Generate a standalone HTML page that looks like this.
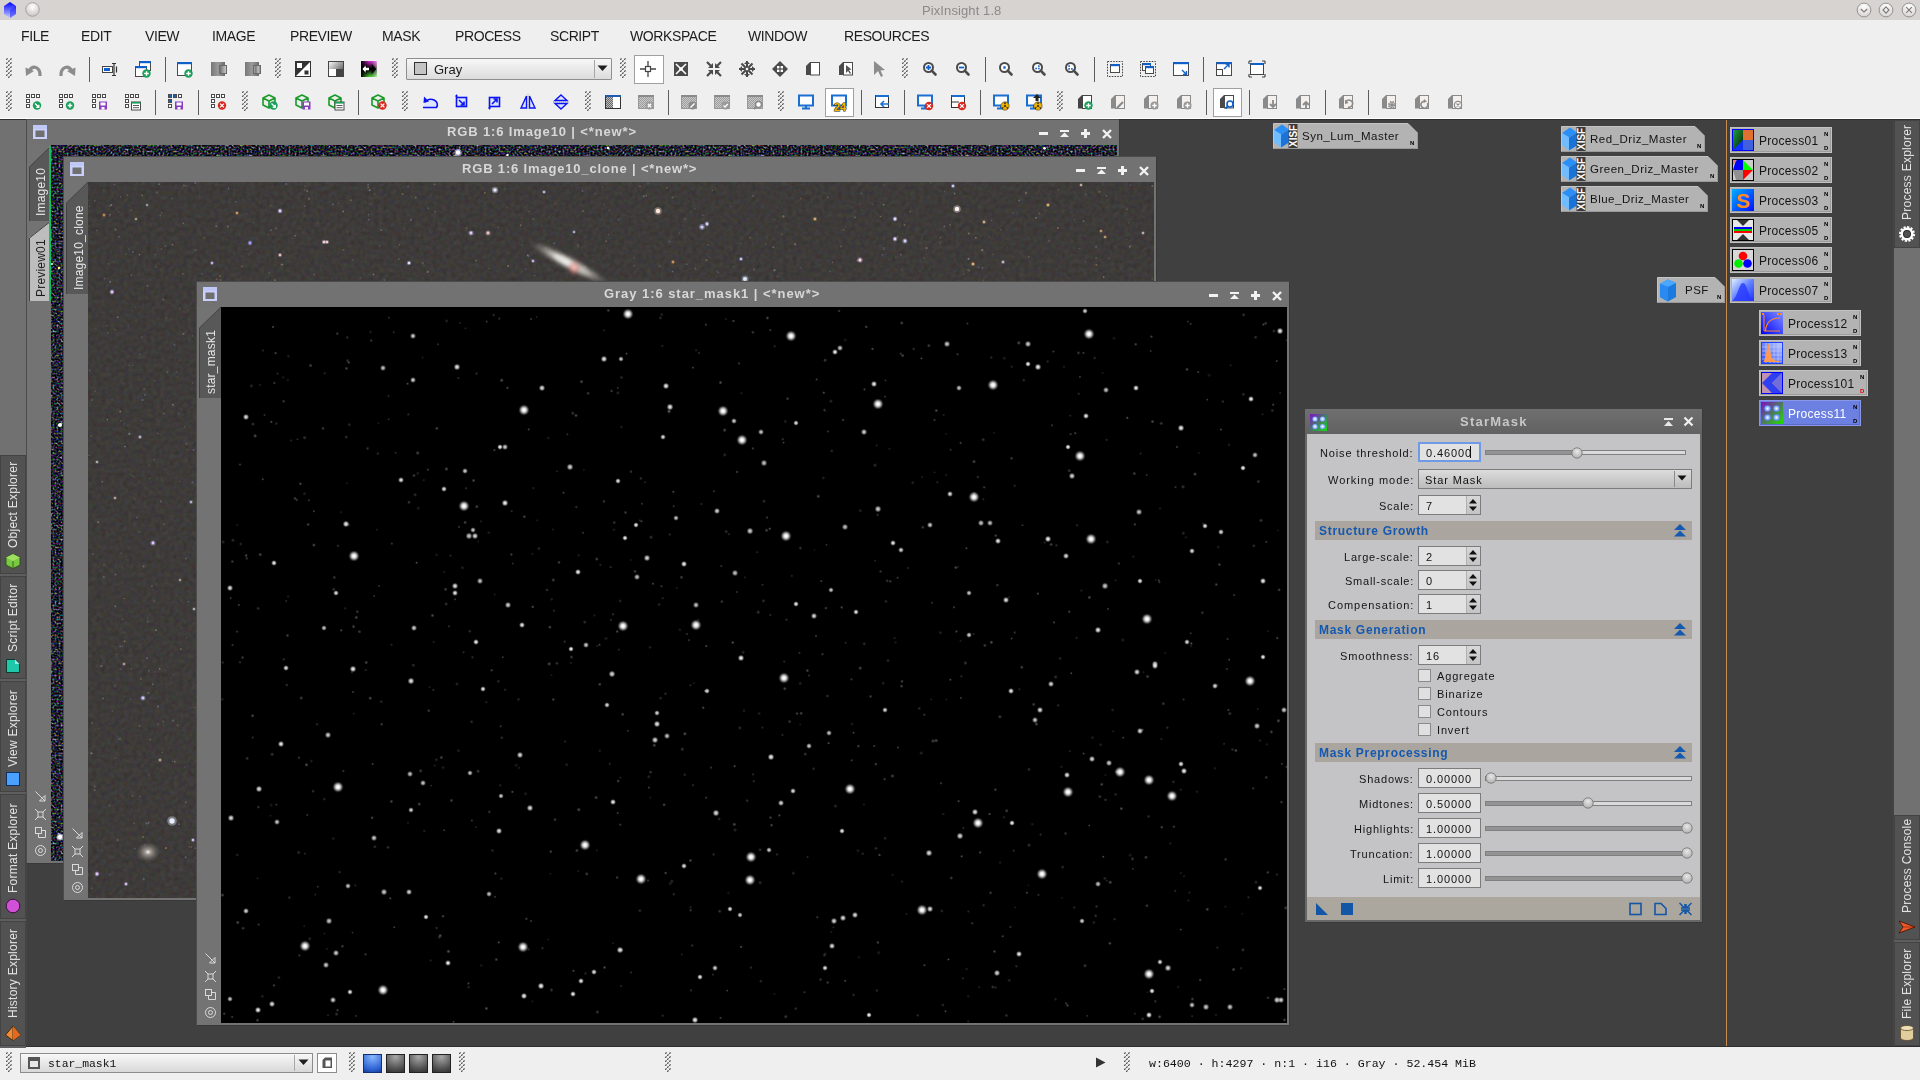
<!DOCTYPE html>
<html><head><meta charset="utf-8"><title>PixInsight</title><style>
*{box-sizing:border-box;margin:0;padding:0}
html,body{width:1920px;height:1080px;overflow:hidden;background:#404040;font-family:"Liberation Sans",sans-serif;-webkit-font-smoothing:antialiased}
.t{will-change:transform}
.a{position:absolute}
.t{position:absolute;white-space:nowrap;line-height:1}
.mono{font-family:"Liberation Mono",monospace}
svg{position:absolute;overflow:visible}
.hd{position:absolute;width:6px;background-image:repeating-linear-gradient(45deg,#9a9a9a 0 1px,transparent 1px 3px),repeating-linear-gradient(-45deg,#9a9a9a 0 1px,transparent 1px 3px)}
.sep{position:absolute;width:1px;background:#5a5a5a}
.btnsel{position:absolute;background:#fff;border:1px solid #a8a8a8}
</style></head><body>
<div class="a" style="left:0px;top:0px;width:1920px;height:20px;background:#d7d3d0;"></div>
<div class="a" style="left:0px;top:20px;width:1920px;height:98px;background:#efefef;"></div>
<div class="a" style="left:0px;top:118px;width:1920px;height:1px;background:#ffffff;"></div>
<div class="a" style="left:0px;top:119px;width:1920px;height:1px;background:#2e2e2e;"></div>
<div class="a" style="left:0px;top:120px;width:1920px;height:926px;background:#404040;"></div>
<div class="a" style="left:0px;top:1046px;width:1920px;height:1px;background:#2e2e2e;"></div>
<div class="a" style="left:0px;top:1047px;width:1920px;height:33px;background:#efefef;"></div>
<svg style="left:3px;top:1px;" width="14" height="18" viewBox="0 0 14 18"><defs><linearGradient id="cubeg" x1="0" y1="0" x2="0" y2="1"><stop offset="0" stop-color="#0000ff"/><stop offset="1" stop-color="#c8d0ff"/></linearGradient></defs><polygon points="7,1 13,5 13,13 7,17 1,13 1,5" fill="url(#cubeg)"/><polygon points="7,9 13,5 13,13 7,17" fill="#2020ff" opacity="0.5"/></svg>
<svg style="left:25px;top:2px;" width="16" height="16" viewBox="0 0 16 16"><defs><radialGradient id="rbg" cx="0.5" cy="0.3" r="0.7"><stop offset="0" stop-color="#ffffff"/><stop offset="1" stop-color="#c9c6c3"/></radialGradient></defs><circle cx="7.5" cy="7.5" r="6.8" fill="url(#rbg)" stroke="#9a9794" stroke-width="0.8"/><circle cx="7.5" cy="7.5" r="0.7" fill="#fff"/></svg>
<div class="t" style="left:922px;top:4px;font-size:13px;color:#8c8a88;font-weight:normal;letter-spacing:0.1px">PixInsight 1.8</div>
<svg style="left:1855.5px;top:1.6px;" width="16" height="16" viewBox="0 0 16 16"><defs><radialGradient id="rbg2" cx="0.5" cy="0.25" r="0.8"><stop offset="0" stop-color="#ffffff"/><stop offset="1" stop-color="#d4d1ce"/></radialGradient></defs><circle cx="8" cy="8" r="6.9" fill="url(#rbg2)" stroke="#8d8a87" stroke-width="0.9"/><polyline points="4.8,7 8,10 11.2,7" fill="none" stroke="#7a7a7a" stroke-width="1.2"/></svg>
<svg style="left:1878.3px;top:1.6px;" width="16" height="16" viewBox="0 0 16 16"><defs><radialGradient id="rbg2" cx="0.5" cy="0.25" r="0.8"><stop offset="0" stop-color="#ffffff"/><stop offset="1" stop-color="#d4d1ce"/></radialGradient></defs><circle cx="8" cy="8" r="6.9" fill="url(#rbg2)" stroke="#8d8a87" stroke-width="0.9"/><polygon points="8,4.8 11,8 8,11.2 5,8" fill="none" stroke="#7a7a7a" stroke-width="1.2"/></svg>
<svg style="left:1901.4px;top:1.6px;" width="16" height="16" viewBox="0 0 16 16"><defs><radialGradient id="rbg2" cx="0.5" cy="0.25" r="0.8"><stop offset="0" stop-color="#ffffff"/><stop offset="1" stop-color="#d4d1ce"/></radialGradient></defs><circle cx="8" cy="8" r="6.9" fill="url(#rbg2)" stroke="#8d8a87" stroke-width="0.9"/><path d="M5.2,5.2 L10.8,10.8 M10.8,5.2 L5.2,10.8" stroke="#7a7a7a" stroke-width="1.2"/></svg>
<div class="t" style="left:21px;top:29px;font-size:14px;color:#1c1c1c;font-weight:normal;letter-spacing:-0.4px">FILE</div>
<div class="t" style="left:81px;top:29px;font-size:14px;color:#1c1c1c;font-weight:normal;letter-spacing:-0.4px">EDIT</div>
<div class="t" style="left:145px;top:29px;font-size:14px;color:#1c1c1c;font-weight:normal;letter-spacing:-0.4px">VIEW</div>
<div class="t" style="left:212px;top:29px;font-size:14px;color:#1c1c1c;font-weight:normal;letter-spacing:-0.4px">IMAGE</div>
<div class="t" style="left:290px;top:29px;font-size:14px;color:#1c1c1c;font-weight:normal;letter-spacing:-0.4px">PREVIEW</div>
<div class="t" style="left:382px;top:29px;font-size:14px;color:#1c1c1c;font-weight:normal;letter-spacing:-0.4px">MASK</div>
<div class="t" style="left:455px;top:29px;font-size:14px;color:#1c1c1c;font-weight:normal;letter-spacing:-0.4px">PROCESS</div>
<div class="t" style="left:550px;top:29px;font-size:14px;color:#1c1c1c;font-weight:normal;letter-spacing:-0.4px">SCRIPT</div>
<div class="t" style="left:630px;top:29px;font-size:14px;color:#1c1c1c;font-weight:normal;letter-spacing:-0.4px">WORKSPACE</div>
<div class="t" style="left:748px;top:29px;font-size:14px;color:#1c1c1c;font-weight:normal;letter-spacing:-0.4px">WINDOW</div>
<div class="t" style="left:844px;top:29px;font-size:14px;color:#1c1c1c;font-weight:normal;letter-spacing:-0.4px">RESOURCES</div>
<svg style="left:6px;top:58px;" width="6" height="22" viewBox="0 0 6 22"><rect x="0" y="0" width="2" height="2" fill="#b4b4b4"/><rect x="0" y="1" width="1" height="1" fill="#5a5a5a"/><rect x="1" y="0" width="1" height="1" fill="#888"/><rect x="4" y="0" width="2" height="2" fill="#b4b4b4"/><rect x="4" y="1" width="1" height="1" fill="#5a5a5a"/><rect x="5" y="0" width="1" height="1" fill="#888"/><rect x="2" y="2" width="2" height="2" fill="#b4b4b4"/><rect x="2" y="3" width="1" height="1" fill="#5a5a5a"/><rect x="3" y="2" width="1" height="1" fill="#888"/><rect x="0" y="4" width="2" height="2" fill="#b4b4b4"/><rect x="0" y="5" width="1" height="1" fill="#5a5a5a"/><rect x="1" y="4" width="1" height="1" fill="#888"/><rect x="4" y="4" width="2" height="2" fill="#b4b4b4"/><rect x="4" y="5" width="1" height="1" fill="#5a5a5a"/><rect x="5" y="4" width="1" height="1" fill="#888"/><rect x="2" y="6" width="2" height="2" fill="#b4b4b4"/><rect x="2" y="7" width="1" height="1" fill="#5a5a5a"/><rect x="3" y="6" width="1" height="1" fill="#888"/><rect x="0" y="8" width="2" height="2" fill="#b4b4b4"/><rect x="0" y="9" width="1" height="1" fill="#5a5a5a"/><rect x="1" y="8" width="1" height="1" fill="#888"/><rect x="4" y="8" width="2" height="2" fill="#b4b4b4"/><rect x="4" y="9" width="1" height="1" fill="#5a5a5a"/><rect x="5" y="8" width="1" height="1" fill="#888"/><rect x="2" y="10" width="2" height="2" fill="#b4b4b4"/><rect x="2" y="11" width="1" height="1" fill="#5a5a5a"/><rect x="3" y="10" width="1" height="1" fill="#888"/><rect x="0" y="12" width="2" height="2" fill="#b4b4b4"/><rect x="0" y="13" width="1" height="1" fill="#5a5a5a"/><rect x="1" y="12" width="1" height="1" fill="#888"/><rect x="4" y="12" width="2" height="2" fill="#b4b4b4"/><rect x="4" y="13" width="1" height="1" fill="#5a5a5a"/><rect x="5" y="12" width="1" height="1" fill="#888"/><rect x="2" y="14" width="2" height="2" fill="#b4b4b4"/><rect x="2" y="15" width="1" height="1" fill="#5a5a5a"/><rect x="3" y="14" width="1" height="1" fill="#888"/><rect x="0" y="16" width="2" height="2" fill="#b4b4b4"/><rect x="0" y="17" width="1" height="1" fill="#5a5a5a"/><rect x="1" y="16" width="1" height="1" fill="#888"/><rect x="4" y="16" width="2" height="2" fill="#b4b4b4"/><rect x="4" y="17" width="1" height="1" fill="#5a5a5a"/><rect x="5" y="16" width="1" height="1" fill="#888"/><rect x="2" y="18" width="2" height="2" fill="#b4b4b4"/><rect x="2" y="19" width="1" height="1" fill="#5a5a5a"/><rect x="3" y="18" width="1" height="1" fill="#888"/></svg>
<svg style="left:275px;top:58px;" width="6" height="22" viewBox="0 0 6 22"><rect x="0" y="0" width="2" height="2" fill="#b4b4b4"/><rect x="0" y="1" width="1" height="1" fill="#5a5a5a"/><rect x="1" y="0" width="1" height="1" fill="#888"/><rect x="4" y="0" width="2" height="2" fill="#b4b4b4"/><rect x="4" y="1" width="1" height="1" fill="#5a5a5a"/><rect x="5" y="0" width="1" height="1" fill="#888"/><rect x="2" y="2" width="2" height="2" fill="#b4b4b4"/><rect x="2" y="3" width="1" height="1" fill="#5a5a5a"/><rect x="3" y="2" width="1" height="1" fill="#888"/><rect x="0" y="4" width="2" height="2" fill="#b4b4b4"/><rect x="0" y="5" width="1" height="1" fill="#5a5a5a"/><rect x="1" y="4" width="1" height="1" fill="#888"/><rect x="4" y="4" width="2" height="2" fill="#b4b4b4"/><rect x="4" y="5" width="1" height="1" fill="#5a5a5a"/><rect x="5" y="4" width="1" height="1" fill="#888"/><rect x="2" y="6" width="2" height="2" fill="#b4b4b4"/><rect x="2" y="7" width="1" height="1" fill="#5a5a5a"/><rect x="3" y="6" width="1" height="1" fill="#888"/><rect x="0" y="8" width="2" height="2" fill="#b4b4b4"/><rect x="0" y="9" width="1" height="1" fill="#5a5a5a"/><rect x="1" y="8" width="1" height="1" fill="#888"/><rect x="4" y="8" width="2" height="2" fill="#b4b4b4"/><rect x="4" y="9" width="1" height="1" fill="#5a5a5a"/><rect x="5" y="8" width="1" height="1" fill="#888"/><rect x="2" y="10" width="2" height="2" fill="#b4b4b4"/><rect x="2" y="11" width="1" height="1" fill="#5a5a5a"/><rect x="3" y="10" width="1" height="1" fill="#888"/><rect x="0" y="12" width="2" height="2" fill="#b4b4b4"/><rect x="0" y="13" width="1" height="1" fill="#5a5a5a"/><rect x="1" y="12" width="1" height="1" fill="#888"/><rect x="4" y="12" width="2" height="2" fill="#b4b4b4"/><rect x="4" y="13" width="1" height="1" fill="#5a5a5a"/><rect x="5" y="12" width="1" height="1" fill="#888"/><rect x="2" y="14" width="2" height="2" fill="#b4b4b4"/><rect x="2" y="15" width="1" height="1" fill="#5a5a5a"/><rect x="3" y="14" width="1" height="1" fill="#888"/><rect x="0" y="16" width="2" height="2" fill="#b4b4b4"/><rect x="0" y="17" width="1" height="1" fill="#5a5a5a"/><rect x="1" y="16" width="1" height="1" fill="#888"/><rect x="4" y="16" width="2" height="2" fill="#b4b4b4"/><rect x="4" y="17" width="1" height="1" fill="#5a5a5a"/><rect x="5" y="16" width="1" height="1" fill="#888"/><rect x="2" y="18" width="2" height="2" fill="#b4b4b4"/><rect x="2" y="19" width="1" height="1" fill="#5a5a5a"/><rect x="3" y="18" width="1" height="1" fill="#888"/></svg>
<svg style="left:392px;top:58px;" width="6" height="22" viewBox="0 0 6 22"><rect x="0" y="0" width="2" height="2" fill="#b4b4b4"/><rect x="0" y="1" width="1" height="1" fill="#5a5a5a"/><rect x="1" y="0" width="1" height="1" fill="#888"/><rect x="4" y="0" width="2" height="2" fill="#b4b4b4"/><rect x="4" y="1" width="1" height="1" fill="#5a5a5a"/><rect x="5" y="0" width="1" height="1" fill="#888"/><rect x="2" y="2" width="2" height="2" fill="#b4b4b4"/><rect x="2" y="3" width="1" height="1" fill="#5a5a5a"/><rect x="3" y="2" width="1" height="1" fill="#888"/><rect x="0" y="4" width="2" height="2" fill="#b4b4b4"/><rect x="0" y="5" width="1" height="1" fill="#5a5a5a"/><rect x="1" y="4" width="1" height="1" fill="#888"/><rect x="4" y="4" width="2" height="2" fill="#b4b4b4"/><rect x="4" y="5" width="1" height="1" fill="#5a5a5a"/><rect x="5" y="4" width="1" height="1" fill="#888"/><rect x="2" y="6" width="2" height="2" fill="#b4b4b4"/><rect x="2" y="7" width="1" height="1" fill="#5a5a5a"/><rect x="3" y="6" width="1" height="1" fill="#888"/><rect x="0" y="8" width="2" height="2" fill="#b4b4b4"/><rect x="0" y="9" width="1" height="1" fill="#5a5a5a"/><rect x="1" y="8" width="1" height="1" fill="#888"/><rect x="4" y="8" width="2" height="2" fill="#b4b4b4"/><rect x="4" y="9" width="1" height="1" fill="#5a5a5a"/><rect x="5" y="8" width="1" height="1" fill="#888"/><rect x="2" y="10" width="2" height="2" fill="#b4b4b4"/><rect x="2" y="11" width="1" height="1" fill="#5a5a5a"/><rect x="3" y="10" width="1" height="1" fill="#888"/><rect x="0" y="12" width="2" height="2" fill="#b4b4b4"/><rect x="0" y="13" width="1" height="1" fill="#5a5a5a"/><rect x="1" y="12" width="1" height="1" fill="#888"/><rect x="4" y="12" width="2" height="2" fill="#b4b4b4"/><rect x="4" y="13" width="1" height="1" fill="#5a5a5a"/><rect x="5" y="12" width="1" height="1" fill="#888"/><rect x="2" y="14" width="2" height="2" fill="#b4b4b4"/><rect x="2" y="15" width="1" height="1" fill="#5a5a5a"/><rect x="3" y="14" width="1" height="1" fill="#888"/><rect x="0" y="16" width="2" height="2" fill="#b4b4b4"/><rect x="0" y="17" width="1" height="1" fill="#5a5a5a"/><rect x="1" y="16" width="1" height="1" fill="#888"/><rect x="4" y="16" width="2" height="2" fill="#b4b4b4"/><rect x="4" y="17" width="1" height="1" fill="#5a5a5a"/><rect x="5" y="16" width="1" height="1" fill="#888"/><rect x="2" y="18" width="2" height="2" fill="#b4b4b4"/><rect x="2" y="19" width="1" height="1" fill="#5a5a5a"/><rect x="3" y="18" width="1" height="1" fill="#888"/></svg>
<svg style="left:620px;top:58px;" width="6" height="22" viewBox="0 0 6 22"><rect x="0" y="0" width="2" height="2" fill="#b4b4b4"/><rect x="0" y="1" width="1" height="1" fill="#5a5a5a"/><rect x="1" y="0" width="1" height="1" fill="#888"/><rect x="4" y="0" width="2" height="2" fill="#b4b4b4"/><rect x="4" y="1" width="1" height="1" fill="#5a5a5a"/><rect x="5" y="0" width="1" height="1" fill="#888"/><rect x="2" y="2" width="2" height="2" fill="#b4b4b4"/><rect x="2" y="3" width="1" height="1" fill="#5a5a5a"/><rect x="3" y="2" width="1" height="1" fill="#888"/><rect x="0" y="4" width="2" height="2" fill="#b4b4b4"/><rect x="0" y="5" width="1" height="1" fill="#5a5a5a"/><rect x="1" y="4" width="1" height="1" fill="#888"/><rect x="4" y="4" width="2" height="2" fill="#b4b4b4"/><rect x="4" y="5" width="1" height="1" fill="#5a5a5a"/><rect x="5" y="4" width="1" height="1" fill="#888"/><rect x="2" y="6" width="2" height="2" fill="#b4b4b4"/><rect x="2" y="7" width="1" height="1" fill="#5a5a5a"/><rect x="3" y="6" width="1" height="1" fill="#888"/><rect x="0" y="8" width="2" height="2" fill="#b4b4b4"/><rect x="0" y="9" width="1" height="1" fill="#5a5a5a"/><rect x="1" y="8" width="1" height="1" fill="#888"/><rect x="4" y="8" width="2" height="2" fill="#b4b4b4"/><rect x="4" y="9" width="1" height="1" fill="#5a5a5a"/><rect x="5" y="8" width="1" height="1" fill="#888"/><rect x="2" y="10" width="2" height="2" fill="#b4b4b4"/><rect x="2" y="11" width="1" height="1" fill="#5a5a5a"/><rect x="3" y="10" width="1" height="1" fill="#888"/><rect x="0" y="12" width="2" height="2" fill="#b4b4b4"/><rect x="0" y="13" width="1" height="1" fill="#5a5a5a"/><rect x="1" y="12" width="1" height="1" fill="#888"/><rect x="4" y="12" width="2" height="2" fill="#b4b4b4"/><rect x="4" y="13" width="1" height="1" fill="#5a5a5a"/><rect x="5" y="12" width="1" height="1" fill="#888"/><rect x="2" y="14" width="2" height="2" fill="#b4b4b4"/><rect x="2" y="15" width="1" height="1" fill="#5a5a5a"/><rect x="3" y="14" width="1" height="1" fill="#888"/><rect x="0" y="16" width="2" height="2" fill="#b4b4b4"/><rect x="0" y="17" width="1" height="1" fill="#5a5a5a"/><rect x="1" y="16" width="1" height="1" fill="#888"/><rect x="4" y="16" width="2" height="2" fill="#b4b4b4"/><rect x="4" y="17" width="1" height="1" fill="#5a5a5a"/><rect x="5" y="16" width="1" height="1" fill="#888"/><rect x="2" y="18" width="2" height="2" fill="#b4b4b4"/><rect x="2" y="19" width="1" height="1" fill="#5a5a5a"/><rect x="3" y="18" width="1" height="1" fill="#888"/></svg>
<svg style="left:902px;top:58px;" width="6" height="22" viewBox="0 0 6 22"><rect x="0" y="0" width="2" height="2" fill="#b4b4b4"/><rect x="0" y="1" width="1" height="1" fill="#5a5a5a"/><rect x="1" y="0" width="1" height="1" fill="#888"/><rect x="4" y="0" width="2" height="2" fill="#b4b4b4"/><rect x="4" y="1" width="1" height="1" fill="#5a5a5a"/><rect x="5" y="0" width="1" height="1" fill="#888"/><rect x="2" y="2" width="2" height="2" fill="#b4b4b4"/><rect x="2" y="3" width="1" height="1" fill="#5a5a5a"/><rect x="3" y="2" width="1" height="1" fill="#888"/><rect x="0" y="4" width="2" height="2" fill="#b4b4b4"/><rect x="0" y="5" width="1" height="1" fill="#5a5a5a"/><rect x="1" y="4" width="1" height="1" fill="#888"/><rect x="4" y="4" width="2" height="2" fill="#b4b4b4"/><rect x="4" y="5" width="1" height="1" fill="#5a5a5a"/><rect x="5" y="4" width="1" height="1" fill="#888"/><rect x="2" y="6" width="2" height="2" fill="#b4b4b4"/><rect x="2" y="7" width="1" height="1" fill="#5a5a5a"/><rect x="3" y="6" width="1" height="1" fill="#888"/><rect x="0" y="8" width="2" height="2" fill="#b4b4b4"/><rect x="0" y="9" width="1" height="1" fill="#5a5a5a"/><rect x="1" y="8" width="1" height="1" fill="#888"/><rect x="4" y="8" width="2" height="2" fill="#b4b4b4"/><rect x="4" y="9" width="1" height="1" fill="#5a5a5a"/><rect x="5" y="8" width="1" height="1" fill="#888"/><rect x="2" y="10" width="2" height="2" fill="#b4b4b4"/><rect x="2" y="11" width="1" height="1" fill="#5a5a5a"/><rect x="3" y="10" width="1" height="1" fill="#888"/><rect x="0" y="12" width="2" height="2" fill="#b4b4b4"/><rect x="0" y="13" width="1" height="1" fill="#5a5a5a"/><rect x="1" y="12" width="1" height="1" fill="#888"/><rect x="4" y="12" width="2" height="2" fill="#b4b4b4"/><rect x="4" y="13" width="1" height="1" fill="#5a5a5a"/><rect x="5" y="12" width="1" height="1" fill="#888"/><rect x="2" y="14" width="2" height="2" fill="#b4b4b4"/><rect x="2" y="15" width="1" height="1" fill="#5a5a5a"/><rect x="3" y="14" width="1" height="1" fill="#888"/><rect x="0" y="16" width="2" height="2" fill="#b4b4b4"/><rect x="0" y="17" width="1" height="1" fill="#5a5a5a"/><rect x="1" y="16" width="1" height="1" fill="#888"/><rect x="4" y="16" width="2" height="2" fill="#b4b4b4"/><rect x="4" y="17" width="1" height="1" fill="#5a5a5a"/><rect x="5" y="16" width="1" height="1" fill="#888"/><rect x="2" y="18" width="2" height="2" fill="#b4b4b4"/><rect x="2" y="19" width="1" height="1" fill="#5a5a5a"/><rect x="3" y="18" width="1" height="1" fill="#888"/></svg>
<svg style="left:6px;top:91px;" width="6" height="22" viewBox="0 0 6 22"><rect x="0" y="0" width="2" height="2" fill="#b4b4b4"/><rect x="0" y="1" width="1" height="1" fill="#5a5a5a"/><rect x="1" y="0" width="1" height="1" fill="#888"/><rect x="4" y="0" width="2" height="2" fill="#b4b4b4"/><rect x="4" y="1" width="1" height="1" fill="#5a5a5a"/><rect x="5" y="0" width="1" height="1" fill="#888"/><rect x="2" y="2" width="2" height="2" fill="#b4b4b4"/><rect x="2" y="3" width="1" height="1" fill="#5a5a5a"/><rect x="3" y="2" width="1" height="1" fill="#888"/><rect x="0" y="4" width="2" height="2" fill="#b4b4b4"/><rect x="0" y="5" width="1" height="1" fill="#5a5a5a"/><rect x="1" y="4" width="1" height="1" fill="#888"/><rect x="4" y="4" width="2" height="2" fill="#b4b4b4"/><rect x="4" y="5" width="1" height="1" fill="#5a5a5a"/><rect x="5" y="4" width="1" height="1" fill="#888"/><rect x="2" y="6" width="2" height="2" fill="#b4b4b4"/><rect x="2" y="7" width="1" height="1" fill="#5a5a5a"/><rect x="3" y="6" width="1" height="1" fill="#888"/><rect x="0" y="8" width="2" height="2" fill="#b4b4b4"/><rect x="0" y="9" width="1" height="1" fill="#5a5a5a"/><rect x="1" y="8" width="1" height="1" fill="#888"/><rect x="4" y="8" width="2" height="2" fill="#b4b4b4"/><rect x="4" y="9" width="1" height="1" fill="#5a5a5a"/><rect x="5" y="8" width="1" height="1" fill="#888"/><rect x="2" y="10" width="2" height="2" fill="#b4b4b4"/><rect x="2" y="11" width="1" height="1" fill="#5a5a5a"/><rect x="3" y="10" width="1" height="1" fill="#888"/><rect x="0" y="12" width="2" height="2" fill="#b4b4b4"/><rect x="0" y="13" width="1" height="1" fill="#5a5a5a"/><rect x="1" y="12" width="1" height="1" fill="#888"/><rect x="4" y="12" width="2" height="2" fill="#b4b4b4"/><rect x="4" y="13" width="1" height="1" fill="#5a5a5a"/><rect x="5" y="12" width="1" height="1" fill="#888"/><rect x="2" y="14" width="2" height="2" fill="#b4b4b4"/><rect x="2" y="15" width="1" height="1" fill="#5a5a5a"/><rect x="3" y="14" width="1" height="1" fill="#888"/><rect x="0" y="16" width="2" height="2" fill="#b4b4b4"/><rect x="0" y="17" width="1" height="1" fill="#5a5a5a"/><rect x="1" y="16" width="1" height="1" fill="#888"/><rect x="4" y="16" width="2" height="2" fill="#b4b4b4"/><rect x="4" y="17" width="1" height="1" fill="#5a5a5a"/><rect x="5" y="16" width="1" height="1" fill="#888"/><rect x="2" y="18" width="2" height="2" fill="#b4b4b4"/><rect x="2" y="19" width="1" height="1" fill="#5a5a5a"/><rect x="3" y="18" width="1" height="1" fill="#888"/></svg>
<svg style="left:242px;top:91px;" width="6" height="22" viewBox="0 0 6 22"><rect x="0" y="0" width="2" height="2" fill="#b4b4b4"/><rect x="0" y="1" width="1" height="1" fill="#5a5a5a"/><rect x="1" y="0" width="1" height="1" fill="#888"/><rect x="4" y="0" width="2" height="2" fill="#b4b4b4"/><rect x="4" y="1" width="1" height="1" fill="#5a5a5a"/><rect x="5" y="0" width="1" height="1" fill="#888"/><rect x="2" y="2" width="2" height="2" fill="#b4b4b4"/><rect x="2" y="3" width="1" height="1" fill="#5a5a5a"/><rect x="3" y="2" width="1" height="1" fill="#888"/><rect x="0" y="4" width="2" height="2" fill="#b4b4b4"/><rect x="0" y="5" width="1" height="1" fill="#5a5a5a"/><rect x="1" y="4" width="1" height="1" fill="#888"/><rect x="4" y="4" width="2" height="2" fill="#b4b4b4"/><rect x="4" y="5" width="1" height="1" fill="#5a5a5a"/><rect x="5" y="4" width="1" height="1" fill="#888"/><rect x="2" y="6" width="2" height="2" fill="#b4b4b4"/><rect x="2" y="7" width="1" height="1" fill="#5a5a5a"/><rect x="3" y="6" width="1" height="1" fill="#888"/><rect x="0" y="8" width="2" height="2" fill="#b4b4b4"/><rect x="0" y="9" width="1" height="1" fill="#5a5a5a"/><rect x="1" y="8" width="1" height="1" fill="#888"/><rect x="4" y="8" width="2" height="2" fill="#b4b4b4"/><rect x="4" y="9" width="1" height="1" fill="#5a5a5a"/><rect x="5" y="8" width="1" height="1" fill="#888"/><rect x="2" y="10" width="2" height="2" fill="#b4b4b4"/><rect x="2" y="11" width="1" height="1" fill="#5a5a5a"/><rect x="3" y="10" width="1" height="1" fill="#888"/><rect x="0" y="12" width="2" height="2" fill="#b4b4b4"/><rect x="0" y="13" width="1" height="1" fill="#5a5a5a"/><rect x="1" y="12" width="1" height="1" fill="#888"/><rect x="4" y="12" width="2" height="2" fill="#b4b4b4"/><rect x="4" y="13" width="1" height="1" fill="#5a5a5a"/><rect x="5" y="12" width="1" height="1" fill="#888"/><rect x="2" y="14" width="2" height="2" fill="#b4b4b4"/><rect x="2" y="15" width="1" height="1" fill="#5a5a5a"/><rect x="3" y="14" width="1" height="1" fill="#888"/><rect x="0" y="16" width="2" height="2" fill="#b4b4b4"/><rect x="0" y="17" width="1" height="1" fill="#5a5a5a"/><rect x="1" y="16" width="1" height="1" fill="#888"/><rect x="4" y="16" width="2" height="2" fill="#b4b4b4"/><rect x="4" y="17" width="1" height="1" fill="#5a5a5a"/><rect x="5" y="16" width="1" height="1" fill="#888"/><rect x="2" y="18" width="2" height="2" fill="#b4b4b4"/><rect x="2" y="19" width="1" height="1" fill="#5a5a5a"/><rect x="3" y="18" width="1" height="1" fill="#888"/></svg>
<svg style="left:402px;top:91px;" width="6" height="22" viewBox="0 0 6 22"><rect x="0" y="0" width="2" height="2" fill="#b4b4b4"/><rect x="0" y="1" width="1" height="1" fill="#5a5a5a"/><rect x="1" y="0" width="1" height="1" fill="#888"/><rect x="4" y="0" width="2" height="2" fill="#b4b4b4"/><rect x="4" y="1" width="1" height="1" fill="#5a5a5a"/><rect x="5" y="0" width="1" height="1" fill="#888"/><rect x="2" y="2" width="2" height="2" fill="#b4b4b4"/><rect x="2" y="3" width="1" height="1" fill="#5a5a5a"/><rect x="3" y="2" width="1" height="1" fill="#888"/><rect x="0" y="4" width="2" height="2" fill="#b4b4b4"/><rect x="0" y="5" width="1" height="1" fill="#5a5a5a"/><rect x="1" y="4" width="1" height="1" fill="#888"/><rect x="4" y="4" width="2" height="2" fill="#b4b4b4"/><rect x="4" y="5" width="1" height="1" fill="#5a5a5a"/><rect x="5" y="4" width="1" height="1" fill="#888"/><rect x="2" y="6" width="2" height="2" fill="#b4b4b4"/><rect x="2" y="7" width="1" height="1" fill="#5a5a5a"/><rect x="3" y="6" width="1" height="1" fill="#888"/><rect x="0" y="8" width="2" height="2" fill="#b4b4b4"/><rect x="0" y="9" width="1" height="1" fill="#5a5a5a"/><rect x="1" y="8" width="1" height="1" fill="#888"/><rect x="4" y="8" width="2" height="2" fill="#b4b4b4"/><rect x="4" y="9" width="1" height="1" fill="#5a5a5a"/><rect x="5" y="8" width="1" height="1" fill="#888"/><rect x="2" y="10" width="2" height="2" fill="#b4b4b4"/><rect x="2" y="11" width="1" height="1" fill="#5a5a5a"/><rect x="3" y="10" width="1" height="1" fill="#888"/><rect x="0" y="12" width="2" height="2" fill="#b4b4b4"/><rect x="0" y="13" width="1" height="1" fill="#5a5a5a"/><rect x="1" y="12" width="1" height="1" fill="#888"/><rect x="4" y="12" width="2" height="2" fill="#b4b4b4"/><rect x="4" y="13" width="1" height="1" fill="#5a5a5a"/><rect x="5" y="12" width="1" height="1" fill="#888"/><rect x="2" y="14" width="2" height="2" fill="#b4b4b4"/><rect x="2" y="15" width="1" height="1" fill="#5a5a5a"/><rect x="3" y="14" width="1" height="1" fill="#888"/><rect x="0" y="16" width="2" height="2" fill="#b4b4b4"/><rect x="0" y="17" width="1" height="1" fill="#5a5a5a"/><rect x="1" y="16" width="1" height="1" fill="#888"/><rect x="4" y="16" width="2" height="2" fill="#b4b4b4"/><rect x="4" y="17" width="1" height="1" fill="#5a5a5a"/><rect x="5" y="16" width="1" height="1" fill="#888"/><rect x="2" y="18" width="2" height="2" fill="#b4b4b4"/><rect x="2" y="19" width="1" height="1" fill="#5a5a5a"/><rect x="3" y="18" width="1" height="1" fill="#888"/></svg>
<svg style="left:585px;top:91px;" width="6" height="22" viewBox="0 0 6 22"><rect x="0" y="0" width="2" height="2" fill="#b4b4b4"/><rect x="0" y="1" width="1" height="1" fill="#5a5a5a"/><rect x="1" y="0" width="1" height="1" fill="#888"/><rect x="4" y="0" width="2" height="2" fill="#b4b4b4"/><rect x="4" y="1" width="1" height="1" fill="#5a5a5a"/><rect x="5" y="0" width="1" height="1" fill="#888"/><rect x="2" y="2" width="2" height="2" fill="#b4b4b4"/><rect x="2" y="3" width="1" height="1" fill="#5a5a5a"/><rect x="3" y="2" width="1" height="1" fill="#888"/><rect x="0" y="4" width="2" height="2" fill="#b4b4b4"/><rect x="0" y="5" width="1" height="1" fill="#5a5a5a"/><rect x="1" y="4" width="1" height="1" fill="#888"/><rect x="4" y="4" width="2" height="2" fill="#b4b4b4"/><rect x="4" y="5" width="1" height="1" fill="#5a5a5a"/><rect x="5" y="4" width="1" height="1" fill="#888"/><rect x="2" y="6" width="2" height="2" fill="#b4b4b4"/><rect x="2" y="7" width="1" height="1" fill="#5a5a5a"/><rect x="3" y="6" width="1" height="1" fill="#888"/><rect x="0" y="8" width="2" height="2" fill="#b4b4b4"/><rect x="0" y="9" width="1" height="1" fill="#5a5a5a"/><rect x="1" y="8" width="1" height="1" fill="#888"/><rect x="4" y="8" width="2" height="2" fill="#b4b4b4"/><rect x="4" y="9" width="1" height="1" fill="#5a5a5a"/><rect x="5" y="8" width="1" height="1" fill="#888"/><rect x="2" y="10" width="2" height="2" fill="#b4b4b4"/><rect x="2" y="11" width="1" height="1" fill="#5a5a5a"/><rect x="3" y="10" width="1" height="1" fill="#888"/><rect x="0" y="12" width="2" height="2" fill="#b4b4b4"/><rect x="0" y="13" width="1" height="1" fill="#5a5a5a"/><rect x="1" y="12" width="1" height="1" fill="#888"/><rect x="4" y="12" width="2" height="2" fill="#b4b4b4"/><rect x="4" y="13" width="1" height="1" fill="#5a5a5a"/><rect x="5" y="12" width="1" height="1" fill="#888"/><rect x="2" y="14" width="2" height="2" fill="#b4b4b4"/><rect x="2" y="15" width="1" height="1" fill="#5a5a5a"/><rect x="3" y="14" width="1" height="1" fill="#888"/><rect x="0" y="16" width="2" height="2" fill="#b4b4b4"/><rect x="0" y="17" width="1" height="1" fill="#5a5a5a"/><rect x="1" y="16" width="1" height="1" fill="#888"/><rect x="4" y="16" width="2" height="2" fill="#b4b4b4"/><rect x="4" y="17" width="1" height="1" fill="#5a5a5a"/><rect x="5" y="16" width="1" height="1" fill="#888"/><rect x="2" y="18" width="2" height="2" fill="#b4b4b4"/><rect x="2" y="19" width="1" height="1" fill="#5a5a5a"/><rect x="3" y="18" width="1" height="1" fill="#888"/></svg>
<svg style="left:778px;top:91px;" width="6" height="22" viewBox="0 0 6 22"><rect x="0" y="0" width="2" height="2" fill="#b4b4b4"/><rect x="0" y="1" width="1" height="1" fill="#5a5a5a"/><rect x="1" y="0" width="1" height="1" fill="#888"/><rect x="4" y="0" width="2" height="2" fill="#b4b4b4"/><rect x="4" y="1" width="1" height="1" fill="#5a5a5a"/><rect x="5" y="0" width="1" height="1" fill="#888"/><rect x="2" y="2" width="2" height="2" fill="#b4b4b4"/><rect x="2" y="3" width="1" height="1" fill="#5a5a5a"/><rect x="3" y="2" width="1" height="1" fill="#888"/><rect x="0" y="4" width="2" height="2" fill="#b4b4b4"/><rect x="0" y="5" width="1" height="1" fill="#5a5a5a"/><rect x="1" y="4" width="1" height="1" fill="#888"/><rect x="4" y="4" width="2" height="2" fill="#b4b4b4"/><rect x="4" y="5" width="1" height="1" fill="#5a5a5a"/><rect x="5" y="4" width="1" height="1" fill="#888"/><rect x="2" y="6" width="2" height="2" fill="#b4b4b4"/><rect x="2" y="7" width="1" height="1" fill="#5a5a5a"/><rect x="3" y="6" width="1" height="1" fill="#888"/><rect x="0" y="8" width="2" height="2" fill="#b4b4b4"/><rect x="0" y="9" width="1" height="1" fill="#5a5a5a"/><rect x="1" y="8" width="1" height="1" fill="#888"/><rect x="4" y="8" width="2" height="2" fill="#b4b4b4"/><rect x="4" y="9" width="1" height="1" fill="#5a5a5a"/><rect x="5" y="8" width="1" height="1" fill="#888"/><rect x="2" y="10" width="2" height="2" fill="#b4b4b4"/><rect x="2" y="11" width="1" height="1" fill="#5a5a5a"/><rect x="3" y="10" width="1" height="1" fill="#888"/><rect x="0" y="12" width="2" height="2" fill="#b4b4b4"/><rect x="0" y="13" width="1" height="1" fill="#5a5a5a"/><rect x="1" y="12" width="1" height="1" fill="#888"/><rect x="4" y="12" width="2" height="2" fill="#b4b4b4"/><rect x="4" y="13" width="1" height="1" fill="#5a5a5a"/><rect x="5" y="12" width="1" height="1" fill="#888"/><rect x="2" y="14" width="2" height="2" fill="#b4b4b4"/><rect x="2" y="15" width="1" height="1" fill="#5a5a5a"/><rect x="3" y="14" width="1" height="1" fill="#888"/><rect x="0" y="16" width="2" height="2" fill="#b4b4b4"/><rect x="0" y="17" width="1" height="1" fill="#5a5a5a"/><rect x="1" y="16" width="1" height="1" fill="#888"/><rect x="4" y="16" width="2" height="2" fill="#b4b4b4"/><rect x="4" y="17" width="1" height="1" fill="#5a5a5a"/><rect x="5" y="16" width="1" height="1" fill="#888"/><rect x="2" y="18" width="2" height="2" fill="#b4b4b4"/><rect x="2" y="19" width="1" height="1" fill="#5a5a5a"/><rect x="3" y="18" width="1" height="1" fill="#888"/></svg>
<svg style="left:1057px;top:91px;" width="6" height="22" viewBox="0 0 6 22"><rect x="0" y="0" width="2" height="2" fill="#b4b4b4"/><rect x="0" y="1" width="1" height="1" fill="#5a5a5a"/><rect x="1" y="0" width="1" height="1" fill="#888"/><rect x="4" y="0" width="2" height="2" fill="#b4b4b4"/><rect x="4" y="1" width="1" height="1" fill="#5a5a5a"/><rect x="5" y="0" width="1" height="1" fill="#888"/><rect x="2" y="2" width="2" height="2" fill="#b4b4b4"/><rect x="2" y="3" width="1" height="1" fill="#5a5a5a"/><rect x="3" y="2" width="1" height="1" fill="#888"/><rect x="0" y="4" width="2" height="2" fill="#b4b4b4"/><rect x="0" y="5" width="1" height="1" fill="#5a5a5a"/><rect x="1" y="4" width="1" height="1" fill="#888"/><rect x="4" y="4" width="2" height="2" fill="#b4b4b4"/><rect x="4" y="5" width="1" height="1" fill="#5a5a5a"/><rect x="5" y="4" width="1" height="1" fill="#888"/><rect x="2" y="6" width="2" height="2" fill="#b4b4b4"/><rect x="2" y="7" width="1" height="1" fill="#5a5a5a"/><rect x="3" y="6" width="1" height="1" fill="#888"/><rect x="0" y="8" width="2" height="2" fill="#b4b4b4"/><rect x="0" y="9" width="1" height="1" fill="#5a5a5a"/><rect x="1" y="8" width="1" height="1" fill="#888"/><rect x="4" y="8" width="2" height="2" fill="#b4b4b4"/><rect x="4" y="9" width="1" height="1" fill="#5a5a5a"/><rect x="5" y="8" width="1" height="1" fill="#888"/><rect x="2" y="10" width="2" height="2" fill="#b4b4b4"/><rect x="2" y="11" width="1" height="1" fill="#5a5a5a"/><rect x="3" y="10" width="1" height="1" fill="#888"/><rect x="0" y="12" width="2" height="2" fill="#b4b4b4"/><rect x="0" y="13" width="1" height="1" fill="#5a5a5a"/><rect x="1" y="12" width="1" height="1" fill="#888"/><rect x="4" y="12" width="2" height="2" fill="#b4b4b4"/><rect x="4" y="13" width="1" height="1" fill="#5a5a5a"/><rect x="5" y="12" width="1" height="1" fill="#888"/><rect x="2" y="14" width="2" height="2" fill="#b4b4b4"/><rect x="2" y="15" width="1" height="1" fill="#5a5a5a"/><rect x="3" y="14" width="1" height="1" fill="#888"/><rect x="0" y="16" width="2" height="2" fill="#b4b4b4"/><rect x="0" y="17" width="1" height="1" fill="#5a5a5a"/><rect x="1" y="16" width="1" height="1" fill="#888"/><rect x="4" y="16" width="2" height="2" fill="#b4b4b4"/><rect x="4" y="17" width="1" height="1" fill="#5a5a5a"/><rect x="5" y="16" width="1" height="1" fill="#888"/><rect x="2" y="18" width="2" height="2" fill="#b4b4b4"/><rect x="2" y="19" width="1" height="1" fill="#5a5a5a"/><rect x="3" y="18" width="1" height="1" fill="#888"/></svg>
<div class="a" style="left:89px;top:57px;width:1px;height:25px;background:#5c5c5c;"></div>
<div class="a" style="left:165px;top:57px;width:1px;height:25px;background:#5c5c5c;"></div>
<div class="a" style="left:985px;top:57px;width:1px;height:25px;background:#5c5c5c;"></div>
<div class="a" style="left:1094px;top:57px;width:1px;height:25px;background:#5c5c5c;"></div>
<div class="a" style="left:1203px;top:57px;width:1px;height:25px;background:#5c5c5c;"></div>
<div class="a" style="left:155px;top:90px;width:1px;height:25px;background:#5c5c5c;"></div>
<div class="a" style="left:198px;top:90px;width:1px;height:25px;background:#5c5c5c;"></div>
<div class="a" style="left:358px;top:90px;width:1px;height:25px;background:#5c5c5c;"></div>
<div class="a" style="left:668px;top:90px;width:1px;height:25px;background:#5c5c5c;"></div>
<div class="a" style="left:861px;top:90px;width:1px;height:25px;background:#5c5c5c;"></div>
<div class="a" style="left:904px;top:90px;width:1px;height:25px;background:#5c5c5c;"></div>
<div class="a" style="left:980px;top:90px;width:1px;height:25px;background:#5c5c5c;"></div>
<div class="a" style="left:1206px;top:90px;width:1px;height:25px;background:#5c5c5c;"></div>
<div class="a" style="left:1249px;top:90px;width:1px;height:25px;background:#5c5c5c;"></div>
<div class="a" style="left:1325px;top:90px;width:1px;height:25px;background:#5c5c5c;"></div>
<div class="a" style="left:1368px;top:90px;width:1px;height:25px;background:#5c5c5c;"></div>
<div class="a" style="left:634px;top:55px;width:30px;height:29px;background:#ffffff;border:1px solid #a0a0a0"></div>
<div class="a" style="left:825px;top:88px;width:29px;height:29px;background:#ffffff;border:1px solid #a0a0a0"></div>
<div class="a" style="left:1213px;top:88px;width:29px;height:29px;background:#ffffff;border:1px solid #a0a0a0"></div>
<svg width="0" height="0" style="position:absolute"><defs><pattern id="chk" width="2" height="2" patternUnits="userSpaceOnUse"><rect width="1" height="1" fill="#6a6a6a"/><rect x="1" y="1" width="1" height="1" fill="#6a6a6a"/></pattern><linearGradient id="grayg" x1="0" y1="0" x2="1" y2="0"><stop offset="0" stop-color="#5a5a5a"/><stop offset="1" stop-color="#b5b5b5"/></linearGradient><linearGradient id="bwg" x1="0" y1="0" x2="1" y2="1"><stop offset="0" stop-color="#fff"/><stop offset="1" stop-color="#333"/></linearGradient><linearGradient id="rainb" x1="0" y1="0" x2="1" y2="1"><stop offset="0" stop-color="#ff00ff"/><stop offset="0.35" stop-color="#ff2020"/><stop offset="0.65" stop-color="#20ff20"/><stop offset="1" stop-color="#2020ff"/></linearGradient></defs></svg>
<svg style="left:25px;top:60px;" width="18" height="18" viewBox="0 0 18 18"><path d="M15,16 C15.5,7 8,4.5 4.5,10.5" fill="none" stroke="#8c8c8c" stroke-width="3.2"/><polygon points="0.5,7.5 9,11 1,16" fill="#8c8c8c"/></svg>
<svg style="left:58px;top:60px;" width="18" height="18" viewBox="0 0 18 18"><path d="M3,16 C2.5,7 10,4.5 13.5,10.5" fill="none" stroke="#8c8c8c" stroke-width="3.2"/><polygon points="17.5,7.5 9,11 17,16" fill="#8c8c8c"/></svg>
<svg style="left:101px;top:60px;" width="18" height="18" viewBox="0 0 18 18"><rect x="1.5" y="6.5" width="10" height="6" fill="#fff" stroke="#444" stroke-width="1"/><rect x="3" y="8" width="6" height="3" fill="#1160c8"/><path d="M11,3.5 H15 M13,3.5 V15.5 M11,15.5 H15 M15.5,6.5 V12.5" stroke="#333" stroke-width="1.2" fill="none"/></svg>
<svg style="left:134px;top:60px;" width="18" height="18" viewBox="0 0 18 18"><rect x="5.5" y="1.5" width="11" height="9" fill="#fff" stroke="#4a4a4a" stroke-width="1"/><rect x="5.5" y="1.0" width="11.5" height="2.2" fill="#1160c8"/><rect x="1.5" y="6.5" width="11" height="10" fill="#fff" stroke="#4a4a4a" stroke-width="1"/><rect x="1.5" y="6.0" width="11.5" height="2.2" fill="#1160c8"/><circle cx="12.5" cy="13.5" r="4.2" fill="#1aa05a"/><path d="M10.2,13.5 H14.8 M12.5,11.2 V15.8" stroke="#fff" stroke-width="1.4"/></svg>
<svg style="left:176px;top:60px;" width="18" height="18" viewBox="0 0 18 18"><rect x="1.5" y="2.5" width="14" height="13" fill="#fff" stroke="#4a4a4a" stroke-width="1"/><rect x="1.5" y="2.0" width="14.5" height="2.2" fill="#1160c8"/><circle cx="12.5" cy="13.5" r="4.2" fill="#1aa05a"/><path d="M10.2,13.5 H14.8 M12.5,11.2 V15.8" stroke="#fff" stroke-width="1.4"/></svg>
<svg style="left:209px;top:60px;" width="18" height="18" viewBox="0 0 18 18"><defs><linearGradient id="gg2" x1="0" y1="0" x2="1" y2="0"><stop offset="0" stop-color="#777"/><stop offset="0.5" stop-color="#9a9a9a"/><stop offset="1" stop-color="#6a6a6a"/></linearGradient><linearGradient id="gg3" x1="0" y1="0" x2="1" y2="0"><stop offset="0" stop-color="#6a6a6a"/><stop offset="1" stop-color="#d0d0d0"/></linearGradient></defs><rect x="2" y="2" width="14" height="14" fill="url(#gg2)"/><rect x="10.5" y="5.5" width="7" height="8" fill="url(#gg3)" stroke="#6a6a6a" stroke-width="1"/></svg>
<svg style="left:243px;top:60px;" width="18" height="18" viewBox="0 0 18 18"><rect x="2" y="2" width="14" height="14" fill="url(#gg2)"/><rect x="10.5" y="5.5" width="7" height="8" fill="#9a9a9a" stroke="#6a6a6a" stroke-width="1"/><rect x="12.5" y="6" width="3" height="7" fill="url(#gg3)"/></svg>
<svg style="left:294px;top:60px;" width="18" height="18" viewBox="0 0 18 18"><rect x="1.5" y="1.5" width="15" height="15" fill="#fff" stroke="#333" stroke-width="1"/><polygon points="2,2 16,2 2,16" fill="#333"/><rect x="3" y="3" width="5" height="5" fill="#fff"/><rect x="10.5" y="10.5" width="4" height="4" fill="#333"/></svg>
<svg style="left:327px;top:60px;" width="18" height="18" viewBox="0 0 18 18"><rect x="1.5" y="1.5" width="15" height="15" fill="url(#bwg)" stroke="#444" stroke-width="1"/><rect x="2" y="9" width="7" height="7" fill="#fff"/><rect x="9" y="9" width="7" height="7" fill="#444"/></svg>
<svg style="left:360px;top:60px;" width="18" height="18" viewBox="0 0 18 18"><defs><linearGradient id="cg369" x1="0" y1="0" x2="0" y2="1"><stop offset="0" stop-color="#ff30ff"/><stop offset="0.4" stop-color="#300020"/><stop offset="0.6" stop-color="#002000"/><stop offset="1" stop-color="#60ff40"/></linearGradient><linearGradient id="cg369b" x1="0" y1="0" x2="1" y2="0"><stop offset="0" stop-color="#000" stop-opacity="1"/><stop offset="0.5" stop-color="#000" stop-opacity="0.2"/><stop offset="1" stop-color="#fff" stop-opacity="0.5"/></linearGradient></defs><rect x="1" y="1" width="16" height="16" fill="url(#cg369)"/><rect x="1" y="1" width="16" height="16" fill="url(#cg369b)"/><polygon points="2,9 6,4.5 6,7.3 12,7.3 12,4.5 16,9 12,13.5 12,10.7 6,10.7 6,13.5" fill="#fff" stroke="#000" stroke-width="0.8"/><polygon points="9,7.3 12,7.3 12,4.5 16,9 12,13.5 12,10.7 9,10.7" fill="#000"/></svg>
<svg style="left:639px;top:60px;" width="18" height="18" viewBox="0 0 18 18"><path d="M1,9 H17 M9,1 V17" stroke="#444" stroke-width="1.3"/><rect x="6.5" y="6.5" width="5" height="5" fill="#fff" stroke="#444" stroke-width="1.2"/></svg>
<svg style="left:672px;top:60px;" width="18" height="18" viewBox="0 0 18 18"><rect x="2" y="2" width="14" height="14" fill="#4a4a4a"/><path d="M4,4 L8,8 M14,4 L10,8 M4,14 L8,10 M14,14 L10,10" stroke="#fff" stroke-width="1.6"/><rect x="7.2" y="7.2" width="3.6" height="3.6" fill="#fff"/></svg>
<svg style="left:705px;top:60px;" width="18" height="18" viewBox="0 0 18 18"><path d="M2,2 L7,7 M16,2 L11,7 M2,16 L7,11 M16,16 L11,11" stroke="#4a4a4a" stroke-width="2.2"/><polygon points="8,8 3,8 8,3" fill="#4a4a4a"/><polygon points="10,8 15,8 10,3" fill="#4a4a4a"/><polygon points="8,10 3,10 8,15" fill="#4a4a4a"/><polygon points="10,10 15,10 10,15" fill="#4a4a4a"/></svg>
<svg style="left:738px;top:60px;" width="18" height="18" viewBox="0 0 18 18"><path d="M9,1 V17 M1,9 H17 M3.5,3.5 L14.5,14.5 M14.5,3.5 L3.5,14.5" stroke="#4a4a4a" stroke-width="2"/><polygon points="9,1 6,4 12,4" fill="#4a4a4a"/><polygon points="9,17 6,14 12,14" fill="#4a4a4a"/><polygon points="1,9 4,6 4,12" fill="#4a4a4a"/><polygon points="17,9 14,6 14,12" fill="#4a4a4a"/><rect x="7.8" y="7.8" width="2.4" height="2.4" fill="#fff"/></svg>
<svg style="left:771px;top:60px;" width="18" height="18" viewBox="0 0 18 18"><polygon points="9,1 17,9 9,17 1,9" fill="#4a4a4a"/><rect x="6" y="6" width="2.4" height="2.4" fill="#fff"/><rect x="9.6" y="6" width="2.4" height="2.4" fill="#fff"/><rect x="6" y="9.6" width="2.4" height="2.4" fill="#fff"/><rect x="9.6" y="9.6" width="2.4" height="2.4" fill="#fff"/></svg>
<svg style="left:804px;top:60px;" width="18" height="18" viewBox="0 0 18 18"><path d="M2,15 V6 L6,2 V15 Z" fill="#4a4a4a"/><rect x="6.5" y="2.5" width="9" height="12.5" fill="#fff" stroke="#4a4a4a" stroke-width="1"/></svg>
<svg style="left:837px;top:60px;" width="18" height="18" viewBox="0 0 18 18"><path d="M2,15 V6 L6,2 V15 Z" fill="#4a4a4a"/><rect x="6.5" y="2.5" width="9" height="12.5" fill="#fff" stroke="#4a4a4a" stroke-width="1"/><polygon points="9,5 9,13 11,11 13,14 14,13 12,10 14.5,9.5" fill="#555"/></svg>
<svg style="left:870px;top:60px;" width="18" height="18" viewBox="0 0 18 18"><polygon points="4,1 4,15 8,11 11,17 13,16 10.5,10.5 15,10" fill="#8c8c8c"/></svg>
<svg style="left:921px;top:60px;" width="18" height="18" viewBox="0 0 18 18"><circle cx="7.5" cy="7.5" r="4.5" fill="#fff" stroke="#4a4a4a" stroke-width="2"/><path d="M10.7,10.7 L14.5,14.5" stroke="#4a4a4a" stroke-width="2.6" stroke-linecap="round"/><path d="M4.9,7.5 H10.1 M7.5,4.9 V10.1" stroke="#1160c8" stroke-width="1.8"/></svg>
<svg style="left:954px;top:60px;" width="18" height="18" viewBox="0 0 18 18"><circle cx="7.5" cy="7.5" r="4.5" fill="#fff" stroke="#4a4a4a" stroke-width="2"/><path d="M10.7,10.7 L14.5,14.5" stroke="#4a4a4a" stroke-width="2.6" stroke-linecap="round"/><path d="M4.9,7.5 H10.1" stroke="#1160c8" stroke-width="1.8"/></svg>
<svg style="left:997px;top:60px;" width="18" height="18" viewBox="0 0 18 18"><circle cx="7.5" cy="7.5" r="4.5" fill="#fff" stroke="#4a4a4a" stroke-width="2"/><path d="M10.7,10.7 L14.5,14.5" stroke="#4a4a4a" stroke-width="2.6" stroke-linecap="round"/><rect x="6.3" y="6.3" width="2.4" height="2.4" fill="#1160c8"/></svg>
<svg style="left:1030px;top:60px;" width="18" height="18" viewBox="0 0 18 18"><circle cx="7.5" cy="7.5" r="4.5" fill="#fff" stroke="#4a4a4a" stroke-width="2"/><path d="M10.7,10.7 L14.5,14.5" stroke="#4a4a4a" stroke-width="2.6" stroke-linecap="round"/><rect x="5.3" y="7.7" width="1.6" height="1.6" fill="#1160c8"/><rect x="8.1" y="5.3" width="1.6" height="1.6" fill="#1160c8"/><rect x="8.1" y="7.7" width="1.6" height="1.6" fill="#1160c8"/></svg>
<svg style="left:1063px;top:60px;" width="18" height="18" viewBox="0 0 18 18"><circle cx="7.5" cy="7.5" r="4.5" fill="#fff" stroke="#4a4a4a" stroke-width="2"/><path d="M10.7,10.7 L14.5,14.5" stroke="#4a4a4a" stroke-width="2.6" stroke-linecap="round"/><rect x="5.3" y="5.3" width="1.6" height="1.6" fill="#1160c8"/><rect x="8.1" y="8.1" width="1.6" height="1.6" fill="#1160c8"/><rect x="5.3" y="8.1" width="1.6" height="1.6" fill="#1160c8"/></svg>
<svg style="left:1106px;top:60px;" width="18" height="18" viewBox="0 0 18 18"><rect x="1.5" y="1.5" width="15" height="15" fill="none" stroke="#444" stroke-width="1" stroke-dasharray="1.6,1.2"/><rect x="4.5" y="4.5" width="9" height="8" fill="#fff" stroke="#4a4a4a" stroke-width="1"/><rect x="4.5" y="4.0" width="9.5" height="2.2" fill="#1160c8"/></svg>
<svg style="left:1139px;top:60px;" width="18" height="18" viewBox="0 0 18 18"><rect x="1.5" y="1.5" width="15" height="15" fill="none" stroke="#444" stroke-width="1" stroke-dasharray="1.6,1.2"/><rect x="3.5" y="3.5" width="8" height="7" fill="#fff" stroke="#4a4a4a" stroke-width="1"/><rect x="3.5" y="3.0" width="8.5" height="2.2" fill="#1160c8"/><rect x="6.5" y="6.5" width="8" height="7" fill="#fff" stroke="#4a4a4a" stroke-width="1"/><rect x="6.5" y="6.0" width="8.5" height="2.2" fill="#1160c8"/></svg>
<svg style="left:1172px;top:60px;" width="18" height="18" viewBox="0 0 18 18"><rect x="1.5" y="2.5" width="15" height="13" fill="#fff" stroke="#4a4a4a" stroke-width="1"/><rect x="1.5" y="2.0" width="15.5" height="2.2" fill="#1160c8"/><path d="M10,10 L14.5,14.5 M14.5,11 V14.5 H11" stroke="#1160c8" stroke-width="1.4" fill="none"/></svg>
<svg style="left:1215px;top:60px;" width="18" height="18" viewBox="0 0 18 18"><rect x="1.5" y="2.5" width="15" height="13" fill="#fff" stroke="#4a4a4a" stroke-width="1"/><rect x="1.5" y="2.0" width="15.5" height="2.2" fill="#1160c8"/><rect x="1.5" y="9.5" width="6" height="6" fill="none" stroke="#444"/><path d="M9,9 L14,4 M10.5,4 H14 V7.5" stroke="#1160c8" stroke-width="1.4" fill="none"/></svg>
<svg style="left:1248px;top:60px;" width="18" height="18" viewBox="0 0 18 18"><rect x="2.5" y="3.5" width="13" height="11" fill="#fff" stroke="#444" stroke-width="1"/><rect x="2.5" y="3" width="13" height="2" fill="#1160c8"/><path d="M1,1 H4 M1,1 V4 M17,1 H14 M17,1 V4 M1,17 H4 M1,17 V14 M17,17 H14 M17,17 V14" stroke="#444" stroke-width="1.2"/></svg>
<div class="a" style="left:406px;top:58px;width:206px;height:22px;background:linear-gradient(#f7f7f7,#dcdcdc);border:1px solid #8e8e8e;border-radius:1px"></div>
<div class="a" style="left:414px;top:62px;width:13px;height:13px;background:#c4c4c4;border:1px solid #333"></div>
<div class="t" style="left:434px;top:63px;font-size:13px;color:#1a1a1a;font-weight:normal;">Gray</div>
<div class="a" style="left:594px;top:60px;width:1px;height:18px;background:#a6a6a6;"></div>
<svg style="left:597px;top:65px;" width="12" height="8" viewBox="0 0 12 8"><polygon points="0.5,0.5 10.5,0.5 5.5,6" fill="#1e1e1e"/></svg>
<svg style="left:25px;top:93px;" width="18" height="18" viewBox="0 0 18 18"><rect x="1.5" y="1.5" width="3" height="3" fill="#fff" stroke="#4a4a4a" stroke-width="1"/><rect x="6.5" y="1.5" width="3" height="3" fill="#fff" stroke="#4a4a4a" stroke-width="1"/><rect x="11.5" y="1.5" width="3" height="3" fill="#fff" stroke="#4a4a4a" stroke-width="1"/><rect x="1.5" y="6.5" width="3" height="3" fill="#fff" stroke="#4a4a4a" stroke-width="1"/><rect x="1.5" y="11.5" width="3" height="3" fill="#fff" stroke="#4a4a4a" stroke-width="1"/><circle cx="12" cy="12.5" r="4.2" fill="#1aa05a"/><path d="M10,10.5 L13.8,14.3 M13.8,11.7 V14.3 H11.2" stroke="#fff" stroke-width="1.3" fill="none"/></svg>
<svg style="left:58px;top:93px;" width="18" height="18" viewBox="0 0 18 18"><rect x="1.5" y="1.5" width="3" height="3" fill="#fff" stroke="#4a4a4a" stroke-width="1"/><rect x="6.5" y="1.5" width="3" height="3" fill="#fff" stroke="#4a4a4a" stroke-width="1"/><rect x="11.5" y="1.5" width="3" height="3" fill="#fff" stroke="#4a4a4a" stroke-width="1"/><rect x="1.5" y="6.5" width="3" height="3" fill="#fff" stroke="#4a4a4a" stroke-width="1"/><rect x="1.5" y="11.5" width="3" height="3" fill="#fff" stroke="#4a4a4a" stroke-width="1"/><circle cx="12" cy="12.5" r="4.2" fill="#1aa05a"/><path d="M9.7,12.5 H14.3 M12,10.2 V14.8" stroke="#fff" stroke-width="1.4"/></svg>
<svg style="left:91px;top:93px;" width="18" height="18" viewBox="0 0 18 18"><rect x="1.5" y="1.5" width="3" height="3" fill="#fff" stroke="#4a4a4a" stroke-width="1"/><rect x="6.5" y="1.5" width="3" height="3" fill="#fff" stroke="#4a4a4a" stroke-width="1"/><rect x="11.5" y="1.5" width="3" height="3" fill="#fff" stroke="#4a4a4a" stroke-width="1"/><rect x="1.5" y="6.5" width="3" height="3" fill="#fff" stroke="#4a4a4a" stroke-width="1"/><rect x="1.5" y="11.5" width="3" height="3" fill="#fff" stroke="#4a4a4a" stroke-width="1"/><rect x="8" y="8.5" width="8" height="8" fill="#8a3cc0"/><rect x="9.5" y="9.5" width="5" height="3" fill="#fff"/><rect x="10.5" y="14.0" width="3" height="2.5" fill="#fff"/></svg>
<svg style="left:124px;top:93px;" width="18" height="18" viewBox="0 0 18 18"><rect x="1.5" y="1.5" width="3" height="3" fill="#fff" stroke="#4a4a4a" stroke-width="1"/><rect x="6.5" y="1.5" width="3" height="3" fill="#fff" stroke="#4a4a4a" stroke-width="1"/><rect x="11.5" y="1.5" width="3" height="3" fill="#fff" stroke="#4a4a4a" stroke-width="1"/><rect x="1.5" y="6.5" width="3" height="3" fill="#fff" stroke="#4a4a4a" stroke-width="1"/><rect x="1.5" y="11.5" width="3" height="3" fill="#fff" stroke="#4a4a4a" stroke-width="1"/><rect x="7.5" y="9.0" width="9" height="8" fill="#fff" stroke="#4a4a4a" stroke-width="1"/><rect x="7.5" y="9.0" width="9" height="1.6" fill="#1aa05a"/><path d="M9,12.5 H15 M9,14.7 H15" stroke="#4a4a4a" stroke-width="0.9"/></svg>
<svg style="left:167px;top:93px;" width="18" height="18" viewBox="0 0 18 18"><rect x="1.5" y="1.5" width="3" height="3" fill="#1160c8" stroke="#4a4a4a" stroke-width="1"/><rect x="6.5" y="1.5" width="3" height="3" fill="#1160c8" stroke="#4a4a4a" stroke-width="1"/><rect x="11.5" y="1.5" width="3" height="3" fill="#fff" stroke="#4a4a4a" stroke-width="1"/><rect x="1.5" y="6.5" width="3" height="3" fill="#1160c8" stroke="#4a4a4a" stroke-width="1"/><rect x="1.5" y="11.5" width="3" height="3" fill="#fff" stroke="#4a4a4a" stroke-width="1"/><rect x="8" y="8.5" width="8" height="8" fill="#8a3cc0"/><rect x="9.5" y="9.5" width="5" height="3" fill="#fff"/><rect x="10.5" y="14.0" width="3" height="2.5" fill="#fff"/></svg>
<svg style="left:210px;top:93px;" width="18" height="18" viewBox="0 0 18 18"><rect x="1.5" y="1.5" width="3" height="3" fill="#fff" stroke="#4a4a4a" stroke-width="1"/><rect x="6.5" y="1.5" width="3" height="3" fill="#fff" stroke="#4a4a4a" stroke-width="1"/><rect x="11.5" y="1.5" width="3" height="3" fill="#fff" stroke="#4a4a4a" stroke-width="1"/><rect x="1.5" y="6.5" width="3" height="3" fill="#fff" stroke="#4a4a4a" stroke-width="1"/><rect x="1.5" y="11.5" width="3" height="3" fill="#fff" stroke="#4a4a4a" stroke-width="1"/><circle cx="12" cy="12.5" r="4.2" fill="#d8281e"/><path d="M10.1,10.6 L13.9,14.4 M13.9,10.6 L10.1,14.4" stroke="#fff" stroke-width="1.3"/></svg>
<svg style="left:261px;top:93px;" width="18" height="18" viewBox="0 0 18 18"><path d="M2,5 L8,2 L14,5 L14,12 L8,15 L2,12 Z M2,5 L8,8 L14,5 M8,8 V15" fill="none" stroke="#1a9a2a" stroke-width="1.6" stroke-linejoin="round"/><circle cx="12.5" cy="12.5" r="4.2" fill="#1aa05a"/><path d="M10.5,10.5 L14.3,14.3 M14.3,11.7 V14.3 H11.7" stroke="#fff" stroke-width="1.3" fill="none"/></svg>
<svg style="left:294px;top:93px;" width="18" height="18" viewBox="0 0 18 18"><path d="M2,5 L8,2 L14,5 L14,12 L8,15 L2,12 Z M2,5 L8,8 L14,5 M8,8 V15" fill="none" stroke="#1a9a2a" stroke-width="1.6" stroke-linejoin="round"/><rect x="8.5" y="8.5" width="8" height="8" fill="#8a3cc0"/><rect x="10.0" y="9.5" width="5" height="3" fill="#fff"/><rect x="11.0" y="14.0" width="3" height="2.5" fill="#fff"/></svg>
<svg style="left:327px;top:93px;" width="18" height="18" viewBox="0 0 18 18"><path d="M2,5 L8,2 L14,5 L14,12 L8,15 L2,12 Z M2,5 L8,8 L14,5 M8,8 V15" fill="none" stroke="#1a9a2a" stroke-width="1.6" stroke-linejoin="round"/><rect x="8.0" y="9.0" width="9" height="8" fill="#fff" stroke="#4a4a4a" stroke-width="1"/><rect x="8.0" y="9.0" width="9" height="1.6" fill="#1aa05a"/><path d="M9.5,12.5 H15.5 M9.5,14.7 H15.5" stroke="#4a4a4a" stroke-width="0.9"/></svg>
<svg style="left:370px;top:93px;" width="18" height="18" viewBox="0 0 18 18"><path d="M2,5 L8,2 L14,5 L14,12 L8,15 L2,12 Z M2,5 L8,8 L14,5 M8,8 V15" fill="none" stroke="#1a9a2a" stroke-width="1.6" stroke-linejoin="round"/><circle cx="12.5" cy="12.5" r="4.2" fill="#d8281e"/><path d="M10.6,10.6 L14.4,14.4 M14.4,10.6 L10.6,14.4" stroke="#fff" stroke-width="1.3"/></svg>
<svg style="left:421px;top:93px;" width="18" height="18" viewBox="0 0 18 18"><path d="M2,14.5 H15.5 A6,5 0 0 0 4,9" fill="#dde4ff" stroke="#0a14f0" stroke-width="1.6"/><polygon points="3,3.5 8,8.5 2.5,10" fill="#0a14f0"/></svg>
<svg style="left:453px;top:93px;" width="18" height="18" viewBox="0 0 18 18"><rect x="3.5" y="4.5" width="10" height="9" fill="#dde4ff" stroke="#0a14f0" stroke-width="1.6"/><path d="M6,7 L11,12 M11,8.5 V12 H7.5" stroke="#0a14f0" stroke-width="1.6" fill="none"/><path d="M2,3 H5 M3.5,1.5 V4.5" stroke="#0a14f0" stroke-width="1"/></svg>
<svg style="left:486px;top:93px;" width="18" height="18" viewBox="0 0 18 18"><rect x="3.5" y="4.5" width="10" height="9" fill="#dde4ff" stroke="#0a14f0" stroke-width="1.6"/><path d="M6,11 L11,6 M7.5,6 H11 V9.5" stroke="#0a14f0" stroke-width="1.6" fill="none"/><path d="M2,15 H5 M3.5,13.5 V16.5" stroke="#0a14f0" stroke-width="1"/></svg>
<svg style="left:519px;top:93px;" width="18" height="18" viewBox="0 0 18 18"><polygon points="7.5,3 7.5,15 2,15" fill="#dde4ff" stroke="#0a14f0" stroke-width="1.4"/><polygon points="10.5,3 10.5,15 16,15" fill="#dde4ff" stroke="#0a14f0" stroke-width="1.4"/><path d="M9,1 V17" stroke="#888" stroke-width="0.8" stroke-dasharray="1,1"/></svg>
<svg style="left:552px;top:93px;" width="18" height="18" viewBox="0 0 18 18"><polygon points="9,2 15,7.5 3,7.5" fill="#dde4ff" stroke="#0a14f0" stroke-width="1.4"/><polygon points="9,16 15,10.5 3,10.5" fill="#dde4ff" stroke="#0a14f0" stroke-width="1.4"/><path d="M1,9 H17" stroke="#888" stroke-width="0.8" stroke-dasharray="1,1"/></svg>
<svg style="left:604px;top:93px;" width="18" height="18" viewBox="0 0 18 18"><rect x="1.5" y="2.5" width="15" height="13" fill="#fff" stroke="#333" stroke-width="1"/><rect x="2" y="4" width="7" height="11" fill="#bbb"/><rect x="2" y="4" width="7" height="11" fill="url(#chk)"/><rect x="1.5" y="2" width="15.5" height="2" fill="#1a5fb4"/></svg>
<svg style="left:637px;top:93px;" width="18" height="18" viewBox="0 0 18 18"><rect x="1.5" y="2.5" width="15" height="13" fill="#e8e8e8" stroke="#999" stroke-width="1"/><rect x="2" y="4" width="14" height="11" fill="#c8c8c8"/><rect x="2" y="4" width="14" height="11" fill="url(#chk)" opacity="0.45"/><rect x="1.5" y="2" width="15.5" height="2" fill="#8a8a8a"/><circle cx="12.5" cy="12.5" r="4" fill="#9a9a9a"/><path d="M10.8,10.8 L14.2,14.2 M14.2,10.8 L10.8,14.2" stroke="#fff" stroke-width="1.3"/></svg>
<svg style="left:680px;top:93px;" width="18" height="18" viewBox="0 0 18 18"><rect x="1.5" y="2.5" width="15" height="13" fill="#e8e8e8" stroke="#999" stroke-width="1"/><rect x="2" y="4" width="14" height="11" fill="#c8c8c8"/><rect x="2" y="4" width="14" height="11" fill="url(#chk)" opacity="0.45"/><rect x="1.5" y="2" width="15.5" height="2" fill="#8a8a8a"/><circle cx="12.5" cy="12.5" r="4" fill="#8a8a8a"/><path d="M10.5,14.5 L14.5,10.5" stroke="#fff" stroke-width="1.5"/></svg>
<svg style="left:713px;top:93px;" width="18" height="18" viewBox="0 0 18 18"><rect x="1.5" y="2.5" width="15" height="13" fill="#e8e8e8" stroke="#999" stroke-width="1"/><rect x="2" y="4" width="14" height="11" fill="#c8c8c8"/><rect x="2" y="4" width="14" height="11" fill="url(#chk)" opacity="0.45"/><rect x="1.5" y="2" width="15.5" height="2" fill="#8a8a8a"/><circle cx="12.5" cy="12.5" r="4" fill="#9a9a9a"/><path d="M10.5,12.5 L12,14 L14.8,11" stroke="#fff" stroke-width="1.3" fill="none"/></svg>
<svg style="left:746px;top:93px;" width="18" height="18" viewBox="0 0 18 18"><rect x="1.5" y="2.5" width="15" height="13" fill="#e8e8e8" stroke="#999" stroke-width="1"/><rect x="2" y="4" width="14" height="11" fill="#c8c8c8"/><rect x="2" y="4" width="14" height="11" fill="url(#chk)" opacity="0.45"/><rect x="1.5" y="2" width="15.5" height="2" fill="#8a8a8a"/><circle cx="12.5" cy="11.5" r="3" fill="#fff" stroke="#8a8a8a" stroke-width="1.5"/><path d="M10.5,13.5 L8,16" stroke="#8a8a8a" stroke-width="2"/></svg>
<svg style="left:797px;top:93px;" width="18" height="18" viewBox="0 0 18 18"><rect x="2" y="2.5" width="14" height="10" fill="#fff" stroke="#1a6fd0" stroke-width="2"/><path d="M9,12.5 V15 M5,15.5 H13" stroke="#1a6fd0" stroke-width="2"/></svg>
<svg style="left:830px;top:93px;" width="18" height="18" viewBox="0 0 18 18"><rect x="2" y="2.5" width="14" height="10" fill="#fff" stroke="#1a6fd0" stroke-width="2"/><path d="M9,12.5 V15 M5,15.5 H13" stroke="#1a6fd0" stroke-width="2"/><text x="10" y="17.5" font-family="Liberation Sans" font-weight="bold" font-size="11" fill="#f5b800" stroke="#1a1a1a" stroke-width="0.9" paint-order="stroke" text-anchor="middle">24</text></svg>
<svg style="left:873px;top:93px;" width="18" height="18" viewBox="0 0 18 18"><rect x="2.5" y="2.5" width="13" height="12" fill="#fff" stroke="#333" stroke-width="1"/><rect x="2.5" y="2" width="13.5" height="2" fill="#1a6fd0"/><path d="M16,11 H8 M11,8 L8,11 L11,14" stroke="#1a6fd0" stroke-width="1.6" fill="none"/></svg>
<svg style="left:916px;top:93px;" width="18" height="18" viewBox="0 0 18 18"><rect x="2" y="2.5" width="14" height="10" fill="#fff" stroke="#1a6fd0" stroke-width="2"/><path d="M9,12.5 V15 M5,15.5 H13" stroke="#1a6fd0" stroke-width="2"/><circle cx="13" cy="13" r="4.2" fill="#d8281e"/><path d="M11.1,11.1 L14.9,14.9 M14.9,11.1 L11.1,14.9" stroke="#fff" stroke-width="1.3"/></svg>
<svg style="left:949px;top:93px;" width="18" height="18" viewBox="0 0 18 18"><rect x="2.5" y="2.5" width="13" height="12" fill="#fff" stroke="#333" stroke-width="1"/><rect x="2.5" y="2" width="13.5" height="2" fill="#1a6fd0"/><path d="M2.5,9 H10" stroke="#333"/><circle cx="13" cy="13" r="4.2" fill="#d8281e"/><path d="M11.1,11.1 L14.9,14.9 M14.9,11.1 L11.1,14.9" stroke="#fff" stroke-width="1.3"/></svg>
<svg style="left:992px;top:93px;" width="18" height="18" viewBox="0 0 18 18"><rect x="2" y="2.5" width="14" height="10" fill="#fff" stroke="#1a6fd0" stroke-width="2"/><path d="M9,12.5 V15 M5,15.5 H13" stroke="#1a6fd0" stroke-width="2"/><circle cx="13" cy="13" r="4.2" fill="#f0b000" stroke="#333" stroke-width="0.5"/><circle cx="13" cy="13" r="1" fill="#222"/><path d="M13,11.5 L11.6,9.4 L14.4,9.4 Z M11.7,13.8 L9.5,14.8 L10.8,16.2 Z M14.3,13.8 L16.5,14.8 L15.2,16.2 Z" fill="#222"/></svg>
<svg style="left:1025px;top:93px;" width="18" height="18" viewBox="0 0 18 18"><rect x="2" y="2.5" width="14" height="10" fill="#fff" stroke="#1a6fd0" stroke-width="2"/><path d="M9,12.5 V15 M5,15.5 H13" stroke="#1a6fd0" stroke-width="2"/><circle cx="13" cy="13" r="4.2" fill="#f0b000" stroke="#333" stroke-width="0.5"/><circle cx="13" cy="13" r="1" fill="#222"/><path d="M13,11.5 L11.6,9.4 L14.4,9.4 Z M11.7,13.8 L9.5,14.8 L10.8,16.2 Z M14.3,13.8 L16.5,14.8 L15.2,16.2 Z" fill="#222"/><polygon points="12,1 16,5 13.5,5 13.5,8 10.5,8 10.5,5 8,5" fill="#222"/></svg>
<svg style="left:1076px;top:93px;" width="18" height="18" viewBox="0 0 18 18"><path d="M2,15.5 V6 L6,2 V15.5 Z" fill="#444"/><rect x="6.5" y="2.5" width="9" height="13" fill="#fff" stroke="#444" stroke-width="1"/><circle cx="12.5" cy="12.5" r="4.2" fill="#1aa05a"/><path d="M10.2,12.5 H14.8 M12.5,10.2 V14.8" stroke="#fff" stroke-width="1.4"/></svg>
<svg style="left:1109px;top:93px;" width="18" height="18" viewBox="0 0 18 18"><path d="M2,15.5 V6 L6,2 V15.5 Z" fill="#8a8a8a"/><rect x="6.5" y="2.5" width="9" height="13" fill="#f4f0ee" stroke="#8a8a8a" stroke-width="1"/><path d="M8,15 L14,9" stroke="#8a8a8a" stroke-width="2.2"/></svg>
<svg style="left:1142px;top:93px;" width="18" height="18" viewBox="0 0 18 18"><path d="M2,15.5 V6 L6,2 V15.5 Z" fill="#8a8a8a"/><rect x="6.5" y="2.5" width="9" height="13" fill="#f4f0ee" stroke="#8a8a8a" stroke-width="1"/><circle cx="12.5" cy="12.5" r="4" fill="#9a9a9a"/><path d="M10.3,12.5 H14.7 M12.5,10.3 V14.7" stroke="#fff" stroke-width="1.3"/></svg>
<svg style="left:1175px;top:93px;" width="18" height="18" viewBox="0 0 18 18"><path d="M2,15.5 V6 L6,2 V15.5 Z" fill="#8a8a8a"/><rect x="6.5" y="2.5" width="9" height="13" fill="#f4f0ee" stroke="#8a8a8a" stroke-width="1"/><circle cx="12.5" cy="12.5" r="4" fill="#9a9a9a"/><path d="M10.3,12.5 H14.7 M12.5,10.3 V14.7" stroke="#fff" stroke-width="1.3"/></svg>
<svg style="left:1218px;top:93px;" width="18" height="18" viewBox="0 0 18 18"><path d="M2,15 V6 L6,2 V15 Z" fill="#4a4a4a"/><rect x="6.5" y="2.5" width="9" height="12.5" fill="#fff" stroke="#4a4a4a" stroke-width="1"/><circle cx="12" cy="11" r="3" fill="#fff" stroke="#1160c8" stroke-width="1.6"/><path d="M10,13 L7.5,15.5" stroke="#1160c8" stroke-width="2"/></svg>
<svg style="left:1261px;top:93px;" width="18" height="18" viewBox="0 0 18 18"><path d="M2,15.5 V6 L6,2 V15.5 Z" fill="#8a8a8a"/><rect x="6.5" y="2.5" width="9" height="13" fill="#f4f0ee" stroke="#8a8a8a" stroke-width="1"/><path d="M12,7 V14 M9,11 L12,14 L15,11" stroke="#8a8a8a" stroke-width="1.8" fill="none"/></svg>
<svg style="left:1294px;top:93px;" width="18" height="18" viewBox="0 0 18 18"><path d="M2,15.5 V6 L6,2 V15.5 Z" fill="#8a8a8a"/><rect x="6.5" y="2.5" width="9" height="13" fill="#f4f0ee" stroke="#8a8a8a" stroke-width="1"/><path d="M12,16 V9 M9,12 L12,9 L15,12" stroke="#8a8a8a" stroke-width="1.8" fill="none"/></svg>
<svg style="left:1337px;top:93px;" width="18" height="18" viewBox="0 0 18 18"><path d="M2,15.5 V6 L6,2 V15.5 Z" fill="#8a8a8a"/><rect x="6.5" y="2.5" width="9" height="13" fill="#f4f0ee" stroke="#8a8a8a" stroke-width="1"/><path d="M9,9 A3.5,3.5 0 1 1 11,14" stroke="#8a8a8a" stroke-width="1.6" fill="none"/><polygon points="8,6.5 8,11 11.5,10" fill="#8a8a8a"/></svg>
<svg style="left:1380px;top:93px;" width="18" height="18" viewBox="0 0 18 18"><path d="M2,15.5 V6 L6,2 V15.5 Z" fill="#8a8a8a"/><rect x="6.5" y="2.5" width="9" height="13" fill="#f4f0ee" stroke="#8a8a8a" stroke-width="1"/><circle cx="12" cy="12" r="2.8" fill="none" stroke="#8a8a8a" stroke-width="2.4" stroke-dasharray="1.5,0.7"/><circle cx="12" cy="12" r="1.8" fill="#8a8a8a"/></svg>
<svg style="left:1413px;top:93px;" width="18" height="18" viewBox="0 0 18 18"><path d="M2,15.5 V6 L6,2 V15.5 Z" fill="#8a8a8a"/><rect x="6.5" y="2.5" width="9" height="13" fill="#f4f0ee" stroke="#8a8a8a" stroke-width="1"/><path d="M14.5,10 A3.5,3.5 0 1 1 11,8.2" stroke="#8a8a8a" stroke-width="1.6" fill="none"/><polygon points="11,6 14,8.5 10.5,10" fill="#8a8a8a"/></svg>
<svg style="left:1446px;top:93px;" width="18" height="18" viewBox="0 0 18 18"><path d="M2,15.5 V6 L6,2 V15.5 Z" fill="#8a8a8a"/><rect x="6.5" y="2.5" width="9" height="13" fill="#f4f0ee" stroke="#8a8a8a" stroke-width="1"/><circle cx="12" cy="12" r="3.6" fill="#fff" stroke="#8a8a8a" stroke-width="1.3"/><path d="M10.5,10.5 L13.5,13.5 M13.5,10.5 L10.5,13.5" stroke="#8a8a8a" stroke-width="1.2"/></svg>
<div class="a" style="left:0px;top:120px;width:26px;height:926px;background:#717171;"></div>
<div class="a" style="left:26px;top:120px;width:1px;height:926px;background:#444444;"></div>
<div class="a" style="left:1894px;top:120px;width:26px;height:926px;background:#717171;"></div>
<div class="a" style="left:1893px;top:120px;width:1px;height:926px;background:#444444;"></div>
<div class="a" style="left:0px;top:455px;width:26px;height:119px;background:#525252;border:1px solid #434343;border-right:1px solid #444"></div>
<div class="a" style="left:0px;top:574px;width:26px;height:2px;background:#5e5e5e;"></div>
<div class="t" style="left:7.4px;top:548px;font-size:12px;color:#e2e2e2;transform-origin:0 0;transform:rotate(-90deg);letter-spacing:0.25px">Object Explorer</div>
<svg style="left:5px;top:553px;" width="16" height="16" viewBox="0 0 16 16"><polygon points="8,1 15,4.5 15,12 8,15.5 1,12 1,4.5" fill="#7ac943" stroke="#2a4a10" stroke-width="0.8"/><polygon points="1,4.5 8,8 15,4.5 8,1" fill="#a0e060"/><path d="M8,8 V15.5" stroke="#2a4a10" stroke-width="0.8"/></svg>
<div class="a" style="left:0px;top:576px;width:26px;height:103px;background:#525252;border:1px solid #434343;border-right:1px solid #444"></div>
<div class="a" style="left:0px;top:679px;width:26px;height:2px;background:#5e5e5e;"></div>
<div class="t" style="left:7.4px;top:652px;font-size:12px;color:#e2e2e2;transform-origin:0 0;transform:rotate(-90deg);letter-spacing:0.25px">Script Editor</div>
<svg style="left:5px;top:658px;" width="16" height="16" viewBox="0 0 16 16"><polygon points="1.5,1.5 10,1.5 14.5,6 14.5,14.5 1.5,14.5" fill="#1ec8a8" stroke="#0a3a30" stroke-width="1"/><polygon points="10,1.5 14.5,6 10,6" fill="#8ff0dd"/></svg>
<div class="a" style="left:0px;top:681px;width:26px;height:111px;background:#525252;border:1px solid #434343;border-right:1px solid #444"></div>
<div class="a" style="left:0px;top:792px;width:26px;height:2px;background:#5e5e5e;"></div>
<div class="t" style="left:7.4px;top:767px;font-size:12px;color:#e2e2e2;transform-origin:0 0;transform:rotate(-90deg);letter-spacing:0.25px">View Explorer</div>
<svg style="left:5px;top:771px;" width="16" height="16" viewBox="0 0 16 16"><rect x="1.5" y="1.5" width="13" height="13" fill="#4aa0ff" stroke="#103060" stroke-width="1"/></svg>
<div class="a" style="left:0px;top:794px;width:26px;height:125px;background:#525252;border:1px solid #434343;border-right:1px solid #444"></div>
<div class="a" style="left:0px;top:919px;width:26px;height:2px;background:#5e5e5e;"></div>
<div class="t" style="left:7.4px;top:893px;font-size:12px;color:#e2e2e2;transform-origin:0 0;transform:rotate(-90deg);letter-spacing:0.25px">Format Explorer</div>
<svg style="left:5px;top:898px;" width="16" height="16" viewBox="0 0 16 16"><circle cx="8" cy="8" r="6.8" fill="#d050d8" stroke="#401040" stroke-width="1"/></svg>
<div class="a" style="left:0px;top:921px;width:26px;height:125px;background:#525252;border:1px solid #434343;border-right:1px solid #444"></div>
<div class="a" style="left:0px;top:1046px;width:26px;height:2px;background:#5e5e5e;"></div>
<div class="t" style="left:7.4px;top:1018px;font-size:12px;color:#e2e2e2;transform-origin:0 0;transform:rotate(-90deg);letter-spacing:0.25px">History Explorer</div>
<svg style="left:4px;top:1025px;" width="18" height="17" viewBox="0 0 18 17"><polygon points="9,1 16.5,10 9,15.5 1.5,10" fill="#f08a38" stroke="#402000" stroke-width="0.9"/><path d="M9,1 V15.5" stroke="#402000" stroke-width="0.9" fill="none"/><polygon points="9,1 16.5,10 9,15.5" fill="#e06a20"/></svg>
<div class="a" style="left:1894px;top:120px;width:26px;height:128px;background:#525252;border:1px solid #434343"></div>
<div class="t" style="left:1901.4px;top:220px;font-size:12px;color:#e2e2e2;transform-origin:0 0;transform:rotate(-90deg);letter-spacing:0.25px">Process Explorer</div>
<svg style="left:1898px;top:225px;" width="18" height="18" viewBox="0 0 18 18"><circle cx="9" cy="9" r="5.2" fill="none" stroke="#fff" stroke-width="2.6"/><circle cx="9" cy="9" r="6.9" fill="none" stroke="#fff" stroke-width="2.2" stroke-dasharray="2.2,1.4"/><circle cx="9" cy="9" r="3.6" fill="none" stroke="#222" stroke-width="0.8"/></svg>
<div class="a" style="left:1894px;top:815px;width:26px;height:125px;background:#525252;border:1px solid #434343"></div>
<div class="a" style="left:1894px;top:940px;width:26px;height:2px;background:#5e5e5e;"></div>
<div class="t" style="left:1901.4px;top:913px;font-size:12px;color:#e2e2e2;transform-origin:0 0;transform:rotate(-90deg);letter-spacing:0.25px">Process Console</div>
<svg style="left:1898px;top:919px;" width="18" height="16" viewBox="0 0 18 16"><polygon points="1,2 17,8 1,14 5,8" fill="#f05a28" stroke="#401000" stroke-width="0.8"/><path d="M5,8 H17" stroke="#801800" stroke-width="0.6"/></svg>
<div class="a" style="left:1894px;top:942px;width:26px;height:104px;background:#525252;border:1px solid #434343"></div>
<div class="t" style="left:1901.4px;top:1019px;font-size:12px;color:#e2e2e2;transform-origin:0 0;transform:rotate(-90deg);letter-spacing:0.25px">File Explorer</div>
<svg style="left:1899px;top:1024px;" width="16" height="18" viewBox="0 0 16 18"><path d="M1.5,4 V14 A6.5,2.5 0 0 0 14.5,14 V4" fill="#e0cc9c" stroke="#5a4a2a" stroke-width="0.8"/><ellipse cx="8" cy="4" rx="6.5" ry="2.5" fill="#f0e0b8" stroke="#5a4a2a" stroke-width="0.8"/></svg>
<div class="a" style="left:1726px;top:120px;width:1px;height:926px;background:#c89050;"></div>
<div class="a" style="left:27px;top:120px;width:1092px;height:743px;background:#737373;"></div>
<div class="a" style="left:27px;top:120px;width:1092px;height:25px;background:#727272;"></div>
<div class="a" style="left:1119px;top:120px;width:1px;height:744px;background:#383838;"></div>
<div class="a" style="left:27px;top:863px;width:1093px;height:1px;background:#383838;"></div>
<div class="a" style="left:26px;top:119px;width:1093px;height:1px;background:#4c4c4c;"></div>
<div class="a" style="left:26px;top:119px;width:1px;height:744px;background:#4c4c4c;"></div>
<svg style="left:51px;top:145px" width="1066" height="716" viewBox="0 0 1066 716"><defs><filter id="noise" x="0" y="0" width="100%" height="100%" color-interpolation-filters="sRGB"><feTurbulence type="fractalNoise" baseFrequency="0.5" numOctaves="1" seed="3" result="n"/><feColorMatrix in="n" type="matrix" values="1.6 0.3 0.3 0 -0.98  0.3 1.5 0.3 0 -0.92  0.4 0.4 1.8 0 -1.12  0 0 0 0 1"/></filter></defs><rect x="0" y="0" width="1066" height="716" filter="url(#noise)"/><circle cx="407" cy="7.5" r="3.6" fill="#d8d8ff" opacity="0.6"/><circle cx="407" cy="7.5" r="2.2" fill="#fff"/><circle cx="456.5" cy="10" r="1.2" fill="#fff"/><circle cx="557" cy="3" r="1.3" fill="#fff"/><circle cx="993.5" cy="3.3" r="1.4" fill="#fff"/><circle cx="9" cy="692" r="3.4" fill="#e0e0ff" opacity="0.6"/><circle cx="9" cy="692" r="2.2" fill="#fff"/><circle cx="9" cy="280" r="2" fill="#fff"/><circle cx="8" cy="123" r="1.3" fill="#ffff80"/><circle cx="1" cy="119" r="1" fill="#fff"/></svg>
<svg style="left:33px;top:125px" width="14" height="14" viewBox="0 0 14 14"><rect x="0" y="0" width="14" height="14" fill="#c9d0fc"/><rect x="0" y="0" width="14" height="4" fill="#c0c8f8"/><rect x="2.5" y="5.5" width="9" height="6.5" fill="#6f6f6f"/></svg>
<svg style="left:1039px;top:120px" width="80" height="24" viewBox="0 0 80 24"><rect x="0" y="12" width="9" height="3" fill="#f2f2f2"/><rect x="21" y="10" width="9" height="2" fill="#f2f2f2"/><polygon points="21,17 30,17 25.5,12.5" fill="#f2f2f2"/><path d="M42,13.5 H51 M46.5,9 V18" stroke="#f2f2f2" stroke-width="3"/><path d="M64,10 L72,18 M72,10 L64,18" stroke="#f2f2f2" stroke-width="2.4"/></svg>
<div class="t" style="left:447px;top:125.3px;font-size:13px;color:#d8d8d8;font-weight:bold;letter-spacing:0.86px">RGB 1:6 Image10 | &lt;*new*&gt;</div>
<div class="a" style="left:27px;top:145px;width:24px;height:718px;background:#737373;"></div>
<div class="a" style="left:27px;top:861px;width:1092px;height:2px;background:#737373;"></div>
<div class="a" style="left:1117px;top:145px;width:2px;height:718px;background:#737373;"></div>
<svg style="left:29px;top:146px" width="22" height="75" viewBox="0 0 22 75"><polygon points="0,21 22,0 22,75 0,75" fill="#585858"/><polyline points="0.5,75 0.5,21 22,0" fill="none" stroke="#444" stroke-width="1"/></svg>
<svg style="left:29px;top:221px" width="22" height="80" viewBox="0 0 22 80"><polygon points="0,17 22,0 22,80 0,80" fill="#bdbdbd"/><polyline points="0.5,80 0.5,17 22,0" fill="none" stroke="#444" stroke-width="1"/></svg>
<div class="a" style="left:49px;top:146px;width:2px;height:155px;background:#10c060;"></div>
<div class="t" style="left:34.7px;top:216px;font-size:12px;color:#e6e6e6;transform-origin:0 0;transform:rotate(-90deg);letter-spacing:0.2px">Image10</div>
<div class="t" style="left:34.7px;top:296.5px;font-size:12px;color:#1e1e1e;transform-origin:0 0;transform:rotate(-90deg);letter-spacing:0.2px">Preview01</div>
<svg style="left:34.5px;top:790.5px" width="11" height="11" viewBox="0 0 11 11"><path d="M0.5,0.5 L10,10 M10,4.5 V10 H4.5 L10,4.5" stroke="#e4e4e4" stroke-width="0.9" fill="none"/></svg>
<svg style="left:34.5px;top:808.5px" width="11" height="11" viewBox="0 0 11 11"><rect x="3" y="3" width="5" height="5" fill="none" stroke="#e4e4e4" stroke-width="0.9"/><path d="M0,0 L3,3 M11,0 L8,3 M0,11 L3,8 M11,11 L8,8" stroke="#e4e4e4" stroke-width="0.9"/></svg>
<svg style="left:34.5px;top:826.5px" width="11" height="11" viewBox="0 0 11 11"><rect x="0.5" y="0.5" width="6" height="6" fill="none" stroke="#e4e4e4" stroke-width="0.9"/><path d="M6.5,3.5 H10.5 V10.5 H3.5 V6.5" stroke="#e4e4e4" stroke-width="0.9" fill="none"/></svg>
<svg style="left:34.5px;top:844.5px" width="11" height="11" viewBox="0 0 11 11"><circle cx="5.5" cy="5.5" r="5" fill="none" stroke="#e4e4e4" stroke-width="0.9"/><circle cx="5.5" cy="5.5" r="2" fill="none" stroke="#e4e4e4" stroke-width="0.9"/></svg>
<div class="a" style="left:64px;top:157px;width:1092px;height:743px;background:#737373;"></div>
<div class="a" style="left:64px;top:157px;width:1092px;height:25px;background:#727272;"></div>
<div class="a" style="left:1156px;top:157px;width:1px;height:744px;background:#383838;"></div>
<div class="a" style="left:64px;top:900px;width:1093px;height:1px;background:#383838;"></div>
<div class="a" style="left:63px;top:156px;width:1093px;height:1px;background:#4c4c4c;"></div>
<div class="a" style="left:63px;top:156px;width:1px;height:744px;background:#4c4c4c;"></div>
<svg style="left:88px;top:182px" width="1066" height="716" viewBox="0 0 1066 716"><defs><filter id="cn" x="0" y="0" width="100%" height="100%" color-interpolation-filters="sRGB"><feTurbulence type="fractalNoise" baseFrequency="0.22" numOctaves="2" seed="9"/><feColorMatrix type="matrix" values="0.09 0.015 0.015 0 0.181  0.015 0.09 0.015 0 0.17  0.015 0.015 0.11 0 0.155  0 0 0 0 1"/></filter></defs><rect width="1066" height="716" fill="#3d3b3c"/><rect width="1066" height="716" filter="url(#cn)"/></svg>
<svg style="left:70px;top:162px" width="14" height="14" viewBox="0 0 14 14"><rect x="0" y="0" width="14" height="14" fill="#c9d0fc"/><rect x="0" y="0" width="14" height="4" fill="#c0c8f8"/><rect x="2.5" y="5.5" width="9" height="6.5" fill="#6f6f6f"/></svg>
<svg style="left:1076px;top:157px" width="80" height="24" viewBox="0 0 80 24"><rect x="0" y="12" width="9" height="3" fill="#f2f2f2"/><rect x="21" y="10" width="9" height="2" fill="#f2f2f2"/><polygon points="21,17 30,17 25.5,12.5" fill="#f2f2f2"/><path d="M42,13.5 H51 M46.5,9 V18" stroke="#f2f2f2" stroke-width="3"/><path d="M64,10 L72,18 M72,10 L64,18" stroke="#f2f2f2" stroke-width="2.4"/></svg>
<div class="t" style="left:462px;top:162.3px;font-size:13px;color:#d8d8d8;font-weight:bold;letter-spacing:0.83px">RGB 1:6 Image10_clone | &lt;*new*&gt;</div>
<svg style="left:66px;top:182px" width="22" height="112" viewBox="0 0 22 112"><polygon points="0,21 22,0 22,112 0,112" fill="#585858"/><polyline points="0.5,112 0.5,21 22,0" fill="none" stroke="#444" stroke-width="1"/></svg>
<div class="t" style="left:72.5px;top:289.5px;font-size:12px;color:#e6e6e6;transform-origin:0 0;transform:rotate(-90deg);letter-spacing:0.2px">Image10_clone</div>
<svg style="left:71.5px;top:827.5px" width="11" height="11" viewBox="0 0 11 11"><path d="M0.5,0.5 L10,10 M10,4.5 V10 H4.5 L10,4.5" stroke="#e4e4e4" stroke-width="0.9" fill="none"/></svg>
<svg style="left:71.5px;top:845.5px" width="11" height="11" viewBox="0 0 11 11"><rect x="3" y="3" width="5" height="5" fill="none" stroke="#e4e4e4" stroke-width="0.9"/><path d="M0,0 L3,3 M11,0 L8,3 M0,11 L3,8 M11,11 L8,8" stroke="#e4e4e4" stroke-width="0.9"/></svg>
<svg style="left:71.5px;top:863.5px" width="11" height="11" viewBox="0 0 11 11"><rect x="0.5" y="0.5" width="6" height="6" fill="none" stroke="#e4e4e4" stroke-width="0.9"/><path d="M6.5,3.5 H10.5 V10.5 H3.5 V6.5" stroke="#e4e4e4" stroke-width="0.9" fill="none"/></svg>
<svg style="left:71.5px;top:881.5px" width="11" height="11" viewBox="0 0 11 11"><circle cx="5.5" cy="5.5" r="5" fill="none" stroke="#e4e4e4" stroke-width="0.9"/><circle cx="5.5" cy="5.5" r="2" fill="none" stroke="#e4e4e4" stroke-width="0.9"/></svg>
<svg style="left:88px;top:182px;overflow:hidden" width="1066" height="716" viewBox="0 0 1066 716"><defs><radialGradient id="cs"><stop offset="0" stop-color="#fff" stop-opacity="1"/><stop offset="0.45" stop-color="#fff" stop-opacity="0.85"/><stop offset="1" stop-color="#fff" stop-opacity="0"/></radialGradient><radialGradient id="gal" cx="0.5" cy="0.5" r="0.5"><stop offset="0" stop-color="#fffaf4" stop-opacity="1"/><stop offset="0.45" stop-color="#e0dcd4" stop-opacity="0.9"/><stop offset="0.75" stop-color="#a8a49c" stop-opacity="0.45"/><stop offset="1" stop-color="#807a70" stop-opacity="0"/></radialGradient><radialGradient id="redg"><stop offset="0" stop-color="#ffd0c0" stop-opacity="0.9"/><stop offset="0.5" stop-color="#e07878" stop-opacity="0.5"/><stop offset="1" stop-color="#a05050" stop-opacity="0"/></radialGradient><radialGradient id="gal2" cx="0.5" cy="0.5" r="0.5"><stop offset="0" stop-color="#fff8f8" stop-opacity="1"/><stop offset="0.25" stop-color="#c8c0b8" stop-opacity="0.7"/><stop offset="1" stop-color="#807a70" stop-opacity="0"/></radialGradient></defs><circle cx="693.9" cy="51.9" r="0.65" fill="#b09870" opacity="0.45"/><circle cx="91.6" cy="299.4" r="0.65" fill="#8080a0" opacity="0.40"/><circle cx="881.4" cy="88.6" r="0.92" fill="#8080a0" opacity="0.45"/><circle cx="65.9" cy="419.2" r="1.09" fill="#9a8060" opacity="0.27"/><circle cx="153.8" cy="84.3" r="0.88" fill="#a08868" opacity="0.49"/><circle cx="200.3" cy="69.8" r="0.63" fill="#a0a0a0" opacity="0.27"/><circle cx="521.2" cy="28.1" r="0.64" fill="#a0a0a0" opacity="0.45"/><circle cx="73.3" cy="67.0" r="0.84" fill="#a08868" opacity="0.48"/><circle cx="64.7" cy="502.3" r="0.89" fill="#a0a0a0" opacity="0.49"/><circle cx="296.2" cy="98.0" r="1.03" fill="#8888b8" opacity="0.35"/><circle cx="280.1" cy="2.9" r="0.87" fill="#8888b8" opacity="0.46"/><circle cx="339.6" cy="89.9" r="1.08" fill="#b09870" opacity="0.48"/><circle cx="469.7" cy="78.7" r="0.63" fill="#b09870" opacity="0.25"/><circle cx="161.2" cy="72.6" r="0.91" fill="#a08868" opacity="0.27"/><circle cx="685.3" cy="65.2" r="0.86" fill="#a08868" opacity="0.57"/><circle cx="1038.8" cy="57.7" r="0.71" fill="#9a8060" opacity="0.32"/><circle cx="852.4" cy="60.7" r="0.66" fill="#a0a0a0" opacity="0.39"/><circle cx="677.8" cy="62.1" r="0.80" fill="#a0a0a0" opacity="0.39"/><circle cx="181.2" cy="91.0" r="0.90" fill="#8080a0" opacity="0.41"/><circle cx="584.5" cy="15.3" r="0.92" fill="#a0a0a0" opacity="0.43"/><circle cx="446.7" cy="93.8" r="0.78" fill="#a0a0a0" opacity="0.41"/><circle cx="558.1" cy="13.4" r="0.99" fill="#8888b8" opacity="0.46"/><circle cx="128.3" cy="44.2" r="0.86" fill="#a0a0a0" opacity="0.44"/><circle cx="836.0" cy="76.0" r="0.63" fill="#b09870" opacity="0.32"/><circle cx="45.0" cy="70.0" r="0.88" fill="#8888b8" opacity="0.52"/><circle cx="895.4" cy="98.2" r="0.80" fill="#9a8060" opacity="0.36"/><circle cx="796.0" cy="67.4" r="0.68" fill="#8888b8" opacity="0.48"/><circle cx="98.3" cy="262.0" r="0.88" fill="#a08868" opacity="0.40"/><circle cx="19.3" cy="237.4" r="0.75" fill="#b09870" opacity="0.59"/><circle cx="89.6" cy="194.7" r="0.74" fill="#8080a0" opacity="0.30"/><circle cx="95.4" cy="41.2" r="0.69" fill="#a0a0a0" opacity="0.56"/><circle cx="286.7" cy="12.1" r="1.00" fill="#9a8060" opacity="0.28"/><circle cx="912.7" cy="47.7" r="0.83" fill="#9a8060" opacity="0.37"/><circle cx="285.5" cy="92.5" r="0.95" fill="#b09870" opacity="0.58"/><circle cx="39.4" cy="13.2" r="0.88" fill="#b09870" opacity="0.32"/><circle cx="370.5" cy="38.9" r="0.61" fill="#8080a0" opacity="0.47"/><circle cx="59.1" cy="476.3" r="1.04" fill="#8888b8" opacity="0.48"/><circle cx="1.1" cy="273.2" r="0.74" fill="#8888b8" opacity="0.48"/><circle cx="96.8" cy="585.0" r="0.80" fill="#8080a0" opacity="0.26"/><circle cx="24.0" cy="217.8" r="0.64" fill="#8080a0" opacity="0.59"/><circle cx="866.6" cy="11.5" r="0.89" fill="#a0a0a0" opacity="0.56"/><circle cx="245.1" cy="22.3" r="0.92" fill="#8080a0" opacity="0.59"/><circle cx="54.1" cy="13.5" r="0.94" fill="#b09870" opacity="0.42"/><circle cx="3.5" cy="571.2" r="1.07" fill="#a0a0a0" opacity="0.56"/><circle cx="98.0" cy="376.6" r="0.97" fill="#a0a0a0" opacity="0.34"/><circle cx="79.4" cy="190.1" r="0.98" fill="#a0a0a0" opacity="0.33"/><circle cx="901.3" cy="54.9" r="0.74" fill="#a0a0a0" opacity="0.27"/><circle cx="662.1" cy="95.5" r="0.63" fill="#8888b8" opacity="0.34"/><circle cx="497.1" cy="84.8" r="0.70" fill="#b09870" opacity="0.59"/><circle cx="998.0" cy="12.5" r="0.64" fill="#8888b8" opacity="0.43"/><circle cx="992.0" cy="53.4" r="0.67" fill="#9a8060" opacity="0.43"/><circle cx="1015.6" cy="94.9" r="0.85" fill="#a0a0a0" opacity="0.56"/><circle cx="26.5" cy="2.6" r="0.94" fill="#8888b8" opacity="0.39"/><circle cx="400.9" cy="86.6" r="0.60" fill="#a08868" opacity="0.51"/><circle cx="894.5" cy="85.9" r="0.96" fill="#8080a0" opacity="0.57"/><circle cx="51.5" cy="72.8" r="0.74" fill="#a0a0a0" opacity="0.58"/><circle cx="767.1" cy="35.4" r="0.81" fill="#a0a0a0" opacity="0.47"/><circle cx="713.0" cy="85.7" r="0.68" fill="#a0a0a0" opacity="0.32"/><circle cx="96.7" cy="244.8" r="0.76" fill="#9a8060" opacity="0.38"/><circle cx="21.4" cy="623.4" r="0.81" fill="#8888b8" opacity="0.43"/><circle cx="66.2" cy="198.7" r="0.66" fill="#a08868" opacity="0.43"/><circle cx="23.3" cy="23.1" r="0.98" fill="#a0a0a0" opacity="0.53"/><circle cx="78.0" cy="666.1" r="1.03" fill="#b09870" opacity="0.59"/><circle cx="264.9" cy="78.1" r="0.68" fill="#8080a0" opacity="0.59"/><circle cx="953.9" cy="60.9" r="0.60" fill="#9a8060" opacity="0.29"/><circle cx="607.0" cy="26.9" r="0.75" fill="#a0a0a0" opacity="0.29"/><circle cx="744.7" cy="80.3" r="0.75" fill="#9a8060" opacity="0.58"/><circle cx="842.7" cy="0.8" r="0.75" fill="#b09870" opacity="0.41"/><circle cx="327.7" cy="15.6" r="1.04" fill="#8888b8" opacity="0.48"/><circle cx="86.4" cy="163.1" r="1.06" fill="#8888b8" opacity="0.33"/><circle cx="36.3" cy="242.0" r="0.78" fill="#8888b8" opacity="0.39"/><circle cx="7.2" cy="209.2" r="0.63" fill="#b09870" opacity="0.42"/><circle cx="60.1" cy="425.9" r="0.63" fill="#8888b8" opacity="0.26"/><circle cx="334.9" cy="81.1" r="1.07" fill="#9a8060" opacity="0.37"/><circle cx="795.6" cy="22.8" r="0.96" fill="#a0a0a0" opacity="0.54"/><circle cx="116.1" cy="56.0" r="0.78" fill="#9a8060" opacity="0.58"/><circle cx="461.0" cy="35.3" r="0.70" fill="#8888b8" opacity="0.44"/><circle cx="856.4" cy="44.4" r="0.97" fill="#8080a0" opacity="0.56"/><circle cx="4.0" cy="541.0" r="1.07" fill="#a0a0a0" opacity="0.27"/><circle cx="880.5" cy="76.8" r="1.08" fill="#a0a0a0" opacity="0.58"/><circle cx="833.9" cy="56.6" r="0.80" fill="#8080a0" opacity="0.31"/><circle cx="112.2" cy="51.7" r="0.64" fill="#b09870" opacity="0.28"/><circle cx="974.7" cy="28.9" r="0.72" fill="#a08868" opacity="0.27"/><circle cx="207.0" cy="53.8" r="1.03" fill="#b09870" opacity="0.41"/><circle cx="1008.1" cy="75.7" r="0.95" fill="#b09870" opacity="0.37"/><circle cx="39.9" cy="243.5" r="0.70" fill="#9a8060" opacity="0.34"/><circle cx="216.9" cy="8.1" r="0.80" fill="#a08868" opacity="0.38"/><circle cx="662.0" cy="55.8" r="1.00" fill="#9a8060" opacity="0.44"/><circle cx="67.4" cy="72.6" r="0.93" fill="#8888b8" opacity="0.30"/><circle cx="445.4" cy="36.8" r="0.88" fill="#a0a0a0" opacity="0.38"/><circle cx="217.1" cy="4.2" r="0.81" fill="#8080a0" opacity="0.54"/><circle cx="15.8" cy="394.9" r="1.00" fill="#a0a0a0" opacity="0.39"/><circle cx="183.1" cy="48.0" r="0.85" fill="#8888b8" opacity="0.53"/><circle cx="56.9" cy="663.1" r="0.64" fill="#8888b8" opacity="0.50"/><circle cx="602.7" cy="29.9" r="0.68" fill="#b09870" opacity="0.38"/><circle cx="3.7" cy="706.1" r="0.72" fill="#8888b8" opacity="0.52"/><circle cx="114.1" cy="92.0" r="0.78" fill="#8888b8" opacity="0.53"/><circle cx="43.3" cy="93.3" r="0.76" fill="#a0a0a0" opacity="0.50"/><circle cx="85.2" cy="538.5" r="0.93" fill="#8888b8" opacity="0.52"/><circle cx="27.6" cy="47.5" r="0.97" fill="#b09870" opacity="0.54"/><circle cx="69.8" cy="251.2" r="0.68" fill="#a08868" opacity="0.56"/><circle cx="340.1" cy="26.4" r="0.80" fill="#8080a0" opacity="0.47"/><circle cx="51.8" cy="614.5" r="0.88" fill="#8888b8" opacity="0.45"/><circle cx="940.8" cy="74.9" r="0.91" fill="#b09870" opacity="0.39"/><circle cx="792.7" cy="34.6" r="0.73" fill="#b09870" opacity="0.47"/><circle cx="1.9" cy="24.2" r="0.75" fill="#8080a0" opacity="0.47"/><circle cx="50.9" cy="349.7" r="0.93" fill="#b09870" opacity="0.26"/><circle cx="2.8" cy="254.2" r="0.86" fill="#9a8060" opacity="0.44"/><circle cx="15.0" cy="573.9" r="0.67" fill="#a0a0a0" opacity="0.28"/><circle cx="281.7" cy="8.2" r="1.01" fill="#a0a0a0" opacity="0.56"/><circle cx="0.4" cy="44.1" r="0.80" fill="#9a8060" opacity="0.33"/><circle cx="62.2" cy="557.7" r="0.91" fill="#9a8060" opacity="0.48"/><circle cx="68.0" cy="448.2" r="0.99" fill="#a0a0a0" opacity="0.50"/><circle cx="6.8" cy="604.6" r="1.06" fill="#a0a0a0" opacity="0.28"/><circle cx="686.5" cy="88.3" r="1.06" fill="#a0a0a0" opacity="0.58"/><circle cx="280.7" cy="37.6" r="0.88" fill="#a0a0a0" opacity="0.40"/><circle cx="938.1" cy="10.9" r="1.05" fill="#a08868" opacity="0.54"/><circle cx="6.8" cy="19.0" r="0.72" fill="#a0a0a0" opacity="0.56"/><circle cx="182.9" cy="23.6" r="0.65" fill="#9a8060" opacity="0.58"/><circle cx="30.6" cy="29.8" r="0.92" fill="#a0a0a0" opacity="0.26"/><circle cx="72.3" cy="33.4" r="0.98" fill="#b09870" opacity="0.32"/><circle cx="216.6" cy="24.2" r="0.64" fill="#a0a0a0" opacity="0.51"/><circle cx="51.6" cy="544.1" r="0.98" fill="#a08868" opacity="0.46"/><circle cx="33.3" cy="371.3" r="0.77" fill="#9a8060" opacity="0.50"/><circle cx="919.1" cy="65.1" r="0.69" fill="#a08868" opacity="0.25"/><circle cx="1042.4" cy="3.1" r="0.65" fill="#8888b8" opacity="0.49"/><circle cx="101.4" cy="664.8" r="0.64" fill="#a0a0a0" opacity="0.56"/><circle cx="26.8" cy="147.6" r="0.81" fill="#a08868" opacity="0.44"/><circle cx="36.1" cy="416.4" r="0.68" fill="#b09870" opacity="0.55"/><circle cx="108.5" cy="689.1" r="0.70" fill="#9a8060" opacity="0.30"/><circle cx="494.5" cy="9.0" r="0.95" fill="#8888b8" opacity="0.43"/><circle cx="104.3" cy="300.4" r="0.96" fill="#8888b8" opacity="0.47"/><circle cx="1038.9" cy="27.3" r="0.71" fill="#b09870" opacity="0.50"/><circle cx="507.1" cy="11.5" r="0.86" fill="#a08868" opacity="0.39"/><circle cx="813.0" cy="87.6" r="0.78" fill="#b09870" opacity="0.27"/><circle cx="14.2" cy="299.7" r="0.91" fill="#8888b8" opacity="0.49"/><circle cx="618.5" cy="78.2" r="0.97" fill="#a08868" opacity="0.58"/><circle cx="226.0" cy="92.6" r="1.00" fill="#9a8060" opacity="0.47"/><circle cx="584.5" cy="89.6" r="0.78" fill="#8888b8" opacity="0.55"/><circle cx="198.2" cy="1.9" r="1.00" fill="#a0a0a0" opacity="0.38"/><circle cx="91.1" cy="642.3" r="1.06" fill="#8080a0" opacity="0.55"/><circle cx="60.8" cy="592.8" r="0.99" fill="#a08868" opacity="0.30"/><circle cx="16.0" cy="8.2" r="0.93" fill="#9a8060" opacity="0.34"/><circle cx="108.2" cy="102.2" r="0.69" fill="#8080a0" opacity="0.41"/><circle cx="1041.7" cy="64.7" r="0.99" fill="#b09870" opacity="0.54"/><circle cx="249.6" cy="99.8" r="0.88" fill="#8888b8" opacity="0.42"/><circle cx="21.9" cy="32.8" r="1.07" fill="#a0a0a0" opacity="0.37"/><circle cx="36.1" cy="514.2" r="0.66" fill="#a0a0a0" opacity="0.28"/><circle cx="56.2" cy="207.0" r="1.01" fill="#a08868" opacity="0.39"/><circle cx="42.7" cy="517.4" r="0.87" fill="#8888b8" opacity="0.27"/><circle cx="320.2" cy="4.4" r="1.01" fill="#8080a0" opacity="0.42"/><circle cx="816.5" cy="43.1" r="1.05" fill="#b09870" opacity="0.46"/><circle cx="813.0" cy="72.6" r="1.03" fill="#8080a0" opacity="0.40"/><circle cx="107.2" cy="666.2" r="0.78" fill="#9a8060" opacity="0.54"/><circle cx="995.5" cy="39.1" r="0.86" fill="#b09870" opacity="0.54"/><circle cx="71.7" cy="486.9" r="0.90" fill="#b09870" opacity="0.58"/><circle cx="439.6" cy="73.1" r="0.84" fill="#a0a0a0" opacity="0.56"/><circle cx="9.9" cy="479.3" r="0.71" fill="#9a8060" opacity="0.29"/><circle cx="973.8" cy="37.7" r="0.61" fill="#9a8060" opacity="0.26"/><circle cx="84.9" cy="222.7" r="0.90" fill="#a0a0a0" opacity="0.59"/><circle cx="773.6" cy="11.1" r="0.90" fill="#8080a0" opacity="0.36"/><circle cx="1.8" cy="188.3" r="0.68" fill="#8888b8" opacity="0.57"/><circle cx="61.4" cy="283.2" r="0.70" fill="#a0a0a0" opacity="0.34"/><circle cx="490.1" cy="62.8" r="0.99" fill="#a08868" opacity="0.33"/><circle cx="158.8" cy="31.9" r="0.79" fill="#8888b8" opacity="0.29"/><circle cx="21.9" cy="24.0" r="0.84" fill="#b09870" opacity="0.45"/><circle cx="40.4" cy="143.9" r="0.79" fill="#8080a0" opacity="0.26"/><circle cx="37.1" cy="264.7" r="0.83" fill="#a0a0a0" opacity="0.58"/><circle cx="970.0" cy="46.0" r="0.92" fill="#b09870" opacity="0.57"/><circle cx="753.0" cy="64.4" r="0.88" fill="#a08868" opacity="0.47"/><circle cx="41.2" cy="183.2" r="0.63" fill="#a08868" opacity="0.44"/><circle cx="29.6" cy="658.1" r="0.99" fill="#a08868" opacity="0.50"/><circle cx="59.4" cy="103.7" r="1.07" fill="#9a8060" opacity="0.49"/><circle cx="807.9" cy="75.5" r="0.79" fill="#a08868" opacity="0.39"/><circle cx="887.8" cy="55.7" r="1.03" fill="#b09870" opacity="0.56"/><circle cx="103.4" cy="665.0" r="0.91" fill="#9a8060" opacity="0.41"/><circle cx="60.5" cy="511.0" r="1.04" fill="#b09870" opacity="0.40"/><circle cx="263.0" cy="18.2" r="1.02" fill="#b09870" opacity="0.37"/><circle cx="60.6" cy="640.8" r="1.06" fill="#a0a0a0" opacity="0.45"/><circle cx="890.4" cy="85.3" r="1.09" fill="#8080a0" opacity="0.40"/><circle cx="43.2" cy="292.8" r="0.89" fill="#a08868" opacity="0.30"/><circle cx="84.5" cy="62.6" r="0.97" fill="#b09870" opacity="0.52"/><circle cx="186.9" cy="98.1" r="0.95" fill="#a0a0a0" opacity="0.53"/><circle cx="70.0" cy="524.6" r="1.02" fill="#8888b8" opacity="0.57"/><circle cx="1008.1" cy="64.7" r="1.06" fill="#8888b8" opacity="0.42"/><circle cx="4.9" cy="372.2" r="1.08" fill="#8888b8" opacity="0.27"/><circle cx="310.8" cy="77.1" r="0.85" fill="#a0a0a0" opacity="0.43"/><circle cx="22.1" cy="692.7" r="0.91" fill="#8080a0" opacity="0.31"/><circle cx="1018.4" cy="13.9" r="0.97" fill="#a0a0a0" opacity="0.34"/><circle cx="100.1" cy="128.1" r="0.66" fill="#a08868" opacity="0.42"/><circle cx="903.6" cy="38.3" r="0.67" fill="#b09870" opacity="0.49"/><circle cx="706.9" cy="8.3" r="0.87" fill="#9a8060" opacity="0.27"/><circle cx="22.2" cy="99.8" r="0.99" fill="#8888b8" opacity="0.58"/><circle cx="36.6" cy="459.4" r="1.06" fill="#a08868" opacity="0.47"/><circle cx="38.1" cy="72.0" r="0.86" fill="#9a8060" opacity="0.40"/><circle cx="132.1" cy="94.1" r="1.06" fill="#a08868" opacity="0.45"/><circle cx="33.0" cy="238.9" r="0.86" fill="#8080a0" opacity="0.38"/><circle cx="624.3" cy="8.5" r="0.68" fill="#a08868" opacity="0.58"/><circle cx="230.4" cy="40.7" r="0.68" fill="#9a8060" opacity="0.27"/><circle cx="66.1" cy="277.7" r="0.78" fill="#8888b8" opacity="0.52"/><circle cx="894.3" cy="68.1" r="1.06" fill="#a0a0a0" opacity="0.60"/><circle cx="440.3" cy="74.0" r="0.98" fill="#8888b8" opacity="0.46"/><circle cx="620.0" cy="63.0" r="0.76" fill="#a08868" opacity="0.55"/><circle cx="970.7" cy="7.7" r="0.73" fill="#9a8060" opacity="0.56"/><circle cx="494.9" cy="29.1" r="0.78" fill="#a0a0a0" opacity="0.58"/><circle cx="105.5" cy="268.1" r="0.92" fill="#8888b8" opacity="0.57"/><circle cx="795.7" cy="66.0" r="0.76" fill="#a08868" opacity="0.59"/><circle cx="45.1" cy="294.6" r="0.75" fill="#9a8060" opacity="0.49"/><circle cx="4.2" cy="218.0" r="0.89" fill="#9a8060" opacity="0.48"/><circle cx="438.2" cy="87.0" r="0.86" fill="#8080a0" opacity="0.43"/><circle cx="31.0" cy="54.5" r="0.85" fill="#b09870" opacity="0.41"/><circle cx="35.1" cy="450.1" r="0.63" fill="#b09870" opacity="0.32"/><circle cx="665.2" cy="14.0" r="1.05" fill="#8080a0" opacity="0.45"/><circle cx="46.9" cy="666.5" r="0.76" fill="#8080a0" opacity="0.56"/><circle cx="598.6" cy="82.3" r="1.04" fill="#b09870" opacity="0.37"/><circle cx="27.0" cy="576.3" r="0.95" fill="#8080a0" opacity="0.28"/><circle cx="91.7" cy="126.8" r="0.76" fill="#8080a0" opacity="0.48"/><circle cx="316.6" cy="47.2" r="0.64" fill="#a08868" opacity="0.35"/><circle cx="26.9" cy="503.9" r="0.72" fill="#8888b8" opacity="0.55"/><circle cx="193.6" cy="82.5" r="0.97" fill="#b09870" opacity="0.50"/><circle cx="43.1" cy="28.6" r="0.82" fill="#8080a0" opacity="0.51"/><circle cx="997.4" cy="80.1" r="0.74" fill="#a0a0a0" opacity="0.27"/><circle cx="50.5" cy="175.0" r="0.62" fill="#9a8060" opacity="0.36"/><circle cx="98.6" cy="455.7" r="0.67" fill="#8080a0" opacity="0.50"/><circle cx="886.0" cy="82.0" r="0.61" fill="#a08868" opacity="0.42"/><circle cx="46.3" cy="641.4" r="0.70" fill="#a08868" opacity="0.50"/><circle cx="477.6" cy="80.9" r="0.82" fill="#a08868" opacity="0.45"/><circle cx="48.6" cy="335.5" r="0.64" fill="#8888b8" opacity="0.50"/><circle cx="578.9" cy="5.9" r="0.92" fill="#9a8060" opacity="0.47"/><circle cx="147.8" cy="19.8" r="1.02" fill="#8888b8" opacity="0.35"/><circle cx="255.2" cy="29.5" r="1.00" fill="#b09870" opacity="0.57"/><circle cx="53.9" cy="155.0" r="0.85" fill="#8888b8" opacity="0.31"/><circle cx="85.5" cy="492.6" r="0.67" fill="#8080a0" opacity="0.47"/><circle cx="34.1" cy="437.3" r="0.81" fill="#b09870" opacity="0.35"/><circle cx="90.7" cy="231.8" r="0.81" fill="#8888b8" opacity="0.44"/><circle cx="86.8" cy="579.7" r="0.94" fill="#a0a0a0" opacity="0.46"/><circle cx="29.7" cy="135.2" r="0.97" fill="#a0a0a0" opacity="0.49"/><circle cx="99.3" cy="267.3" r="0.63" fill="#b09870" opacity="0.33"/><circle cx="396.9" cy="10.9" r="1.08" fill="#b09870" opacity="0.41"/><circle cx="128.5" cy="97.1" r="0.91" fill="#9a8060" opacity="0.56"/><circle cx="880.1" cy="87.9" r="0.86" fill="#a08868" opacity="0.43"/><circle cx="642.9" cy="24.4" r="0.72" fill="#a0a0a0" opacity="0.37"/><circle cx="739.7" cy="15.2" r="0.82" fill="#b09870" opacity="0.53"/><circle cx="520.3" cy="52.8" r="0.69" fill="#a08868" opacity="0.44"/><circle cx="1011.4" cy="9.9" r="1.10" fill="#a08868" opacity="0.42"/><circle cx="515.9" cy="22.7" r="0.64" fill="#9a8060" opacity="0.47"/><circle cx="409.8" cy="45.5" r="0.78" fill="#a08868" opacity="0.45"/><circle cx="623.0" cy="99.6" r="0.62" fill="#a0a0a0" opacity="0.45"/><circle cx="432.8" cy="43.3" r="0.94" fill="#a08868" opacity="0.56"/><circle cx="78.4" cy="136.2" r="0.89" fill="#9a8060" opacity="0.36"/><circle cx="21.4" cy="34.1" r="0.70" fill="#8888b8" opacity="0.46"/><circle cx="84.5" cy="579.6" r="0.77" fill="#b09870" opacity="0.30"/><circle cx="61.2" cy="296.6" r="0.64" fill="#9a8060" opacity="0.46"/><circle cx="931.0" cy="18.4" r="0.88" fill="#a08868" opacity="0.60"/><circle cx="59.7" cy="439.6" r="1.02" fill="#a0a0a0" opacity="0.30"/><circle cx="19.8" cy="150.7" r="0.98" fill="#b09870" opacity="0.28"/><circle cx="140.6" cy="6.5" r="0.65" fill="#8888b8" opacity="0.53"/><circle cx="665.9" cy="87.5" r="0.85" fill="#b09870" opacity="0.44"/><circle cx="31.0" cy="557.1" r="0.82" fill="#8080a0" opacity="0.55"/><circle cx="28.2" cy="472.6" r="0.63" fill="#9a8060" opacity="0.48"/><circle cx="63.9" cy="404.0" r="1.05" fill="#8888b8" opacity="0.38"/><circle cx="32.7" cy="14.9" r="0.82" fill="#a0a0a0" opacity="0.33"/><circle cx="26.0" cy="79.9" r="0.67" fill="#9a8060" opacity="0.36"/><circle cx="16.4" cy="96.5" r="0.72" fill="#b09870" opacity="0.40"/><circle cx="111.8" cy="14.3" r="0.63" fill="#a08868" opacity="0.29"/><circle cx="560.1" cy="1.8" r="0.94" fill="#8080a0" opacity="0.30"/><circle cx="73.5" cy="30.9" r="0.62" fill="#b09870" opacity="0.53"/><circle cx="347.2" cy="29.6" r="0.87" fill="#8888b8" opacity="0.44"/><circle cx="1064.2" cy="3.8" r="0.85" fill="#b09870" opacity="0.60"/><circle cx="707.2" cy="62.2" r="0.99" fill="#b09870" opacity="0.57"/><circle cx="52.8" cy="497.0" r="0.94" fill="#a08868" opacity="0.40"/><circle cx="378.6" cy="45.9" r="0.73" fill="#b09870" opacity="0.48"/><circle cx="880.7" cy="51.5" r="0.93" fill="#b09870" opacity="0.57"/><circle cx="70.2" cy="542.2" r="0.86" fill="#a08868" opacity="0.43"/><circle cx="925.1" cy="31.0" r="0.78" fill="#8888b8" opacity="0.55"/><circle cx="551.5" cy="4.2" r="0.78" fill="#8080a0" opacity="0.43"/><circle cx="18.9" cy="143.8" r="0.73" fill="#b09870" opacity="0.46"/><circle cx="94.7" cy="91.9" r="0.91" fill="#a08868" opacity="0.38"/><circle cx="46.8" cy="316.9" r="0.62" fill="#a08868" opacity="0.51"/><circle cx="618.5" cy="45.4" r="0.76" fill="#8080a0" opacity="0.27"/><circle cx="27.3" cy="424.4" r="1.07" fill="#8888b8" opacity="0.50"/><circle cx="187.9" cy="46.6" r="0.85" fill="#8888b8" opacity="0.43"/><circle cx="43.3" cy="486.8" r="0.77" fill="#b09870" opacity="0.39"/><circle cx="490.2" cy="64.5" r="0.89" fill="#9a8060" opacity="0.26"/><circle cx="433.8" cy="35.9" r="0.67" fill="#a0a0a0" opacity="0.37"/><circle cx="552.4" cy="4.3" r="0.74" fill="#b09870" opacity="0.34"/><circle cx="54.5" cy="218.0" r="1.00" fill="#8888b8" opacity="0.55"/><circle cx="55.5" cy="384.4" r="1.07" fill="#a08868" opacity="0.48"/><circle cx="9.1" cy="48.4" r="1.01" fill="#b09870" opacity="0.26"/><circle cx="132.7" cy="98.1" r="1.01" fill="#9a8060" opacity="0.42"/><circle cx="15.1" cy="516.4" r="1.00" fill="#a0a0a0" opacity="0.42"/><circle cx="107.5" cy="68.2" r="1.08" fill="#9a8060" opacity="0.40"/><circle cx="165.1" cy="40.6" r="0.67" fill="#a0a0a0" opacity="0.31"/><circle cx="41.4" cy="251.9" r="1.06" fill="#a0a0a0" opacity="0.60"/><circle cx="991.2" cy="66.6" r="0.74" fill="#8888b8" opacity="0.36"/><circle cx="107.3" cy="0.9" r="1.07" fill="#8080a0" opacity="0.48"/><circle cx="53.4" cy="238.5" r="0.84" fill="#8888b8" opacity="0.37"/><circle cx="388.1" cy="78.5" r="1.00" fill="#a08868" opacity="0.50"/><circle cx="419.2" cy="25.7" r="0.86" fill="#9a8060" opacity="0.28"/><circle cx="689.5" cy="94.5" r="1.02" fill="#b09870" opacity="0.28"/><circle cx="96.0" cy="3.5" r="1.04" fill="#a0a0a0" opacity="0.42"/><circle cx="158.9" cy="67.3" r="0.66" fill="#8080a0" opacity="0.42"/><circle cx="571.4" cy="84.2" r="0.72" fill="#8888b8" opacity="0.45"/><circle cx="44.8" cy="183.5" r="0.74" fill="#8080a0" opacity="0.44"/><circle cx="255.5" cy="68.0" r="1.07" fill="#9a8060" opacity="0.42"/><circle cx="281.6" cy="22.1" r="0.91" fill="#8888b8" opacity="0.29"/><circle cx="607.4" cy="86.5" r="0.89" fill="#a0a0a0" opacity="0.33"/><circle cx="757.7" cy="44.5" r="0.64" fill="#8080a0" opacity="0.37"/><circle cx="104.5" cy="153.9" r="0.69" fill="#a0a0a0" opacity="0.36"/><circle cx="89.5" cy="543.6" r="1.06" fill="#b09870" opacity="0.25"/><circle cx="434.0" cy="63.0" r="0.67" fill="#8080a0" opacity="0.43"/><circle cx="755.4" cy="47.9" r="1.00" fill="#9a8060" opacity="0.42"/><circle cx="838.5" cy="66.1" r="1.09" fill="#a0a0a0" opacity="0.45"/><circle cx="323.0" cy="37.8" r="1.02" fill="#8888b8" opacity="0.53"/><circle cx="1008.4" cy="82.9" r="0.98" fill="#a08868" opacity="0.55"/><circle cx="948.2" cy="35.9" r="0.99" fill="#a0a0a0" opacity="0.53"/><circle cx="92.8" cy="467.2" r="0.93" fill="#a08868" opacity="0.57"/><circle cx="581.4" cy="59.5" r="1.02" fill="#8888b8" opacity="0.47"/><circle cx="311.4" cy="63.0" r="0.69" fill="#a08868" opacity="0.56"/><circle cx="416.7" cy="6.5" r="0.65" fill="#8080a0" opacity="0.34"/><circle cx="862.0" cy="42.7" r="0.85" fill="#a0a0a0" opacity="0.38"/><circle cx="1040.6" cy="40.8" r="0.66" fill="#a0a0a0" opacity="0.38"/><circle cx="514.3" cy="5.1" r="0.67" fill="#a08868" opacity="0.46"/><circle cx="614.8" cy="33.4" r="0.69" fill="#8888b8" opacity="0.46"/><circle cx="27.5" cy="392.5" r="0.92" fill="#8888b8" opacity="0.53"/><circle cx="57.0" cy="213.1" r="0.99" fill="#8888b8" opacity="0.38"/><circle cx="951.3" cy="31.5" r="0.98" fill="#a08868" opacity="0.41"/><circle cx="822.3" cy="29.6" r="0.88" fill="#a0a0a0" opacity="0.37"/><circle cx="259.4" cy="50.0" r="0.65" fill="#b09870" opacity="0.46"/><circle cx="71.2" cy="2.2" r="0.93" fill="#b09870" opacity="0.45"/><circle cx="293.2" cy="48.2" r="0.90" fill="#b09870" opacity="0.43"/><circle cx="83.9" cy="16.7" r="0.64" fill="#b09870" opacity="0.54"/><circle cx="346.6" cy="2.5" r="0.98" fill="#a0a0a0" opacity="0.41"/><circle cx="34.4" cy="385.1" r="0.66" fill="#8888b8" opacity="0.33"/><circle cx="32.5" cy="557.1" r="1.01" fill="#9a8060" opacity="0.34"/><circle cx="291.8" cy="64.1" r="0.80" fill="#9a8060" opacity="0.43"/><circle cx="76.1" cy="342.2" r="0.82" fill="#8080a0" opacity="0.59"/><circle cx="809.7" cy="54.7" r="0.61" fill="#b09870" opacity="0.52"/><circle cx="24.4" cy="529.4" r="0.96" fill="#b09870" opacity="0.27"/><circle cx="219.2" cy="9.3" r="0.96" fill="#a0a0a0" opacity="0.47"/><circle cx="47.2" cy="125.4" r="0.81" fill="#a08868" opacity="0.26"/><circle cx="518.1" cy="59.2" r="1.00" fill="#a08868" opacity="0.42"/><circle cx="876.2" cy="91.9" r="0.86" fill="#9a8060" opacity="0.34"/><circle cx="465.5" cy="99.0" r="0.71" fill="#9a8060" opacity="0.45"/><circle cx="403.9" cy="6.5" r="0.83" fill="#9a8060" opacity="0.27"/><circle cx="75.7" cy="231.5" r="0.88" fill="#b09870" opacity="0.41"/><circle cx="7.8" cy="146.4" r="0.79" fill="#a08868" opacity="0.29"/><circle cx="630.2" cy="90.4" r="0.82" fill="#8080a0" opacity="0.45"/><circle cx="645.9" cy="84.8" r="0.90" fill="#8888b8" opacity="0.27"/><circle cx="40.8" cy="67.2" r="1.00" fill="#8080a0" opacity="0.26"/><circle cx="51.9" cy="172.2" r="0.99" fill="#8080a0" opacity="0.27"/><circle cx="441.0" cy="29.6" r="0.61" fill="#8888b8" opacity="0.51"/><circle cx="545.9" cy="75.7" r="1.06" fill="#8888b8" opacity="0.25"/><circle cx="852.3" cy="55.6" r="0.93" fill="#9a8060" opacity="0.47"/><circle cx="653.1" cy="61.8" r="0.78" fill="#b09870" opacity="0.28"/><circle cx="904.3" cy="72.6" r="0.74" fill="#a08868" opacity="0.36"/><circle cx="204.7" cy="56.5" r="0.66" fill="#9a8060" opacity="0.49"/><circle cx="32.6" cy="487.5" r="1.00" fill="#8888b8" opacity="0.27"/><circle cx="272.3" cy="96.0" r="1.02" fill="#a08868" opacity="0.26"/><circle cx="856.7" cy="9.4" r="0.61" fill="#b09870" opacity="0.33"/><circle cx="95.6" cy="152.1" r="0.98" fill="#a08868" opacity="0.56"/><circle cx="97.8" cy="620.2" r="0.73" fill="#a0a0a0" opacity="0.59"/><circle cx="68.2" cy="47.9" r="0.64" fill="#9a8060" opacity="0.28"/><circle cx="77.4" cy="64.1" r="0.93" fill="#a0a0a0" opacity="0.36"/><circle cx="280.4" cy="32.7" r="0.65" fill="#8888b8" opacity="0.59"/><circle cx="69.1" cy="10.6" r="1.07" fill="#8080a0" opacity="0.37"/><circle cx="32.1" cy="464.4" r="0.98" fill="#8080a0" opacity="0.55"/><circle cx="280.3" cy="5.4" r="0.93" fill="#9a8060" opacity="0.54"/><circle cx="250.3" cy="21.0" r="0.84" fill="#8888b8" opacity="0.29"/><circle cx="453.9" cy="43.5" r="0.63" fill="#8080a0" opacity="0.38"/><circle cx="591.4" cy="51.2" r="0.84" fill="#8080a0" opacity="0.33"/><circle cx="63.9" cy="309.2" r="0.72" fill="#9a8060" opacity="0.31"/><circle cx="88.6" cy="190.0" r="0.99" fill="#8888b8" opacity="0.30"/><circle cx="104.4" cy="200.9" r="0.63" fill="#a08868" opacity="0.50"/><circle cx="34.3" cy="464.3" r="0.93" fill="#8888b8" opacity="0.30"/><circle cx="44.5" cy="614.0" r="1.05" fill="#a0a0a0" opacity="0.31"/><circle cx="961.1" cy="58.7" r="1.03" fill="#8080a0" opacity="0.35"/><circle cx="212.5" cy="47.4" r="0.94" fill="#9a8060" opacity="0.25"/><circle cx="712.8" cy="16.4" r="0.99" fill="#a08868" opacity="0.33"/><circle cx="1064.4" cy="96.8" r="1.04" fill="#a08868" opacity="0.27"/><circle cx="55.0" cy="655.0" r="1.08" fill="#9a8060" opacity="0.57"/><circle cx="75.2" cy="539.5" r="1.04" fill="#8080a0" opacity="0.40"/><circle cx="546.6" cy="83.5" r="0.85" fill="#8080a0" opacity="0.44"/><circle cx="60.8" cy="488.6" r="0.94" fill="#8080a0" opacity="0.53"/><circle cx="10.2" cy="340.3" r="0.98" fill="#a0a0a0" opacity="0.58"/><circle cx="1042.8" cy="63.7" r="0.87" fill="#8080a0" opacity="0.39"/><circle cx="420.0" cy="83.9" r="0.98" fill="#a0a0a0" opacity="0.54"/><circle cx="16.0" cy="383.0" r="0.88" fill="#a0a0a0" opacity="0.26"/><circle cx="91.4" cy="178.2" r="0.71" fill="#8080a0" opacity="0.34"/><circle cx="20.6" cy="81.8" r="1.08" fill="#9a8060" opacity="0.30"/><circle cx="58.6" cy="60.1" r="0.73" fill="#8080a0" opacity="0.27"/><circle cx="55.8" cy="697.1" r="1.00" fill="#8080a0" opacity="0.51"/><circle cx="597.4" cy="36.7" r="1.02" fill="#8080a0" opacity="0.40"/><circle cx="314.6" cy="11.9" r="1.00" fill="#a08868" opacity="0.53"/><circle cx="100.4" cy="419.7" r="1.00" fill="#8080a0" opacity="0.41"/><circle cx="14.0" cy="668.5" r="0.65" fill="#8080a0" opacity="0.47"/><circle cx="772.2" cy="22.1" r="0.61" fill="#a0a0a0" opacity="0.43"/><circle cx="139.9" cy="44.4" r="0.99" fill="#8888b8" opacity="0.54"/><circle cx="59.3" cy="436.2" r="0.75" fill="#9a8060" opacity="0.36"/><circle cx="32.2" cy="229.5" r="0.96" fill="#b09870" opacity="0.55"/><circle cx="331.3" cy="53.7" r="0.64" fill="#a0a0a0" opacity="0.39"/><circle cx="659.6" cy="75.1" r="0.64" fill="#8888b8" opacity="0.57"/><circle cx="67.4" cy="489.8" r="0.75" fill="#9a8060" opacity="0.27"/><circle cx="466.2" cy="61.4" r="0.95" fill="#8888b8" opacity="0.50"/><circle cx="784.6" cy="22.8" r="0.67" fill="#a0a0a0" opacity="0.29"/><circle cx="75.3" cy="117.4" r="0.90" fill="#b09870" opacity="0.39"/><circle cx="97.7" cy="675.2" r="1.05" fill="#a0a0a0" opacity="0.42"/><circle cx="1021.5" cy="76.6" r="0.77" fill="#b09870" opacity="0.34"/><circle cx="11.1" cy="546.6" r="0.62" fill="#b09870" opacity="0.26"/><circle cx="13.4" cy="483.9" r="0.98" fill="#a0a0a0" opacity="0.45"/><circle cx="686.7" cy="37.4" r="0.69" fill="#a0a0a0" opacity="0.30"/><circle cx="58.5" cy="641.5" r="1.02" fill="#8080a0" opacity="0.56"/><circle cx="695.5" cy="34.4" r="1.09" fill="#b09870" opacity="0.58"/><circle cx="68.2" cy="84.7" r="1.05" fill="#9a8060" opacity="0.26"/><circle cx="530.7" cy="37.6" r="0.92" fill="#8888b8" opacity="0.36"/><circle cx="73.0" cy="319.4" r="1.04" fill="#9a8060" opacity="0.48"/><circle cx="741.8" cy="89.4" r="0.62" fill="#b09870" opacity="0.46"/><circle cx="457.7" cy="66.1" r="0.75" fill="#b09870" opacity="0.43"/><circle cx="794.2" cy="72.7" r="0.90" fill="#a0a0a0" opacity="0.27"/><circle cx="679.0" cy="55.1" r="0.70" fill="#8888b8" opacity="0.36"/><circle cx="221.1" cy="16.8" r="1.03" fill="#b09870" opacity="0.50"/><circle cx="467.2" cy="21.8" r="0.90" fill="#8080a0" opacity="0.34"/><circle cx="98.5" cy="4.1" r="1.05" fill="#a08868" opacity="0.31"/><circle cx="769.2" cy="78.6" r="0.96" fill="#8888b8" opacity="0.50"/><circle cx="986.2" cy="37.6" r="0.82" fill="#9a8060" opacity="0.28"/><circle cx="74.2" cy="570.6" r="0.81" fill="#a0a0a0" opacity="0.36"/><circle cx="628.7" cy="89.1" r="0.69" fill="#a08868" opacity="0.42"/><circle cx="180.4" cy="52.5" r="0.79" fill="#a0a0a0" opacity="0.27"/><circle cx="107.1" cy="525.6" r="0.78" fill="#a08868" opacity="0.49"/><circle cx="6.8" cy="608.2" r="0.84" fill="#a0a0a0" opacity="0.43"/><circle cx="795.9" cy="2.8" r="0.67" fill="#a0a0a0" opacity="0.38"/><circle cx="194.5" cy="82.6" r="0.91" fill="#9a8060" opacity="0.53"/><circle cx="555.9" cy="14.2" r="0.87" fill="#b09870" opacity="0.58"/><circle cx="407" cy="8" r="3.2" fill="#e8e8ff" opacity="0.35"/><circle cx="407" cy="8" r="1.8" fill="#e8e8ff"/><circle cx="456" cy="10" r="1.9" fill="#c8c8e8" opacity="0.35"/><circle cx="456" cy="10" r="1.1" fill="#c8c8e8"/><circle cx="192" cy="29" r="2.4" fill="#d8d0ff" opacity="0.35"/><circle cx="192" cy="29" r="1.4" fill="#d8d0ff"/><circle cx="149" cy="31" r="1.9" fill="#e0a060" opacity="0.35"/><circle cx="149" cy="31" r="1.1" fill="#e0a060"/><circle cx="16" cy="33" r="1.9" fill="#d09060" opacity="0.35"/><circle cx="16" cy="33" r="1.1" fill="#d09060"/><circle cx="48" cy="37" r="1.6" fill="#c0b0a0" opacity="0.35"/><circle cx="48" cy="37" r="0.9" fill="#c0b0a0"/><circle cx="59" cy="23" r="1.6" fill="#b0b0c0" opacity="0.35"/><circle cx="59" cy="23" r="0.9" fill="#b0b0c0"/><circle cx="162" cy="61" r="2.4" fill="#a0a0ff" opacity="0.35"/><circle cx="162" cy="61" r="1.4" fill="#a0a0ff"/><circle cx="236" cy="60" r="2.2" fill="#f0d0e0" opacity="0.35"/><circle cx="236" cy="60" r="1.3" fill="#f0d0e0"/><circle cx="239" cy="60" r="2.1" fill="#f0d0e0" opacity="0.35"/><circle cx="239" cy="60" r="1.2" fill="#f0d0e0"/><circle cx="383" cy="51" r="2.6" fill="#e0d0ff" opacity="0.35"/><circle cx="383" cy="51" r="1.4" fill="#e0d0ff"/><circle cx="400" cy="51" r="2.6" fill="#f0c8c8" opacity="0.35"/><circle cx="400" cy="51" r="1.4" fill="#f0c8c8"/><circle cx="192" cy="73" r="2.1" fill="#f0c0c0" opacity="0.35"/><circle cx="192" cy="73" r="1.2" fill="#f0c0c0"/><circle cx="321" cy="81" r="2.2" fill="#e8d8ff" opacity="0.35"/><circle cx="321" cy="81" r="1.3" fill="#e8d8ff"/><circle cx="445" cy="79" r="1.9" fill="#d0c0ff" opacity="0.35"/><circle cx="445" cy="79" r="1.1" fill="#d0c0ff"/><circle cx="124" cy="81" r="1.9" fill="#d0c0ff" opacity="0.35"/><circle cx="124" cy="81" r="1.1" fill="#d0c0ff"/><circle cx="486" cy="50" r="1.8" fill="#c0c0e0" opacity="0.35"/><circle cx="486" cy="50" r="1.0" fill="#c0c0e0"/><circle cx="570" cy="29" r="3.8" fill="#ffe8d8" opacity="0.35"/><circle cx="570" cy="29" r="2.2" fill="#ffe8d8"/><circle cx="614" cy="45" r="2.9" fill="#d0d0ff" opacity="0.35"/><circle cx="614" cy="45" r="1.6" fill="#d0d0ff"/><circle cx="619" cy="42" r="2.4" fill="#d0d0ff" opacity="0.35"/><circle cx="619" cy="42" r="1.4" fill="#d0d0ff"/><circle cx="869" cy="27" r="3.8" fill="#fff4f0" opacity="0.35"/><circle cx="869" cy="27" r="2.2" fill="#fff4f0"/><circle cx="807" cy="37" r="2.4" fill="#e0d8ff" opacity="0.35"/><circle cx="807" cy="37" r="1.4" fill="#e0d8ff"/><circle cx="807" cy="57" r="2.4" fill="#e0d8ff" opacity="0.35"/><circle cx="807" cy="57" r="1.4" fill="#e0d8ff"/><circle cx="817" cy="59" r="2.6" fill="#d8d0ff" opacity="0.35"/><circle cx="817" cy="59" r="1.4" fill="#d8d0ff"/><circle cx="772" cy="78" r="2.7" fill="#ffd8e8" opacity="0.35"/><circle cx="772" cy="78" r="1.5" fill="#ffd8e8"/><circle cx="657" cy="97" r="3.5" fill="#e0e8ff" opacity="0.35"/><circle cx="657" cy="97" r="2.0" fill="#e0e8ff"/><circle cx="653" cy="77" r="2.1" fill="#c8c0ff" opacity="0.35"/><circle cx="653" cy="77" r="1.2" fill="#c8c0ff"/><circle cx="727" cy="37" r="2.1" fill="#e0a870" opacity="0.35"/><circle cx="727" cy="37" r="1.2" fill="#e0a870"/><circle cx="865" cy="4" r="2.1" fill="#c8c8ff" opacity="0.35"/><circle cx="865" cy="4" r="1.2" fill="#c8c8ff"/><circle cx="960" cy="23" r="2.1" fill="#e0b070" opacity="0.35"/><circle cx="960" cy="23" r="1.2" fill="#e0b070"/><circle cx="896" cy="40" r="1.9" fill="#e0c090" opacity="0.35"/><circle cx="896" cy="40" r="1.1" fill="#e0c090"/><circle cx="885" cy="82" r="2.1" fill="#e8b070" opacity="0.35"/><circle cx="885" cy="82" r="1.2" fill="#e8b070"/><circle cx="915" cy="80" r="1.9" fill="#d8c8e8" opacity="0.35"/><circle cx="915" cy="80" r="1.1" fill="#d8c8e8"/><circle cx="1013" cy="49" r="1.8" fill="#d0a870" opacity="0.35"/><circle cx="1013" cy="49" r="1.0" fill="#d0a870"/><circle cx="1017" cy="55" r="1.8" fill="#d0a870" opacity="0.35"/><circle cx="1017" cy="55" r="1.0" fill="#d0a870"/><circle cx="1055" cy="51" r="1.8" fill="#d0c0d0" opacity="0.35"/><circle cx="1055" cy="51" r="1.0" fill="#d0c0d0"/><circle cx="993" cy="3" r="1.8" fill="#d8c0b0" opacity="0.35"/><circle cx="993" cy="3" r="1.0" fill="#d8c0b0"/><circle cx="585" cy="80" r="1.9" fill="#e0a060" opacity="0.35"/><circle cx="585" cy="80" r="1.1" fill="#e0a060"/><circle cx="65" cy="361" r="2.6" fill="#d8c8ff" opacity="0.35"/><circle cx="65" cy="361" r="1.4" fill="#d8c8ff"/><circle cx="55" cy="516" r="2.6" fill="#d0c8ff" opacity="0.35"/><circle cx="55" cy="516" r="1.4" fill="#d0c8ff"/><circle cx="84" cy="639" r="4.8" fill="#e8f0ff" opacity="0.35"/><circle cx="84" cy="639" r="2.7" fill="#e8f0ff"/><circle cx="9" cy="692" r="2.4" fill="#e0c8ff" opacity="0.35"/><circle cx="9" cy="692" r="1.4" fill="#e0c8ff"/><circle cx="38" cy="702" r="2.1" fill="#d0c0f0" opacity="0.35"/><circle cx="38" cy="702" r="1.2" fill="#d0c0f0"/><circle cx="103" cy="320" r="1.9" fill="#c0c0e0" opacity="0.35"/><circle cx="103" cy="320" r="1.1" fill="#c0c0e0"/><circle cx="9" cy="280" r="1.8" fill="#c0c0c0" opacity="0.35"/><circle cx="9" cy="280" r="1.0" fill="#c0c0c0"/><circle cx="36" cy="482" r="1.8" fill="#c0b0a0" opacity="0.35"/><circle cx="36" cy="482" r="1.0" fill="#c0b0a0"/><circle cx="105" cy="658" r="1.9" fill="#e0d0ff" opacity="0.35"/><circle cx="105" cy="658" r="1.1" fill="#e0d0ff"/><circle cx="106" cy="427" r="1.8" fill="#c0c0d0" opacity="0.35"/><circle cx="106" cy="427" r="1.0" fill="#c0c0d0"/><circle cx="24" cy="110" r="2.4" fill="#e0c8ff" opacity="0.35"/><circle cx="24" cy="110" r="1.4" fill="#e0c8ff"/><circle cx="52" cy="255" r="1.9" fill="#c8c0e0" opacity="0.35"/><circle cx="52" cy="255" r="1.1" fill="#c8c0e0"/><circle cx="27" cy="316" r="1.8" fill="#c0b8a8" opacity="0.35"/><circle cx="27" cy="316" r="1.0" fill="#c0b8a8"/><circle cx="72" cy="578" r="1.9" fill="#c0b090" opacity="0.35"/><circle cx="72" cy="578" r="1.1" fill="#c0b090"/><circle cx="92" cy="398" r="1.8" fill="#b0a890" opacity="0.35"/><circle cx="92" cy="398" r="1.0" fill="#b0a890"/><filter id="gblur" x="-50%" y="-50%" width="200%" height="200%"><feGaussianBlur stdDeviation="1.6"/></filter><g filter="url(#gblur)"><ellipse cx="481" cy="81" rx="45" ry="7.5" fill="url(#gal)" opacity="0.85" transform="rotate(28 481 81)"/><ellipse cx="477" cy="79" rx="13" ry="3.5" fill="#fff" opacity="0.5" transform="rotate(28 477 79)"/><ellipse cx="486" cy="86" rx="7" ry="8" fill="url(#redg)"/></g><ellipse cx="60" cy="670" rx="12" ry="10" fill="url(#gal2)"/></svg>
<div class="a" style="left:197px;top:282px;width:1092px;height:743px;background:#737373;"></div>
<div class="a" style="left:197px;top:282px;width:1092px;height:25px;background:#727272;"></div>
<div class="a" style="left:1289px;top:282px;width:1px;height:744px;background:#383838;"></div>
<div class="a" style="left:197px;top:1025px;width:1093px;height:1px;background:#383838;"></div>
<div class="a" style="left:196px;top:281px;width:1093px;height:1px;background:#4c4c4c;"></div>
<div class="a" style="left:196px;top:281px;width:1px;height:744px;background:#4c4c4c;"></div>
<div class="a" style="left:221px;top:307px;width:1066px;height:716px;background:#000;"></div>
<svg style="left:203px;top:287px" width="14" height="14" viewBox="0 0 14 14"><rect x="0" y="0" width="14" height="14" fill="#c9d0fc"/><rect x="0" y="0" width="14" height="4" fill="#c0c8f8"/><rect x="2.5" y="5.5" width="9" height="6.5" fill="#6f6f6f"/></svg>
<svg style="left:1209px;top:282px" width="80" height="24" viewBox="0 0 80 24"><rect x="0" y="12" width="9" height="3" fill="#f2f2f2"/><rect x="21" y="10" width="9" height="2" fill="#f2f2f2"/><polygon points="21,17 30,17 25.5,12.5" fill="#f2f2f2"/><path d="M42,13.5 H51 M46.5,9 V18" stroke="#f2f2f2" stroke-width="3"/><path d="M64,10 L72,18 M72,10 L64,18" stroke="#f2f2f2" stroke-width="2.4"/></svg>
<div class="t" style="left:604px;top:287.3px;font-size:13px;color:#d8d8d8;font-weight:bold;letter-spacing:0.95px">Gray 1:6 star_mask1 | &lt;*new*&gt;</div>
<svg style="left:199px;top:307px" width="22" height="91" viewBox="0 0 22 91"><polygon points="0,21 22,0 22,91 0,91" fill="#585858"/><polyline points="0.5,91 0.5,21 22,0" fill="none" stroke="#444" stroke-width="1"/></svg>
<div class="t" style="left:204.7px;top:394px;font-size:12px;color:#e6e6e6;transform-origin:0 0;transform:rotate(-90deg);letter-spacing:0.2px">star_mask1</div>
<svg style="left:204.5px;top:952.5px" width="11" height="11" viewBox="0 0 11 11"><path d="M0.5,0.5 L10,10 M10,4.5 V10 H4.5 L10,4.5" stroke="#e4e4e4" stroke-width="0.9" fill="none"/></svg>
<svg style="left:204.5px;top:970.5px" width="11" height="11" viewBox="0 0 11 11"><rect x="3" y="3" width="5" height="5" fill="none" stroke="#e4e4e4" stroke-width="0.9"/><path d="M0,0 L3,3 M11,0 L8,3 M0,11 L3,8 M11,11 L8,8" stroke="#e4e4e4" stroke-width="0.9"/></svg>
<svg style="left:204.5px;top:988.5px" width="11" height="11" viewBox="0 0 11 11"><rect x="0.5" y="0.5" width="6" height="6" fill="none" stroke="#e4e4e4" stroke-width="0.9"/><path d="M6.5,3.5 H10.5 V10.5 H3.5 V6.5" stroke="#e4e4e4" stroke-width="0.9" fill="none"/></svg>
<svg style="left:204.5px;top:1006.5px" width="11" height="11" viewBox="0 0 11 11"><circle cx="5.5" cy="5.5" r="5" fill="none" stroke="#e4e4e4" stroke-width="0.9"/><circle cx="5.5" cy="5.5" r="2" fill="none" stroke="#e4e4e4" stroke-width="0.9"/></svg>
<svg style="left:221px;top:307px;overflow:hidden" width="1066" height="716" viewBox="0 0 1066 716"><defs><radialGradient id="sg"><stop offset="0" stop-color="#fff" stop-opacity="1"/><stop offset="0.25" stop-color="#fafafa" stop-opacity="0.97"/><stop offset="0.55" stop-color="#d0d0d0" stop-opacity="0.7"/><stop offset="0.8" stop-color="#888" stop-opacity="0.25"/><stop offset="1" stop-color="#444" stop-opacity="0"/></radialGradient><radialGradient id="fg"><stop offset="0" stop-color="#fff" stop-opacity="1"/><stop offset="0.5" stop-color="#fff" stop-opacity="0.5"/><stop offset="1" stop-color="#fff" stop-opacity="0"/></radialGradient></defs><circle cx="482.2" cy="400.8" r="1.77" fill="url(#fg)" opacity="0.33"/><circle cx="541.4" cy="420.6" r="1.81" fill="url(#fg)" opacity="0.16"/><circle cx="671.5" cy="567.8" r="1.64" fill="url(#fg)" opacity="0.14"/><circle cx="96.7" cy="579.7" r="1.43" fill="url(#fg)" opacity="0.28"/><circle cx="1047.0" cy="690.8" r="1.89" fill="url(#fg)" opacity="0.27"/><circle cx="167.9" cy="10.7" r="1.45" fill="url(#fg)" opacity="0.24"/><circle cx="202.8" cy="173.2" r="1.77" fill="url(#fg)" opacity="0.13"/><circle cx="469.6" cy="603.2" r="1.91" fill="url(#fg)" opacity="0.24"/><circle cx="532.8" cy="474.3" r="1.62" fill="url(#fg)" opacity="0.23"/><circle cx="1063.5" cy="712.9" r="1.97" fill="url(#fg)" opacity="0.31"/><circle cx="336.1" cy="164.4" r="1.46" fill="url(#fg)" opacity="0.19"/><circle cx="816.9" cy="286.7" r="1.71" fill="url(#fg)" opacity="0.31"/><circle cx="1021.3" cy="606.7" r="1.57" fill="url(#fg)" opacity="0.12"/><circle cx="970.3" cy="336.5" r="1.72" fill="url(#fg)" opacity="0.35"/><circle cx="77.9" cy="450.7" r="1.62" fill="url(#fg)" opacity="0.30"/><circle cx="92.9" cy="238.1" r="2.01" fill="url(#fg)" opacity="0.34"/><circle cx="125.8" cy="176.4" r="1.45" fill="url(#fg)" opacity="0.14"/><circle cx="849.6" cy="127.2" r="1.76" fill="url(#fg)" opacity="0.25"/><circle cx="203.3" cy="524.0" r="1.91" fill="url(#fg)" opacity="0.15"/><circle cx="124.2" cy="301.3" r="1.62" fill="url(#fg)" opacity="0.17"/><circle cx="1035.0" cy="575.2" r="2.11" fill="url(#fg)" opacity="0.19"/><circle cx="224.6" cy="282.3" r="1.91" fill="url(#fg)" opacity="0.32"/><circle cx="107.0" cy="708.3" r="1.61" fill="url(#fg)" opacity="0.17"/><circle cx="823.7" cy="235.5" r="1.46" fill="url(#fg)" opacity="0.19"/><circle cx="96.1" cy="417.2" r="1.88" fill="url(#fg)" opacity="0.18"/><circle cx="396.2" cy="324.5" r="1.79" fill="url(#fg)" opacity="0.34"/><circle cx="612.5" cy="620.4" r="1.52" fill="url(#fg)" opacity="0.16"/><circle cx="968.4" cy="585.5" r="1.55" fill="url(#fg)" opacity="0.18"/><circle cx="788.2" cy="673.3" r="2.16" fill="url(#fg)" opacity="0.17"/><circle cx="940.4" cy="432.1" r="1.48" fill="url(#fg)" opacity="0.22"/><circle cx="41.3" cy="689.3" r="1.96" fill="url(#fg)" opacity="0.17"/><circle cx="273.9" cy="589.8" r="1.63" fill="url(#fg)" opacity="0.26"/><circle cx="187.0" cy="515.8" r="1.58" fill="url(#fg)" opacity="0.14"/><circle cx="596.3" cy="610.3" r="1.62" fill="url(#fg)" opacity="0.26"/><circle cx="977.9" cy="146.0" r="1.62" fill="url(#fg)" opacity="0.12"/><circle cx="475.1" cy="43.3" r="1.70" fill="url(#fg)" opacity="0.16"/><circle cx="609.9" cy="94.2" r="2.11" fill="url(#fg)" opacity="0.20"/><circle cx="1045.2" cy="470.4" r="1.87" fill="url(#fg)" opacity="0.28"/><circle cx="149.6" cy="25.1" r="2.13" fill="url(#fg)" opacity="0.12"/><circle cx="747.2" cy="689.3" r="1.91" fill="url(#fg)" opacity="0.12"/><circle cx="514.1" cy="523.0" r="2.20" fill="url(#fg)" opacity="0.19"/><circle cx="80.2" cy="391.0" r="2.12" fill="url(#fg)" opacity="0.29"/><circle cx="785.7" cy="503.8" r="2.13" fill="url(#fg)" opacity="0.30"/><circle cx="375.1" cy="490.6" r="2.10" fill="url(#fg)" opacity="0.33"/><circle cx="444.7" cy="566.0" r="1.86" fill="url(#fg)" opacity="0.32"/><circle cx="666.2" cy="273.8" r="1.89" fill="url(#fg)" opacity="0.25"/><circle cx="85.5" cy="457.8" r="2.10" fill="url(#fg)" opacity="0.35"/><circle cx="776.3" cy="278.1" r="1.86" fill="url(#fg)" opacity="0.29"/><circle cx="469.6" cy="600.3" r="2.00" fill="url(#fg)" opacity="0.14"/><circle cx="31.8" cy="430.5" r="1.58" fill="url(#fg)" opacity="0.23"/><circle cx="744.4" cy="356.0" r="2.14" fill="url(#fg)" opacity="0.26"/><circle cx="272.7" cy="8.1" r="1.94" fill="url(#fg)" opacity="0.19"/><circle cx="215.9" cy="121.4" r="1.93" fill="url(#fg)" opacity="0.33"/><circle cx="471.1" cy="638.5" r="1.93" fill="url(#fg)" opacity="0.20"/><circle cx="211.6" cy="308.5" r="2.13" fill="url(#fg)" opacity="0.31"/><circle cx="938.4" cy="275.2" r="1.65" fill="url(#fg)" opacity="0.25"/><circle cx="145.2" cy="355.5" r="2.08" fill="url(#fg)" opacity="0.31"/><circle cx="758.2" cy="680.2" r="1.54" fill="url(#fg)" opacity="0.18"/><circle cx="480.4" cy="197.0" r="1.73" fill="url(#fg)" opacity="0.17"/><circle cx="667.0" cy="353.6" r="2.07" fill="url(#fg)" opacity="0.19"/><circle cx="1046.9" cy="324.0" r="1.43" fill="url(#fg)" opacity="0.14"/><circle cx="930.4" cy="29.7" r="1.86" fill="url(#fg)" opacity="0.28"/><circle cx="329.4" cy="566.7" r="1.51" fill="url(#fg)" opacity="0.12"/><circle cx="484.9" cy="17.7" r="1.59" fill="url(#fg)" opacity="0.31"/><circle cx="150.2" cy="33.6" r="1.76" fill="url(#fg)" opacity="0.26"/><circle cx="671.5" cy="469.0" r="2.17" fill="url(#fg)" opacity="0.31"/><circle cx="729.7" cy="142.7" r="1.54" fill="url(#fg)" opacity="0.23"/><circle cx="11.5" cy="338.1" r="1.54" fill="url(#fg)" opacity="0.28"/><circle cx="290.3" cy="247.5" r="1.82" fill="url(#fg)" opacity="0.28"/><circle cx="655.0" cy="541.4" r="2.03" fill="url(#fg)" opacity="0.21"/><circle cx="966.0" cy="62.4" r="1.98" fill="url(#fg)" opacity="0.33"/><circle cx="138.5" cy="324.7" r="2.13" fill="url(#fg)" opacity="0.26"/><circle cx="401.7" cy="407.3" r="2.04" fill="url(#fg)" opacity="0.32"/><circle cx="1006.6" cy="332.0" r="1.56" fill="url(#fg)" opacity="0.27"/><circle cx="769.6" cy="585.9" r="1.97" fill="url(#fg)" opacity="0.27"/><circle cx="227.4" cy="644.4" r="2.18" fill="url(#fg)" opacity="0.35"/><circle cx="572.4" cy="566.2" r="2.13" fill="url(#fg)" opacity="0.19"/><circle cx="912.3" cy="249.5" r="1.75" fill="url(#fg)" opacity="0.14"/><circle cx="586.6" cy="550.1" r="1.42" fill="url(#fg)" opacity="0.23"/><circle cx="862.5" cy="45.9" r="1.54" fill="url(#fg)" opacity="0.30"/><circle cx="357.1" cy="564.1" r="1.52" fill="url(#fg)" opacity="0.15"/><circle cx="550.6" cy="518.1" r="1.95" fill="url(#fg)" opacity="0.31"/><circle cx="1008.2" cy="352.7" r="1.47" fill="url(#fg)" opacity="0.34"/><circle cx="236.0" cy="377.1" r="1.98" fill="url(#fg)" opacity="0.19"/><circle cx="681.0" cy="374.3" r="1.85" fill="url(#fg)" opacity="0.31"/><circle cx="332.3" cy="273.0" r="2.12" fill="url(#fg)" opacity="0.31"/><circle cx="222.0" cy="609.2" r="1.82" fill="url(#fg)" opacity="0.34"/><circle cx="610.8" cy="143.9" r="1.80" fill="url(#fg)" opacity="0.24"/><circle cx="645.2" cy="19.9" r="1.81" fill="url(#fg)" opacity="0.34"/><circle cx="427.0" cy="573.6" r="1.79" fill="url(#fg)" opacity="0.25"/><circle cx="736.6" cy="47.2" r="1.73" fill="url(#fg)" opacity="0.24"/><circle cx="1020.0" cy="661.2" r="1.78" fill="url(#fg)" opacity="0.18"/><circle cx="135.3" cy="310.5" r="2.12" fill="url(#fg)" opacity="0.31"/><circle cx="508.0" cy="227.1" r="1.89" fill="url(#fg)" opacity="0.16"/><circle cx="986.3" cy="92.7" r="1.42" fill="url(#fg)" opacity="0.30"/><circle cx="206.9" cy="162.7" r="1.66" fill="url(#fg)" opacity="0.28"/><circle cx="378.8" cy="443.8" r="1.98" fill="url(#fg)" opacity="0.14"/><circle cx="130.9" cy="365.5" r="1.56" fill="url(#fg)" opacity="0.18"/><circle cx="565.4" cy="312.7" r="1.73" fill="url(#fg)" opacity="0.21"/><circle cx="564.3" cy="114.4" r="1.91" fill="url(#fg)" opacity="0.17"/><circle cx="680.6" cy="379.2" r="1.89" fill="url(#fg)" opacity="0.32"/><circle cx="913.3" cy="166.6" r="2.05" fill="url(#fg)" opacity="0.29"/><circle cx="962.3" cy="226.2" r="2.14" fill="url(#fg)" opacity="0.19"/><circle cx="232.5" cy="714.8" r="1.51" fill="url(#fg)" opacity="0.32"/><circle cx="255.1" cy="520.2" r="1.48" fill="url(#fg)" opacity="0.18"/><circle cx="887.1" cy="301.9" r="1.50" fill="url(#fg)" opacity="0.30"/><circle cx="429.4" cy="490.6" r="1.56" fill="url(#fg)" opacity="0.12"/><circle cx="727.4" cy="652.5" r="1.49" fill="url(#fg)" opacity="0.34"/><circle cx="539.1" cy="542.8" r="1.95" fill="url(#fg)" opacity="0.24"/><circle cx="201.5" cy="50.5" r="1.43" fill="url(#fg)" opacity="0.14"/><circle cx="588.1" cy="368.6" r="1.52" fill="url(#fg)" opacity="0.25"/><circle cx="196.7" cy="146.0" r="2.19" fill="url(#fg)" opacity="0.31"/><circle cx="988.1" cy="68.2" r="2.16" fill="url(#fg)" opacity="0.13"/><circle cx="492.6" cy="547.5" r="1.77" fill="url(#fg)" opacity="0.20"/><circle cx="549.3" cy="307.9" r="1.41" fill="url(#fg)" opacity="0.26"/><circle cx="747.3" cy="604.5" r="1.76" fill="url(#fg)" opacity="0.16"/><circle cx="788.1" cy="290.2" r="1.53" fill="url(#fg)" opacity="0.16"/><circle cx="546.4" cy="11.0" r="2.04" fill="url(#fg)" opacity="0.33"/><circle cx="751.2" cy="616.3" r="1.72" fill="url(#fg)" opacity="0.26"/><circle cx="639.2" cy="361.1" r="2.04" fill="url(#fg)" opacity="0.35"/><circle cx="275.3" cy="652.5" r="2.02" fill="url(#fg)" opacity="0.29"/><circle cx="868.4" cy="290.4" r="2.10" fill="url(#fg)" opacity="0.33"/><circle cx="740.7" cy="549.4" r="1.72" fill="url(#fg)" opacity="0.30"/><circle cx="770.3" cy="50.5" r="1.78" fill="url(#fg)" opacity="0.20"/><circle cx="11.3" cy="254.6" r="1.90" fill="url(#fg)" opacity="0.27"/><circle cx="247.4" cy="676.4" r="1.67" fill="url(#fg)" opacity="0.27"/><circle cx="703.3" cy="407.8" r="1.71" fill="url(#fg)" opacity="0.24"/><circle cx="1065.9" cy="459.9" r="2.01" fill="url(#fg)" opacity="0.28"/><circle cx="1044.8" cy="16.3" r="1.99" fill="url(#fg)" opacity="0.26"/><circle cx="273.6" cy="287.5" r="1.56" fill="url(#fg)" opacity="0.13"/><circle cx="400.5" cy="70.5" r="2.12" fill="url(#fg)" opacity="0.18"/><circle cx="586.4" cy="363.6" r="1.85" fill="url(#fg)" opacity="0.34"/><circle cx="1060.8" cy="456.8" r="1.46" fill="url(#fg)" opacity="0.31"/><circle cx="637.0" cy="543.6" r="2.14" fill="url(#fg)" opacity="0.13"/><circle cx="170.5" cy="337.8" r="1.80" fill="url(#fg)" opacity="0.16"/><circle cx="651.5" cy="41.9" r="1.74" fill="url(#fg)" opacity="0.34"/><circle cx="561.5" cy="428.0" r="1.63" fill="url(#fg)" opacity="0.20"/><circle cx="698.3" cy="401.4" r="1.97" fill="url(#fg)" opacity="0.19"/><circle cx="315.6" cy="10.0" r="1.43" fill="url(#fg)" opacity="0.18"/><circle cx="166.9" cy="540.3" r="2.12" fill="url(#fg)" opacity="0.21"/><circle cx="797.8" cy="35.9" r="2.16" fill="url(#fg)" opacity="0.35"/><circle cx="78.4" cy="648.4" r="1.78" fill="url(#fg)" opacity="0.22"/><circle cx="1037.4" cy="174.5" r="2.15" fill="url(#fg)" opacity="0.24"/><circle cx="770.4" cy="335.3" r="2.05" fill="url(#fg)" opacity="0.35"/><circle cx="643.5" cy="82.4" r="1.76" fill="url(#fg)" opacity="0.26"/><circle cx="217.1" cy="37.3" r="1.50" fill="url(#fg)" opacity="0.24"/><circle cx="472.1" cy="478.2" r="1.61" fill="url(#fg)" opacity="0.22"/><circle cx="620.7" cy="300.4" r="1.82" fill="url(#fg)" opacity="0.30"/><circle cx="1063.5" cy="682.1" r="1.59" fill="url(#fg)" opacity="0.29"/><circle cx="121.4" cy="639.2" r="1.90" fill="url(#fg)" opacity="0.30"/><circle cx="382.9" cy="194.4" r="1.85" fill="url(#fg)" opacity="0.28"/><circle cx="630.7" cy="453.3" r="1.55" fill="url(#fg)" opacity="0.29"/><circle cx="265.4" cy="701.5" r="2.10" fill="url(#fg)" opacity="0.33"/><circle cx="42.1" cy="43.5" r="1.74" fill="url(#fg)" opacity="0.18"/><circle cx="664.5" cy="73.4" r="1.46" fill="url(#fg)" opacity="0.24"/><circle cx="92.1" cy="484.2" r="1.90" fill="url(#fg)" opacity="0.25"/><circle cx="397.8" cy="342.6" r="1.67" fill="url(#fg)" opacity="0.17"/><circle cx="794.0" cy="600.4" r="1.50" fill="url(#fg)" opacity="0.14"/><circle cx="862.6" cy="446.6" r="1.57" fill="url(#fg)" opacity="0.30"/><circle cx="452.4" cy="184.8" r="1.70" fill="url(#fg)" opacity="0.31"/><circle cx="696.8" cy="708.3" r="1.84" fill="url(#fg)" opacity="0.19"/><circle cx="795.3" cy="659.3" r="1.70" fill="url(#fg)" opacity="0.22"/><circle cx="103.4" cy="626.6" r="1.47" fill="url(#fg)" opacity="0.14"/><circle cx="601.5" cy="347.2" r="1.64" fill="url(#fg)" opacity="0.28"/><circle cx="826.7" cy="54.5" r="1.93" fill="url(#fg)" opacity="0.17"/><circle cx="87.1" cy="217.5" r="1.96" fill="url(#fg)" opacity="0.29"/><circle cx="301.6" cy="102.3" r="1.98" fill="url(#fg)" opacity="0.20"/><circle cx="390.6" cy="84.0" r="1.86" fill="url(#fg)" opacity="0.28"/><circle cx="979.2" cy="673.0" r="1.75" fill="url(#fg)" opacity="0.33"/><circle cx="856.1" cy="218.2" r="1.72" fill="url(#fg)" opacity="0.19"/><circle cx="996.4" cy="640.6" r="1.69" fill="url(#fg)" opacity="0.18"/><circle cx="389.7" cy="260.1" r="1.71" fill="url(#fg)" opacity="0.21"/><circle cx="207.8" cy="403.7" r="1.83" fill="url(#fg)" opacity="0.30"/><circle cx="891.6" cy="402.9" r="2.01" fill="url(#fg)" opacity="0.16"/><circle cx="939.0" cy="201.5" r="1.81" fill="url(#fg)" opacity="0.13"/><circle cx="580.1" cy="406.3" r="1.92" fill="url(#fg)" opacity="0.34"/><circle cx="857.4" cy="45.9" r="2.03" fill="url(#fg)" opacity="0.25"/><circle cx="89.6" cy="58.5" r="2.12" fill="url(#fg)" opacity="0.29"/><circle cx="90.3" cy="454.0" r="2.00" fill="url(#fg)" opacity="0.15"/><circle cx="691.8" cy="175.7" r="2.01" fill="url(#fg)" opacity="0.17"/><circle cx="556.0" cy="547.5" r="1.67" fill="url(#fg)" opacity="0.21"/><circle cx="1032.2" cy="481.4" r="1.83" fill="url(#fg)" opacity="0.23"/><circle cx="768.5" cy="507.0" r="1.73" fill="url(#fg)" opacity="0.33"/><circle cx="880.8" cy="477.4" r="2.04" fill="url(#fg)" opacity="0.32"/><circle cx="888.9" cy="636.3" r="1.91" fill="url(#fg)" opacity="0.34"/><circle cx="558.4" cy="508.4" r="1.74" fill="url(#fg)" opacity="0.30"/><circle cx="448.2" cy="104.7" r="2.19" fill="url(#fg)" opacity="0.29"/><circle cx="400.3" cy="120.0" r="1.74" fill="url(#fg)" opacity="0.17"/><circle cx="311.3" cy="694.3" r="1.65" fill="url(#fg)" opacity="0.13"/><circle cx="122.4" cy="464.0" r="1.54" fill="url(#fg)" opacity="0.30"/><circle cx="66.5" cy="328.5" r="2.13" fill="url(#fg)" opacity="0.25"/><circle cx="38.8" cy="77.8" r="1.57" fill="url(#fg)" opacity="0.16"/><circle cx="250.9" cy="513.5" r="1.58" fill="url(#fg)" opacity="0.26"/><circle cx="197.2" cy="201.2" r="2.01" fill="url(#fg)" opacity="0.16"/><circle cx="332.3" cy="392.5" r="1.78" fill="url(#fg)" opacity="0.31"/><circle cx="277.7" cy="635.4" r="1.67" fill="url(#fg)" opacity="0.33"/><circle cx="583.5" cy="685.2" r="1.58" fill="url(#fg)" opacity="0.23"/><circle cx="53.0" cy="678.4" r="1.71" fill="url(#fg)" opacity="0.30"/><circle cx="562.4" cy="369.3" r="2.19" fill="url(#fg)" opacity="0.18"/><circle cx="701.0" cy="170.1" r="1.78" fill="url(#fg)" opacity="0.12"/><circle cx="396.1" cy="570.5" r="1.88" fill="url(#fg)" opacity="0.28"/><circle cx="167.7" cy="112.3" r="1.61" fill="url(#fg)" opacity="0.19"/><circle cx="926.6" cy="369.5" r="2.19" fill="url(#fg)" opacity="0.27"/><circle cx="284.1" cy="382.8" r="2.02" fill="url(#fg)" opacity="0.15"/><circle cx="1.5" cy="588.1" r="2.06" fill="url(#fg)" opacity="0.31"/><circle cx="87.9" cy="193.3" r="1.48" fill="url(#fg)" opacity="0.28"/><circle cx="511.8" cy="335.6" r="1.87" fill="url(#fg)" opacity="0.34"/><circle cx="913.9" cy="217.4" r="1.73" fill="url(#fg)" opacity="0.30"/><circle cx="977.3" cy="65.1" r="1.57" fill="url(#fg)" opacity="0.31"/><circle cx="579.2" cy="376.4" r="2.07" fill="url(#fg)" opacity="0.16"/><circle cx="332.0" cy="222.5" r="1.64" fill="url(#fg)" opacity="0.14"/><circle cx="498.1" cy="512.0" r="1.95" fill="url(#fg)" opacity="0.20"/><circle cx="112.7" cy="282.3" r="2.17" fill="url(#fg)" opacity="0.23"/><circle cx="884.5" cy="468.2" r="1.70" fill="url(#fg)" opacity="0.12"/><circle cx="756.9" cy="170.0" r="1.77" fill="url(#fg)" opacity="0.25"/><circle cx="11.2" cy="710.0" r="1.57" fill="url(#fg)" opacity="0.30"/><circle cx="656.7" cy="207.9" r="1.83" fill="url(#fg)" opacity="0.21"/><circle cx="317.9" cy="241.6" r="1.93" fill="url(#fg)" opacity="0.21"/><circle cx="273.4" cy="143.2" r="1.66" fill="url(#fg)" opacity="0.29"/><circle cx="1007.4" cy="403.0" r="1.67" fill="url(#fg)" opacity="0.29"/><circle cx="881.5" cy="66.1" r="1.48" fill="url(#fg)" opacity="0.15"/><circle cx="722.4" cy="507.1" r="1.72" fill="url(#fg)" opacity="0.16"/><circle cx="892.2" cy="424.4" r="1.58" fill="url(#fg)" opacity="0.14"/><circle cx="167.5" cy="88.9" r="1.46" fill="url(#fg)" opacity="0.21"/><circle cx="981.4" cy="305.7" r="1.92" fill="url(#fg)" opacity="0.24"/><circle cx="817.5" cy="587.9" r="1.67" fill="url(#fg)" opacity="0.21"/><circle cx="439.3" cy="11.0" r="1.96" fill="url(#fg)" opacity="0.21"/><circle cx="1046.8" cy="565.4" r="1.89" fill="url(#fg)" opacity="0.27"/><circle cx="19.8" cy="237.0" r="1.92" fill="url(#fg)" opacity="0.20"/><circle cx="113.3" cy="270.4" r="2.03" fill="url(#fg)" opacity="0.24"/><circle cx="879.7" cy="437.8" r="2.01" fill="url(#fg)" opacity="0.16"/><circle cx="962.6" cy="392.5" r="1.80" fill="url(#fg)" opacity="0.20"/><circle cx="151.1" cy="510.8" r="1.81" fill="url(#fg)" opacity="0.35"/><circle cx="762.6" cy="598.2" r="2.16" fill="url(#fg)" opacity="0.17"/><circle cx="668.5" cy="141.7" r="1.60" fill="url(#fg)" opacity="0.14"/><circle cx="614.5" cy="499.1" r="2.14" fill="url(#fg)" opacity="0.20"/><circle cx="385.0" cy="331.5" r="2.18" fill="url(#fg)" opacity="0.15"/><circle cx="144.6" cy="647.3" r="1.85" fill="url(#fg)" opacity="0.24"/><circle cx="597.3" cy="189.3" r="2.19" fill="url(#fg)" opacity="0.33"/><circle cx="871.5" cy="430.7" r="2.06" fill="url(#fg)" opacity="0.15"/><circle cx="307.6" cy="642.3" r="1.86" fill="url(#fg)" opacity="0.18"/><circle cx="885.6" cy="132.9" r="1.46" fill="url(#fg)" opacity="0.25"/><circle cx="34.1" cy="128.9" r="2.15" fill="url(#fg)" opacity="0.35"/><circle cx="701.8" cy="220.3" r="1.99" fill="url(#fg)" opacity="0.27"/><circle cx="406.8" cy="423.8" r="1.41" fill="url(#fg)" opacity="0.30"/><circle cx="212.7" cy="335.1" r="1.71" fill="url(#fg)" opacity="0.15"/><circle cx="607.1" cy="124.4" r="1.61" fill="url(#fg)" opacity="0.24"/><circle cx="605.5" cy="237.8" r="1.43" fill="url(#fg)" opacity="0.27"/><circle cx="715.3" cy="103.6" r="1.88" fill="url(#fg)" opacity="0.34"/><circle cx="500.9" cy="294.6" r="1.95" fill="url(#fg)" opacity="0.26"/><circle cx="808.1" cy="538.2" r="2.20" fill="url(#fg)" opacity="0.23"/><circle cx="893.6" cy="612.2" r="1.75" fill="url(#fg)" opacity="0.21"/><circle cx="603.3" cy="648.2" r="1.82" fill="url(#fg)" opacity="0.24"/><circle cx="460.8" cy="647.5" r="1.44" fill="url(#fg)" opacity="0.19"/><circle cx="773.5" cy="644.5" r="1.88" fill="url(#fg)" opacity="0.29"/><circle cx="801.5" cy="218.2" r="1.46" fill="url(#fg)" opacity="0.26"/><circle cx="132.7" cy="320.0" r="1.72" fill="url(#fg)" opacity="0.24"/><circle cx="55.4" cy="497.6" r="1.59" fill="url(#fg)" opacity="0.24"/><circle cx="326.5" cy="283.2" r="1.45" fill="url(#fg)" opacity="0.17"/><circle cx="971.4" cy="692.0" r="2.09" fill="url(#fg)" opacity="0.27"/><circle cx="449.2" cy="576.6" r="2.00" fill="url(#fg)" opacity="0.17"/><circle cx="604.2" cy="646.8" r="2.03" fill="url(#fg)" opacity="0.14"/><circle cx="132.0" cy="384.9" r="1.40" fill="url(#fg)" opacity="0.34"/><circle cx="260.0" cy="214.3" r="1.45" fill="url(#fg)" opacity="0.19"/><circle cx="954.2" cy="583.9" r="1.69" fill="url(#fg)" opacity="0.21"/><circle cx="624.2" cy="32.9" r="2.12" fill="url(#fg)" opacity="0.13"/><circle cx="328.2" cy="356.9" r="2.18" fill="url(#fg)" opacity="0.33"/><circle cx="503.8" cy="147.9" r="2.14" fill="url(#fg)" opacity="0.19"/><circle cx="956.0" cy="140.0" r="1.68" fill="url(#fg)" opacity="0.31"/><circle cx="503.7" cy="123.1" r="2.20" fill="url(#fg)" opacity="0.32"/><circle cx="215.3" cy="452.8" r="2.10" fill="url(#fg)" opacity="0.16"/><circle cx="53.3" cy="76.0" r="1.65" fill="url(#fg)" opacity="0.29"/><circle cx="959.7" cy="622.6" r="1.51" fill="url(#fg)" opacity="0.28"/><circle cx="741.9" cy="671.5" r="1.46" fill="url(#fg)" opacity="0.22"/><circle cx="238.0" cy="219.9" r="1.56" fill="url(#fg)" opacity="0.28"/><circle cx="193.0" cy="168.6" r="2.03" fill="url(#fg)" opacity="0.27"/><circle cx="397.1" cy="474.0" r="1.87" fill="url(#fg)" opacity="0.32"/><circle cx="244.1" cy="215.5" r="1.93" fill="url(#fg)" opacity="0.33"/><circle cx="295.1" cy="458.2" r="2.19" fill="url(#fg)" opacity="0.14"/><circle cx="469.4" cy="378.3" r="1.44" fill="url(#fg)" opacity="0.24"/><circle cx="639.3" cy="203.7" r="2.04" fill="url(#fg)" opacity="0.18"/><circle cx="92.9" cy="204.2" r="1.60" fill="url(#fg)" opacity="0.29"/><circle cx="297.5" cy="392.4" r="2.12" fill="url(#fg)" opacity="0.16"/><circle cx="1052.9" cy="24.1" r="2.00" fill="url(#fg)" opacity="0.23"/><circle cx="410.1" cy="665.4" r="1.54" fill="url(#fg)" opacity="0.23"/><circle cx="592.7" cy="461.8" r="1.93" fill="url(#fg)" opacity="0.20"/><circle cx="834.7" cy="370.0" r="2.08" fill="url(#fg)" opacity="0.24"/><circle cx="729.4" cy="372.7" r="1.54" fill="url(#fg)" opacity="0.34"/><circle cx="831.1" cy="118.3" r="1.59" fill="url(#fg)" opacity="0.26"/><circle cx="469.5" cy="553.5" r="2.03" fill="url(#fg)" opacity="0.30"/><circle cx="251.5" cy="350.2" r="1.86" fill="url(#fg)" opacity="0.17"/><circle cx="531.9" cy="25.3" r="1.97" fill="url(#fg)" opacity="0.26"/><circle cx="610.4" cy="625.0" r="1.52" fill="url(#fg)" opacity="0.16"/><circle cx="19.0" cy="355.2" r="1.75" fill="url(#fg)" opacity="0.22"/><circle cx="280.3" cy="571.7" r="2.13" fill="url(#fg)" opacity="0.14"/><circle cx="606.4" cy="389.0" r="1.59" fill="url(#fg)" opacity="0.30"/><circle cx="155.9" cy="222.7" r="1.65" fill="url(#fg)" opacity="0.13"/><circle cx="662.2" cy="376.2" r="1.87" fill="url(#fg)" opacity="0.18"/><circle cx="94.3" cy="587.5" r="1.60" fill="url(#fg)" opacity="0.16"/><circle cx="170.4" cy="494.5" r="2.03" fill="url(#fg)" opacity="0.31"/><circle cx="65.2" cy="294.0" r="1.57" fill="url(#fg)" opacity="0.20"/><circle cx="1034.6" cy="30.2" r="2.01" fill="url(#fg)" opacity="0.23"/><circle cx="1051.3" cy="103.5" r="2.00" fill="url(#fg)" opacity="0.22"/><circle cx="41.8" cy="172.3" r="1.51" fill="url(#fg)" opacity="0.32"/><circle cx="418.9" cy="213.4" r="1.46" fill="url(#fg)" opacity="0.22"/><circle cx="36.5" cy="713.2" r="1.99" fill="url(#fg)" opacity="0.30"/><circle cx="245.0" cy="181.3" r="1.59" fill="url(#fg)" opacity="0.25"/><circle cx="492.0" cy="667.6" r="1.67" fill="url(#fg)" opacity="0.20"/><circle cx="1046.0" cy="437.4" r="1.72" fill="url(#fg)" opacity="0.13"/><circle cx="692.7" cy="41.9" r="1.96" fill="url(#fg)" opacity="0.20"/><circle cx="921.5" cy="422.9" r="1.77" fill="url(#fg)" opacity="0.32"/><circle cx="418.9" cy="603.6" r="2.03" fill="url(#fg)" opacity="0.21"/><circle cx="229.6" cy="248.7" r="1.84" fill="url(#fg)" opacity="0.16"/><circle cx="174.7" cy="145.8" r="1.77" fill="url(#fg)" opacity="0.17"/><circle cx="328.9" cy="320.1" r="1.94" fill="url(#fg)" opacity="0.35"/><circle cx="919.7" cy="146.5" r="1.46" fill="url(#fg)" opacity="0.21"/><circle cx="737.0" cy="259.8" r="1.41" fill="url(#fg)" opacity="0.18"/><circle cx="194.1" cy="187.8" r="2.14" fill="url(#fg)" opacity="0.21"/><circle cx="762.4" cy="192.3" r="1.52" fill="url(#fg)" opacity="0.20"/><circle cx="998.4" cy="257.6" r="1.98" fill="url(#fg)" opacity="0.30"/><circle cx="966.9" cy="14.6" r="1.71" fill="url(#fg)" opacity="0.19"/><circle cx="88.7" cy="631.8" r="2.02" fill="url(#fg)" opacity="0.19"/><circle cx="553.6" cy="39.3" r="1.59" fill="url(#fg)" opacity="0.21"/><circle cx="43.5" cy="108.0" r="1.43" fill="url(#fg)" opacity="0.26"/><circle cx="332.9" cy="303.6" r="1.51" fill="url(#fg)" opacity="0.25"/><circle cx="753.2" cy="186.4" r="1.93" fill="url(#fg)" opacity="0.29"/><circle cx="156.9" cy="146.6" r="1.97" fill="url(#fg)" opacity="0.18"/><circle cx="432.1" cy="276.7" r="1.58" fill="url(#fg)" opacity="0.32"/><circle cx="311.4" cy="247.0" r="1.43" fill="url(#fg)" opacity="0.17"/><circle cx="26.1" cy="451.4" r="2.05" fill="url(#fg)" opacity="0.25"/><circle cx="1040.0" cy="213.4" r="2.14" fill="url(#fg)" opacity="0.27"/><circle cx="230.5" cy="493.5" r="2.16" fill="url(#fg)" opacity="0.27"/><circle cx="925.7" cy="168.0" r="1.47" fill="url(#fg)" opacity="0.27"/><circle cx="455.9" cy="281.0" r="1.71" fill="url(#fg)" opacity="0.13"/><circle cx="349.8" cy="355.9" r="1.53" fill="url(#fg)" opacity="0.18"/><circle cx="429.0" cy="340.3" r="1.93" fill="url(#fg)" opacity="0.16"/><circle cx="255.6" cy="66.6" r="1.74" fill="url(#fg)" opacity="0.20"/><circle cx="160.7" cy="417.2" r="1.84" fill="url(#fg)" opacity="0.28"/><circle cx="746.4" cy="16.5" r="1.69" fill="url(#fg)" opacity="0.21"/><circle cx="67.1" cy="289.5" r="1.80" fill="url(#fg)" opacity="0.13"/><circle cx="624.6" cy="335.8" r="1.60" fill="url(#fg)" opacity="0.19"/><circle cx="25.1" cy="248.5" r="1.85" fill="url(#fg)" opacity="0.33"/><circle cx="279.2" cy="478.3" r="1.78" fill="url(#fg)" opacity="0.16"/><circle cx="655.9" cy="683.5" r="1.86" fill="url(#fg)" opacity="0.20"/><circle cx="1004.6" cy="552.4" r="1.90" fill="url(#fg)" opacity="0.26"/><circle cx="438.1" cy="297.5" r="2.06" fill="url(#fg)" opacity="0.18"/><circle cx="937.8" cy="273.4" r="1.43" fill="url(#fg)" opacity="0.33"/><circle cx="144.8" cy="363.1" r="1.69" fill="url(#fg)" opacity="0.19"/><circle cx="1041.5" cy="107.3" r="1.58" fill="url(#fg)" opacity="0.16"/><circle cx="725.1" cy="167.9" r="1.84" fill="url(#fg)" opacity="0.12"/><circle cx="419.9" cy="171.4" r="1.92" fill="url(#fg)" opacity="0.23"/><circle cx="584.3" cy="447.1" r="2.06" fill="url(#fg)" opacity="0.25"/><circle cx="1032.8" cy="238.8" r="2.11" fill="url(#fg)" opacity="0.20"/><circle cx="334.0" cy="512.6" r="1.95" fill="url(#fg)" opacity="0.28"/><circle cx="1027.5" cy="590.3" r="1.90" fill="url(#fg)" opacity="0.16"/><circle cx="523.0" cy="403.7" r="1.63" fill="url(#fg)" opacity="0.20"/><circle cx="798.4" cy="382.3" r="1.60" fill="url(#fg)" opacity="0.17"/><circle cx="346.4" cy="127.3" r="1.50" fill="url(#fg)" opacity="0.24"/><circle cx="67.4" cy="49.2" r="1.96" fill="url(#fg)" opacity="0.14"/><circle cx="120.2" cy="323.3" r="1.78" fill="url(#fg)" opacity="0.30"/><circle cx="173.3" cy="620.3" r="1.44" fill="url(#fg)" opacity="0.32"/><circle cx="270.7" cy="363.3" r="1.71" fill="url(#fg)" opacity="0.30"/><circle cx="763.2" cy="180.3" r="1.66" fill="url(#fg)" opacity="0.28"/><circle cx="355.9" cy="543.6" r="2.06" fill="url(#fg)" opacity="0.31"/><circle cx="604.9" cy="301.1" r="1.90" fill="url(#fg)" opacity="0.28"/><circle cx="885.8" cy="573.7" r="1.70" fill="url(#fg)" opacity="0.15"/><circle cx="713.5" cy="165.4" r="1.41" fill="url(#fg)" opacity="0.16"/><circle cx="624.2" cy="673.8" r="1.51" fill="url(#fg)" opacity="0.34"/><circle cx="733.0" cy="300.2" r="1.72" fill="url(#fg)" opacity="0.27"/><circle cx="995.0" cy="708.0" r="1.97" fill="url(#fg)" opacity="0.13"/><circle cx="126.2" cy="30.4" r="1.98" fill="url(#fg)" opacity="0.19"/><circle cx="1059.2" cy="86.0" r="1.42" fill="url(#fg)" opacity="0.20"/><circle cx="578.4" cy="345.9" r="1.65" fill="url(#fg)" opacity="0.21"/><circle cx="853.3" cy="600.5" r="1.71" fill="url(#fg)" opacity="0.19"/><circle cx="658.5" cy="548.0" r="1.71" fill="url(#fg)" opacity="0.35"/><circle cx="739.9" cy="390.9" r="1.52" fill="url(#fg)" opacity="0.30"/><circle cx="186.6" cy="76.7" r="1.60" fill="url(#fg)" opacity="0.33"/><circle cx="520.5" cy="86.2" r="1.42" fill="url(#fg)" opacity="0.19"/><circle cx="603.3" cy="102.8" r="1.62" fill="url(#fg)" opacity="0.26"/><circle cx="242.6" cy="345.3" r="1.61" fill="url(#fg)" opacity="0.20"/><circle cx="54.6" cy="46.1" r="1.65" fill="url(#fg)" opacity="0.33"/><circle cx="83.6" cy="130.7" r="2.20" fill="url(#fg)" opacity="0.23"/><circle cx="215.6" cy="621.0" r="1.73" fill="url(#fg)" opacity="0.23"/><circle cx="860.3" cy="283.5" r="1.84" fill="url(#fg)" opacity="0.13"/><circle cx="700.2" cy="446.1" r="2.15" fill="url(#fg)" opacity="0.18"/><circle cx="921.7" cy="711.9" r="2.07" fill="url(#fg)" opacity="0.22"/><circle cx="772.8" cy="125.9" r="1.54" fill="url(#fg)" opacity="0.13"/><circle cx="126.6" cy="53.5" r="2.00" fill="url(#fg)" opacity="0.20"/><circle cx="330.5" cy="368.2" r="1.57" fill="url(#fg)" opacity="0.12"/><circle cx="1022.6" cy="7.9" r="2.05" fill="url(#fg)" opacity="0.24"/><circle cx="844.6" cy="526.5" r="2.04" fill="url(#fg)" opacity="0.21"/><circle cx="882.3" cy="549.7" r="1.48" fill="url(#fg)" opacity="0.35"/><circle cx="1013.1" cy="288.0" r="1.60" fill="url(#fg)" opacity="0.28"/><circle cx="969.7" cy="16.8" r="1.58" fill="url(#fg)" opacity="0.25"/><circle cx="414.0" cy="264.4" r="2.05" fill="url(#fg)" opacity="0.27"/><circle cx="388.8" cy="456.8" r="1.62" fill="url(#fg)" opacity="0.20"/><circle cx="964.9" cy="230.3" r="1.67" fill="url(#fg)" opacity="0.14"/><circle cx="790.6" cy="151.3" r="1.84" fill="url(#fg)" opacity="0.29"/><circle cx="725.1" cy="126.9" r="1.51" fill="url(#fg)" opacity="0.14"/><circle cx="373.5" cy="308.4" r="1.80" fill="url(#fg)" opacity="0.12"/><circle cx="430.0" cy="230.2" r="2.16" fill="url(#fg)" opacity="0.24"/><circle cx="218.2" cy="630.4" r="2.00" fill="url(#fg)" opacity="0.19"/><circle cx="115.5" cy="707.1" r="2.17" fill="url(#fg)" opacity="0.22"/><circle cx="234.1" cy="292.3" r="1.54" fill="url(#fg)" opacity="0.28"/><circle cx="291.4" cy="484.9" r="1.66" fill="url(#fg)" opacity="0.34"/><circle cx="195.6" cy="255.7" r="1.52" fill="url(#fg)" opacity="0.35"/><circle cx="676.6" cy="270.7" r="1.57" fill="url(#fg)" opacity="0.27"/><circle cx="656.9" cy="635.5" r="1.90" fill="url(#fg)" opacity="0.32"/><circle cx="538.2" cy="406.5" r="2.07" fill="url(#fg)" opacity="0.15"/><circle cx="735.4" cy="324.5" r="1.74" fill="url(#fg)" opacity="0.27"/><circle cx="410.0" cy="164.7" r="1.86" fill="url(#fg)" opacity="0.26"/><circle cx="549.2" cy="23.1" r="1.76" fill="url(#fg)" opacity="0.26"/><circle cx="632.5" cy="425.7" r="1.52" fill="url(#fg)" opacity="0.33"/><circle cx="499.6" cy="710.9" r="1.65" fill="url(#fg)" opacity="0.29"/><circle cx="785.4" cy="708.4" r="2.09" fill="url(#fg)" opacity="0.21"/><circle cx="135.1" cy="708.9" r="1.59" fill="url(#fg)" opacity="0.23"/><circle cx="895.7" cy="464.8" r="2.06" fill="url(#fg)" opacity="0.34"/><circle cx="850.3" cy="366.3" r="1.45" fill="url(#fg)" opacity="0.35"/><circle cx="927.5" cy="509.5" r="2.05" fill="url(#fg)" opacity="0.18"/><circle cx="484.0" cy="384.0" r="1.56" fill="url(#fg)" opacity="0.32"/><circle cx="298.1" cy="460.9" r="1.84" fill="url(#fg)" opacity="0.14"/><circle cx="839.1" cy="351.4" r="2.04" fill="url(#fg)" opacity="0.18"/><circle cx="911.5" cy="551.9" r="2.12" fill="url(#fg)" opacity="0.25"/><circle cx="849.3" cy="108.7" r="1.48" fill="url(#fg)" opacity="0.20"/><circle cx="39.2" cy="247.6" r="2.07" fill="url(#fg)" opacity="0.32"/><circle cx="125.2" cy="130.1" r="2.08" fill="url(#fg)" opacity="0.21"/><circle cx="657.8" cy="645.7" r="2.19" fill="url(#fg)" opacity="0.14"/><circle cx="220.4" cy="450.5" r="1.98" fill="url(#fg)" opacity="0.32"/><circle cx="210.1" cy="478.6" r="1.41" fill="url(#fg)" opacity="0.22"/><circle cx="362.0" cy="225.8" r="1.62" fill="url(#fg)" opacity="0.26"/><circle cx="642.9" cy="497.5" r="1.50" fill="url(#fg)" opacity="0.16"/><circle cx="739.5" cy="334.0" r="1.49" fill="url(#fg)" opacity="0.15"/><circle cx="1003.1" cy="436.8" r="1.56" fill="url(#fg)" opacity="0.20"/><circle cx="1060.5" cy="495.2" r="1.69" fill="url(#fg)" opacity="0.29"/><circle cx="330.7" cy="292.3" r="1.90" fill="url(#fg)" opacity="0.15"/><circle cx="452.8" cy="587.2" r="1.77" fill="url(#fg)" opacity="0.21"/><circle cx="539.9" cy="674.2" r="1.96" fill="url(#fg)" opacity="0.20"/><circle cx="250.6" cy="414.8" r="2.10" fill="url(#fg)" opacity="0.19"/><circle cx="305.4" cy="611.8" r="1.76" fill="url(#fg)" opacity="0.28"/><circle cx="995.3" cy="277.5" r="1.88" fill="url(#fg)" opacity="0.29"/><circle cx="478.0" cy="46.0" r="1.63" fill="url(#fg)" opacity="0.22"/><circle cx="470.0" cy="683.4" r="1.96" fill="url(#fg)" opacity="0.19"/><circle cx="716.4" cy="175.2" r="1.51" fill="url(#fg)" opacity="0.21"/><circle cx="954.5" cy="180.2" r="1.67" fill="url(#fg)" opacity="0.22"/><circle cx="874.7" cy="608.8" r="1.84" fill="url(#fg)" opacity="0.26"/><circle cx="106.0" cy="641.9" r="1.69" fill="url(#fg)" opacity="0.14"/><circle cx="399.2" cy="517.7" r="1.68" fill="url(#fg)" opacity="0.27"/><circle cx="957.2" cy="680.0" r="1.91" fill="url(#fg)" opacity="0.13"/><circle cx="500.2" cy="259.0" r="1.65" fill="url(#fg)" opacity="0.23"/><circle cx="715.1" cy="433.6" r="2.18" fill="url(#fg)" opacity="0.34"/><circle cx="1058.1" cy="282.9" r="1.92" fill="url(#fg)" opacity="0.31"/><circle cx="747.3" cy="714.3" r="1.77" fill="url(#fg)" opacity="0.14"/><circle cx="427.8" cy="469.7" r="2.19" fill="url(#fg)" opacity="0.17"/><circle cx="223.2" cy="264.9" r="1.72" fill="url(#fg)" opacity="0.15"/><circle cx="790.8" cy="59.8" r="1.92" fill="url(#fg)" opacity="0.16"/><circle cx="664.1" cy="531.3" r="2.05" fill="url(#fg)" opacity="0.18"/><circle cx="779.1" cy="555.6" r="1.77" fill="url(#fg)" opacity="0.15"/><circle cx="16.8" cy="615.5" r="2.12" fill="url(#fg)" opacity="0.34"/><circle cx="25.8" cy="251.4" r="1.83" fill="url(#fg)" opacity="0.24"/><circle cx="118.6" cy="565.1" r="1.81" fill="url(#fg)" opacity="0.19"/><circle cx="132.8" cy="406.6" r="1.47" fill="url(#fg)" opacity="0.15"/><circle cx="546.0" cy="210.5" r="1.60" fill="url(#fg)" opacity="0.30"/><circle cx="441.2" cy="38.9" r="1.76" fill="url(#fg)" opacity="0.17"/><circle cx="595.0" cy="328.9" r="1.48" fill="url(#fg)" opacity="0.32"/><circle cx="906.2" cy="110.9" r="1.82" fill="url(#fg)" opacity="0.34"/><circle cx="433.3" cy="438.3" r="2.17" fill="url(#fg)" opacity="0.32"/><circle cx="440.7" cy="7.7" r="2.05" fill="url(#fg)" opacity="0.16"/><circle cx="782.9" cy="510.2" r="1.82" fill="url(#fg)" opacity="0.16"/><circle cx="30.4" cy="78.9" r="2.17" fill="url(#fg)" opacity="0.19"/><circle cx="685.5" cy="606.9" r="1.73" fill="url(#fg)" opacity="0.13"/><circle cx="83.5" cy="186.8" r="2.14" fill="url(#fg)" opacity="0.15"/><circle cx="350.5" cy="350.1" r="2.11" fill="url(#fg)" opacity="0.27"/><circle cx="1008.9" cy="406.6" r="2.12" fill="url(#fg)" opacity="0.24"/><circle cx="420.5" cy="214.3" r="1.61" fill="url(#fg)" opacity="0.29"/><circle cx="392.1" cy="307.3" r="1.69" fill="url(#fg)" opacity="0.23"/><circle cx="458.9" cy="322.8" r="2.07" fill="url(#fg)" opacity="0.13"/><circle cx="65.8" cy="378.0" r="1.72" fill="url(#fg)" opacity="0.25"/><circle cx="237.4" cy="71.0" r="1.65" fill="url(#fg)" opacity="0.21"/><circle cx="516.0" cy="164.9" r="1.79" fill="url(#fg)" opacity="0.29"/><circle cx="9.6" cy="291.1" r="1.41" fill="url(#fg)" opacity="0.34"/><circle cx="632.5" cy="687.9" r="1.88" fill="url(#fg)" opacity="0.20"/><circle cx="393.2" cy="215.6" r="1.87" fill="url(#fg)" opacity="0.26"/><circle cx="335.9" cy="356.3" r="2.00" fill="url(#fg)" opacity="0.24"/><circle cx="56.5" cy="66.5" r="1.62" fill="url(#fg)" opacity="0.18"/><circle cx="848.2" cy="304.7" r="1.72" fill="url(#fg)" opacity="0.32"/><circle cx="304.6" cy="486.8" r="2.19" fill="url(#fg)" opacity="0.14"/><circle cx="886.4" cy="235.0" r="2.06" fill="url(#fg)" opacity="0.19"/><circle cx="840.3" cy="459.9" r="2.01" fill="url(#fg)" opacity="0.13"/><circle cx="51.1" cy="447.3" r="2.14" fill="url(#fg)" opacity="0.25"/><circle cx="680.8" cy="16.0" r="2.00" fill="url(#fg)" opacity="0.33"/><circle cx="618.1" cy="4.0" r="1.73" fill="url(#fg)" opacity="0.29"/><circle cx="724.5" cy="704.3" r="1.46" fill="url(#fg)" opacity="0.33"/><circle cx="833.0" cy="315.4" r="1.70" fill="url(#fg)" opacity="0.29"/><circle cx="477.2" cy="312.8" r="1.66" fill="url(#fg)" opacity="0.15"/><circle cx="783.2" cy="51.2" r="2.07" fill="url(#fg)" opacity="0.15"/><circle cx="710.2" cy="392.5" r="1.49" fill="url(#fg)" opacity="0.15"/><circle cx="330.5" cy="683.0" r="2.14" fill="url(#fg)" opacity="0.25"/><circle cx="225.1" cy="297.0" r="2.07" fill="url(#fg)" opacity="0.24"/><circle cx="131.5" cy="625.6" r="1.43" fill="url(#fg)" opacity="0.23"/><circle cx="460.5" cy="270.3" r="2.14" fill="url(#fg)" opacity="0.28"/><circle cx="526.2" cy="493.7" r="2.02" fill="url(#fg)" opacity="0.21"/><circle cx="112.2" cy="531.5" r="1.87" fill="url(#fg)" opacity="0.16"/><circle cx="215.5" cy="247.9" r="1.68" fill="url(#fg)" opacity="0.16"/><circle cx="630.4" cy="372.3" r="1.86" fill="url(#fg)" opacity="0.21"/><circle cx="897.9" cy="256.5" r="1.78" fill="url(#fg)" opacity="0.25"/><circle cx="1045.3" cy="234.9" r="1.59" fill="url(#fg)" opacity="0.28"/><circle cx="278.5" cy="523.0" r="1.61" fill="url(#fg)" opacity="0.25"/><circle cx="68.4" cy="590.6" r="1.97" fill="url(#fg)" opacity="0.21"/><circle cx="461.3" cy="442.2" r="2.18" fill="url(#fg)" opacity="0.25"/><circle cx="969.7" cy="326.3" r="1.59" fill="url(#fg)" opacity="0.23"/><circle cx="802.8" cy="73.2" r="2.08" fill="url(#fg)" opacity="0.19"/><circle cx="37.4" cy="500.1" r="1.84" fill="url(#fg)" opacity="0.25"/><circle cx="355.0" cy="108.5" r="2.01" fill="url(#fg)" opacity="0.34"/><circle cx="858.9" cy="69.9" r="1.57" fill="url(#fg)" opacity="0.30"/><circle cx="212.4" cy="383.0" r="1.50" fill="url(#fg)" opacity="0.26"/><circle cx="815.4" cy="417.0" r="2.14" fill="url(#fg)" opacity="0.33"/><circle cx="734.8" cy="260.6" r="1.97" fill="url(#fg)" opacity="0.34"/><circle cx="310.1" cy="614.1" r="1.61" fill="url(#fg)" opacity="0.29"/><circle cx="265.6" cy="14.6" r="1.60" fill="url(#fg)" opacity="0.24"/><circle cx="312.4" cy="181.1" r="1.79" fill="url(#fg)" opacity="0.15"/><circle cx="290.6" cy="204.1" r="1.81" fill="url(#fg)" opacity="0.18"/><circle cx="931.5" cy="114.6" r="2.08" fill="url(#fg)" opacity="0.32"/><circle cx="649.6" cy="389.4" r="1.83" fill="url(#fg)" opacity="0.29"/><circle cx="703.5" cy="658.2" r="1.61" fill="url(#fg)" opacity="0.30"/><circle cx="57.9" cy="670.6" r="2.03" fill="url(#fg)" opacity="0.20"/><circle cx="248.8" cy="324.2" r="1.98" fill="url(#fg)" opacity="0.21"/><circle cx="1005.9" cy="362.0" r="1.68" fill="url(#fg)" opacity="0.25"/><circle cx="247.5" cy="680.1" r="2.15" fill="url(#fg)" opacity="0.15"/><circle cx="700.5" cy="51.4" r="1.48" fill="url(#fg)" opacity="0.33"/><circle cx="602.8" cy="85.7" r="1.65" fill="url(#fg)" opacity="0.35"/><circle cx="929.7" cy="44.0" r="1.45" fill="url(#fg)" opacity="0.27"/><circle cx="31.6" cy="408.8" r="1.95" fill="url(#fg)" opacity="0.35"/><circle cx="911.8" cy="561.9" r="1.46" fill="url(#fg)" opacity="0.24"/><circle cx="561.8" cy="132.2" r="1.68" fill="url(#fg)" opacity="0.24"/><circle cx="531.9" cy="141.4" r="1.73" fill="url(#fg)" opacity="0.28"/><circle cx="518.0" cy="56.3" r="1.85" fill="url(#fg)" opacity="0.23"/><circle cx="1036.7" cy="402.0" r="1.64" fill="url(#fg)" opacity="0.15"/><circle cx="357.8" cy="502.7" r="2.18" fill="url(#fg)" opacity="0.34"/><circle cx="1012.6" cy="662.5" r="2.15" fill="url(#fg)" opacity="0.32"/><circle cx="21.5" cy="350.6" r="1.95" fill="url(#fg)" opacity="0.26"/><circle cx="653.2" cy="439.0" r="1.47" fill="url(#fg)" opacity="0.33"/><circle cx="553.5" cy="687.0" r="1.49" fill="url(#fg)" opacity="0.13"/><circle cx="926.4" cy="685.3" r="1.43" fill="url(#fg)" opacity="0.13"/><circle cx="884.5" cy="492.9" r="1.86" fill="url(#fg)" opacity="0.24"/><circle cx="807.4" cy="578.4" r="1.45" fill="url(#fg)" opacity="0.12"/><circle cx="846.6" cy="698.4" r="1.73" fill="url(#fg)" opacity="0.31"/><circle cx="357.7" cy="248.3" r="2.02" fill="url(#fg)" opacity="0.12"/><circle cx="279.6" cy="419.3" r="1.67" fill="url(#fg)" opacity="0.24"/><circle cx="719.4" cy="325.7" r="2.11" fill="url(#fg)" opacity="0.17"/><circle cx="187.3" cy="107.4" r="1.78" fill="url(#fg)" opacity="0.18"/><circle cx="835.4" cy="238.3" r="1.92" fill="url(#fg)" opacity="0.17"/><circle cx="277.4" cy="374.3" r="2.10" fill="url(#fg)" opacity="0.18"/><circle cx="196.7" cy="166.3" r="1.66" fill="url(#fg)" opacity="0.19"/><circle cx="774.4" cy="482.7" r="1.83" fill="url(#fg)" opacity="0.30"/><circle cx="83.8" cy="546.6" r="1.57" fill="url(#fg)" opacity="0.18"/><circle cx="441.7" cy="708.7" r="1.69" fill="url(#fg)" opacity="0.21"/><circle cx="971.1" cy="709.2" r="1.51" fill="url(#fg)" opacity="0.21"/><circle cx="841.7" cy="560.1" r="2.03" fill="url(#fg)" opacity="0.20"/><circle cx="404.5" cy="205.5" r="1.99" fill="url(#fg)" opacity="0.26"/><circle cx="507.3" cy="585.9" r="1.80" fill="url(#fg)" opacity="0.12"/><circle cx="405.5" cy="46.6" r="1.51" fill="url(#fg)" opacity="0.33"/><circle cx="219.2" cy="628.7" r="2.15" fill="url(#fg)" opacity="0.34"/><circle cx="364.5" cy="666.4" r="1.97" fill="url(#fg)" opacity="0.15"/><circle cx="1008.0" cy="137.9" r="1.94" fill="url(#fg)" opacity="0.15"/><circle cx="940.8" cy="520.2" r="1.76" fill="url(#fg)" opacity="0.34"/><circle cx="396.9" cy="86.0" r="2.15" fill="url(#fg)" opacity="0.18"/><circle cx="76.4" cy="132.3" r="1.44" fill="url(#fg)" opacity="0.20"/><circle cx="327.2" cy="130.9" r="1.82" fill="url(#fg)" opacity="0.15"/><circle cx="576.0" cy="406.5" r="1.82" fill="url(#fg)" opacity="0.30"/><circle cx="1009.6" cy="58.3" r="1.46" fill="url(#fg)" opacity="0.17"/><circle cx="329.8" cy="544.6" r="1.80" fill="url(#fg)" opacity="0.33"/><circle cx="170.9" cy="236.6" r="1.64" fill="url(#fg)" opacity="0.25"/><circle cx="845.1" cy="696.4" r="1.88" fill="url(#fg)" opacity="0.23"/><circle cx="901.8" cy="333.0" r="2.16" fill="url(#fg)" opacity="0.16"/><circle cx="1042.5" cy="17.5" r="1.72" fill="url(#fg)" opacity="0.30"/><circle cx="55.3" cy="116.6" r="1.99" fill="url(#fg)" opacity="0.16"/><circle cx="225.6" cy="14.0" r="2.04" fill="url(#fg)" opacity="0.17"/><circle cx="532.1" cy="467.4" r="1.55" fill="url(#fg)" opacity="0.23"/><circle cx="16.2" cy="217.9" r="1.61" fill="url(#fg)" opacity="0.13"/><circle cx="659.6" cy="264.5" r="1.90" fill="url(#fg)" opacity="0.23"/><circle cx="338.0" cy="255.3" r="1.86" fill="url(#fg)" opacity="0.32"/><circle cx="444.5" cy="386.7" r="1.67" fill="url(#fg)" opacity="0.23"/><circle cx="974.0" cy="167.1" r="2.08" fill="url(#fg)" opacity="0.34"/><circle cx="940.2" cy="116.4" r="2.19" fill="url(#fg)" opacity="0.24"/><circle cx="307.7" cy="122.4" r="1.59" fill="url(#fg)" opacity="0.29"/><circle cx="622.1" cy="112.9" r="1.63" fill="url(#fg)" opacity="0.34"/><circle cx="103.3" cy="492.1" r="1.85" fill="url(#fg)" opacity="0.20"/><circle cx="530.0" cy="660.6" r="1.70" fill="url(#fg)" opacity="0.24"/><circle cx="1.8" cy="355.5" r="1.86" fill="url(#fg)" opacity="0.18"/><circle cx="673.6" cy="331.0" r="1.80" fill="url(#fg)" opacity="0.14"/><circle cx="513.6" cy="459.2" r="1.62" fill="url(#fg)" opacity="0.34"/><circle cx="472.0" cy="60.6" r="1.59" fill="url(#fg)" opacity="0.30"/><circle cx="883.8" cy="571.3" r="2.12" fill="url(#fg)" opacity="0.18"/><circle cx="537.2" cy="305.2" r="2.16" fill="url(#fg)" opacity="0.25"/><circle cx="522.2" cy="345.3" r="2.07" fill="url(#fg)" opacity="0.19"/><circle cx="536.2" cy="245.2" r="1.57" fill="url(#fg)" opacity="0.17"/><circle cx="889.2" cy="575.3" r="2.13" fill="url(#fg)" opacity="0.35"/><circle cx="730.3" cy="571.0" r="2.05" fill="url(#fg)" opacity="0.28"/><circle cx="854.2" cy="126.2" r="1.64" fill="url(#fg)" opacity="0.31"/><circle cx="260.2" cy="658.4" r="1.81" fill="url(#fg)" opacity="0.13"/><circle cx="365.8" cy="566.9" r="2.13" fill="url(#fg)" opacity="0.26"/><circle cx="994.0" cy="461.3" r="1.93" fill="url(#fg)" opacity="0.13"/><circle cx="116.6" cy="703.2" r="1.65" fill="url(#fg)" opacity="0.32"/><circle cx="198.2" cy="497.1" r="2.19" fill="url(#fg)" opacity="0.29"/><circle cx="664.0" cy="89.7" r="1.45" fill="url(#fg)" opacity="0.29"/><circle cx="925.0" cy="550.3" r="2.10" fill="url(#fg)" opacity="0.30"/><circle cx="606.7" cy="675.5" r="1.79" fill="url(#fg)" opacity="0.27"/><circle cx="409.8" cy="253.0" r="1.53" fill="url(#fg)" opacity="0.13"/><circle cx="848.2" cy="163.8" r="2.02" fill="url(#fg)" opacity="0.27"/><circle cx="740.3" cy="369.3" r="1.62" fill="url(#fg)" opacity="0.19"/><circle cx="199.7" cy="463.9" r="2.15" fill="url(#fg)" opacity="0.28"/><circle cx="352.4" cy="663.8" r="1.63" fill="url(#fg)" opacity="0.33"/><circle cx="1014.9" cy="443.5" r="2.02" fill="url(#fg)" opacity="0.34"/><circle cx="355.3" cy="200.0" r="1.79" fill="url(#fg)" opacity="0.24"/><circle cx="37.7" cy="617.6" r="1.78" fill="url(#fg)" opacity="0.24"/><circle cx="793.7" cy="178.8" r="1.86" fill="url(#fg)" opacity="0.17"/><circle cx="257.3" cy="234.5" r="1.44" fill="url(#fg)" opacity="0.14"/><circle cx="378.8" cy="377.3" r="1.91" fill="url(#fg)" opacity="0.34"/><circle cx="441.8" cy="291.2" r="1.78" fill="url(#fg)" opacity="0.17"/><circle cx="1022.4" cy="87.3" r="1.95" fill="url(#fg)" opacity="0.22"/><circle cx="812.7" cy="397.4" r="2.15" fill="url(#fg)" opacity="0.27"/><circle cx="962.1" cy="179.8" r="2.20" fill="url(#fg)" opacity="0.24"/><circle cx="562.6" cy="135.6" r="1.45" fill="url(#fg)" opacity="0.30"/><circle cx="160.2" cy="394.7" r="1.98" fill="url(#fg)" opacity="0.18"/><circle cx="774.8" cy="228.6" r="1.92" fill="url(#fg)" opacity="0.30"/><circle cx="752.6" cy="326.9" r="1.49" fill="url(#fg)" opacity="0.22"/><circle cx="506.2" cy="683.6" r="1.44" fill="url(#fg)" opacity="0.32"/><circle cx="75.7" cy="192.9" r="1.75" fill="url(#fg)" opacity="0.28"/><circle cx="136.3" cy="304.7" r="2.00" fill="url(#fg)" opacity="0.25"/><circle cx="429.6" cy="465.1" r="1.89" fill="url(#fg)" opacity="0.28"/><circle cx="49.5" cy="508.7" r="1.44" fill="url(#fg)" opacity="0.15"/><circle cx="504.9" cy="12.1" r="1.71" fill="url(#fg)" opacity="0.14"/><circle cx="499.5" cy="75.6" r="2.08" fill="url(#fg)" opacity="0.34"/><circle cx="518.8" cy="420.9" r="2.19" fill="url(#fg)" opacity="0.19"/><circle cx="127.8" cy="217.8" r="2.09" fill="url(#fg)" opacity="0.17"/><circle cx="542.4" cy="293.9" r="2.11" fill="url(#fg)" opacity="0.21"/><circle cx="274.4" cy="566.6" r="1.76" fill="url(#fg)" opacity="0.28"/><circle cx="389.9" cy="312.8" r="1.65" fill="url(#fg)" opacity="0.22"/><circle cx="665.0" cy="294.4" r="2.02" fill="url(#fg)" opacity="0.19"/><circle cx="485.2" cy="339.1" r="1.76" fill="url(#fg)" opacity="0.32"/><circle cx="400.8" cy="643.0" r="2.03" fill="url(#fg)" opacity="0.34"/><circle cx="427.9" cy="480.6" r="1.64" fill="url(#fg)" opacity="0.29"/><circle cx="771.8" cy="680.0" r="1.94" fill="url(#fg)" opacity="0.27"/><circle cx="463.8" cy="467.8" r="2.02" fill="url(#fg)" opacity="0.17"/><circle cx="574.7" cy="701.6" r="1.97" fill="url(#fg)" opacity="0.20"/><circle cx="17.8" cy="298.0" r="1.61" fill="url(#fg)" opacity="0.30"/><circle cx="654.0" cy="158.2" r="2.19" fill="url(#fg)" opacity="0.21"/><circle cx="209.6" cy="653.5" r="1.87" fill="url(#fg)" opacity="0.13"/><circle cx="875.5" cy="599.5" r="1.87" fill="url(#fg)" opacity="0.21"/><circle cx="759.1" cy="545.4" r="1.86" fill="url(#fg)" opacity="0.29"/><circle cx="268.2" cy="504.9" r="1.84" fill="url(#fg)" opacity="0.25"/><circle cx="1052.2" cy="97.7" r="1.66" fill="url(#fg)" opacity="0.30"/><circle cx="774.5" cy="680.4" r="1.85" fill="url(#fg)" opacity="0.18"/><circle cx="563.2" cy="354.6" r="1.90" fill="url(#fg)" opacity="0.16"/><circle cx="952.4" cy="474.9" r="2.04" fill="url(#fg)" opacity="0.19"/><circle cx="447.7" cy="104.0" r="1.77" fill="url(#fg)" opacity="0.26"/><circle cx="564.8" cy="709.7" r="2.16" fill="url(#fg)" opacity="0.25"/><circle cx="375.9" cy="543.4" r="1.64" fill="url(#fg)" opacity="0.14"/><circle cx="737.6" cy="494.2" r="1.70" fill="url(#fg)" opacity="0.31"/><circle cx="291.7" cy="256.6" r="1.42" fill="url(#fg)" opacity="0.24"/><circle cx="399.3" cy="470.6" r="1.65" fill="url(#fg)" opacity="0.15"/><circle cx="930.2" cy="668.4" r="1.54" fill="url(#fg)" opacity="0.18"/><circle cx="125.5" cy="61.4" r="1.99" fill="url(#fg)" opacity="0.30"/><circle cx="281.8" cy="350.2" r="1.42" fill="url(#fg)" opacity="0.28"/><circle cx="872.9" cy="615.4" r="1.96" fill="url(#fg)" opacity="0.17"/><circle cx="745.4" cy="241.3" r="1.57" fill="url(#fg)" opacity="0.32"/><circle cx="505.2" cy="224.6" r="2.05" fill="url(#fg)" opacity="0.22"/><circle cx="607.6" cy="436.2" r="1.58" fill="url(#fg)" opacity="0.35"/><circle cx="237.4" cy="443.7" r="2.17" fill="url(#fg)" opacity="0.15"/><circle cx="363.8" cy="315.1" r="2.06" fill="url(#fg)" opacity="0.22"/><circle cx="975.8" cy="484.7" r="1.68" fill="url(#fg)" opacity="0.16"/><circle cx="753.0" cy="154.7" r="2.10" fill="url(#fg)" opacity="0.32"/><circle cx="241.4" cy="260.8" r="1.97" fill="url(#fg)" opacity="0.17"/><circle cx="50.2" cy="498.1" r="2.07" fill="url(#fg)" opacity="0.13"/><circle cx="579.1" cy="417.5" r="1.44" fill="url(#fg)" opacity="0.14"/><circle cx="376.4" cy="705.1" r="2.09" fill="url(#fg)" opacity="0.26"/><circle cx="66.8" cy="72.9" r="1.96" fill="url(#fg)" opacity="0.12"/><circle cx="188.0" cy="195.2" r="1.96" fill="url(#fg)" opacity="0.27"/><circle cx="343.7" cy="334.7" r="1.85" fill="url(#fg)" opacity="0.19"/><circle cx="379.4" cy="257.8" r="1.63" fill="url(#fg)" opacity="0.18"/><circle cx="278.2" cy="11.6" r="1.87" fill="url(#fg)" opacity="0.19"/><circle cx="286.4" cy="80.9" r="1.78" fill="url(#fg)" opacity="0.31"/><circle cx="545.6" cy="223.3" r="2.00" fill="url(#fg)" opacity="0.32"/><circle cx="663.7" cy="472.1" r="1.80" fill="url(#fg)" opacity="0.28"/><circle cx="440.4" cy="279.2" r="1.77" fill="url(#fg)" opacity="0.24"/><circle cx="563.8" cy="381.7" r="2.11" fill="url(#fg)" opacity="0.30"/><circle cx="238.8" cy="15.9" r="1.43" fill="url(#fg)" opacity="0.19"/><circle cx="848.9" cy="444.2" r="1.55" fill="url(#fg)" opacity="0.19"/><circle cx="925.9" cy="598.7" r="1.95" fill="url(#fg)" opacity="0.28"/><circle cx="793.7" cy="325.5" r="1.84" fill="url(#fg)" opacity="0.21"/><circle cx="938.6" cy="709.8" r="2.07" fill="url(#fg)" opacity="0.33"/><circle cx="79.3" cy="176.8" r="1.83" fill="url(#fg)" opacity="0.34"/><circle cx="548.8" cy="221.8" r="1.81" fill="url(#fg)" opacity="0.32"/><circle cx="1055.7" cy="54.1" r="1.41" fill="url(#fg)" opacity="0.35"/><circle cx="158.0" cy="278.9" r="1.49" fill="url(#fg)" opacity="0.27"/><circle cx="599.5" cy="672.6" r="2.01" fill="url(#fg)" opacity="0.22"/><circle cx="631.0" cy="417.0" r="1.77" fill="url(#fg)" opacity="0.16"/><circle cx="959.8" cy="482.7" r="1.76" fill="url(#fg)" opacity="0.17"/><circle cx="579.4" cy="241.1" r="1.91" fill="url(#fg)" opacity="0.25"/><circle cx="19.0" cy="157.5" r="1.57" fill="url(#fg)" opacity="0.27"/><circle cx="77.6" cy="545.5" r="2.17" fill="url(#fg)" opacity="0.20"/><circle cx="595.6" cy="72.5" r="1.61" fill="url(#fg)" opacity="0.27"/><circle cx="868.2" cy="518.5" r="1.45" fill="url(#fg)" opacity="0.29"/><circle cx="36.5" cy="571.3" r="1.56" fill="url(#fg)" opacity="0.15"/><circle cx="31.9" cy="117.1" r="2.17" fill="url(#fg)" opacity="0.23"/><circle cx="342.5" cy="185.7" r="1.55" fill="url(#fg)" opacity="0.31"/><circle cx="677.0" cy="440.5" r="1.43" fill="url(#fg)" opacity="0.34"/><circle cx="600.3" cy="274.1" r="1.60" fill="url(#fg)" opacity="0.31"/><circle cx="762.2" cy="132.7" r="2.17" fill="url(#fg)" opacity="0.23"/><circle cx="255.8" cy="199.7" r="1.94" fill="url(#fg)" opacity="0.33"/><circle cx="70.2" cy="133.5" r="1.63" fill="url(#fg)" opacity="0.17"/><circle cx="900.3" cy="501.6" r="1.94" fill="url(#fg)" opacity="0.35"/><circle cx="669.3" cy="274.3" r="1.79" fill="url(#fg)" opacity="0.28"/><circle cx="62.8" cy="352.3" r="1.82" fill="url(#fg)" opacity="0.21"/><circle cx="52.0" cy="20.0" r="1.70" fill="url(#fg)" opacity="0.35"/><circle cx="351.8" cy="106.2" r="2.13" fill="url(#fg)" opacity="0.26"/><circle cx="192.3" cy="358.2" r="2.01" fill="url(#fg)" opacity="0.23"/><circle cx="602.4" cy="171.0" r="1.98" fill="url(#fg)" opacity="0.16"/><circle cx="83.3" cy="619.1" r="1.55" fill="url(#fg)" opacity="0.13"/><circle cx="498.7" cy="604.3" r="2.00" fill="url(#fg)" opacity="0.26"/><circle cx="811.3" cy="517.2" r="2.06" fill="url(#fg)" opacity="0.13"/><circle cx="157.5" cy="116.2" r="1.42" fill="url(#fg)" opacity="0.13"/><circle cx="934.8" cy="272.8" r="1.44" fill="url(#fg)" opacity="0.14"/><circle cx="902.2" cy="430.7" r="1.43" fill="url(#fg)" opacity="0.33"/><circle cx="120.0" cy="205.3" r="1.49" fill="url(#fg)" opacity="0.16"/><circle cx="213.8" cy="458.5" r="1.53" fill="url(#fg)" opacity="0.16"/><circle cx="570.9" cy="268.9" r="1.85" fill="url(#fg)" opacity="0.15"/><circle cx="541.5" cy="277.8" r="1.43" fill="url(#fg)" opacity="0.23"/><circle cx="655.7" cy="138.5" r="1.41" fill="url(#fg)" opacity="0.20"/><circle cx="946.3" cy="420.7" r="1.83" fill="url(#fg)" opacity="0.21"/><circle cx="1001.9" cy="94.6" r="1.97" fill="url(#fg)" opacity="0.21"/><circle cx="396.7" cy="506.1" r="1.43" fill="url(#fg)" opacity="0.33"/><circle cx="303.3" cy="209.7" r="2.03" fill="url(#fg)" opacity="0.29"/><circle cx="745.6" cy="662.1" r="1.71" fill="url(#fg)" opacity="0.16"/><circle cx="909.2" cy="548.1" r="2.18" fill="url(#fg)" opacity="0.15"/><circle cx="789.4" cy="620.0" r="1.88" fill="url(#fg)" opacity="0.20"/><circle cx="1022.0" cy="642.9" r="2.11" fill="url(#fg)" opacity="0.25"/><circle cx="1064.9" cy="600.9" r="2.17" fill="url(#fg)" opacity="0.27"/><circle cx="153.2" cy="289.0" r="1.51" fill="url(#fg)" opacity="0.25"/><circle cx="832.3" cy="44.5" r="1.62" fill="url(#fg)" opacity="0.26"/><circle cx="344.1" cy="434.5" r="1.76" fill="url(#fg)" opacity="0.16"/><circle cx="913.8" cy="706.6" r="1.69" fill="url(#fg)" opacity="0.18"/><circle cx="739.6" cy="135.9" r="1.56" fill="url(#fg)" opacity="0.32"/><circle cx="593.5" cy="243.0" r="1.40" fill="url(#fg)" opacity="0.12"/><circle cx="2.1" cy="235.0" r="2.19" fill="url(#fg)" opacity="0.18"/><circle cx="679.7" cy="46.7" r="1.59" fill="url(#fg)" opacity="0.28"/><circle cx="513.3" cy="517.4" r="2.15" fill="url(#fg)" opacity="0.32"/><circle cx="448.7" cy="227.5" r="1.65" fill="url(#fg)" opacity="0.21"/><circle cx="790.6" cy="331.5" r="1.52" fill="url(#fg)" opacity="0.28"/><circle cx="834.5" cy="692.2" r="1.89" fill="url(#fg)" opacity="0.17"/><circle cx="172.8" cy="25.3" r="1.55" fill="url(#fg)" opacity="0.22"/><circle cx="778.9" cy="409.8" r="2.17" fill="url(#fg)" opacity="0.28"/><circle cx="62.1" cy="70.4" r="1.77" fill="url(#fg)" opacity="0.13"/><circle cx="878.9" cy="489.6" r="2.08" fill="url(#fg)" opacity="0.25"/><circle cx="396.7" cy="80.9" r="1.42" fill="url(#fg)" opacity="0.27"/><circle cx="244.5" cy="21.3" r="1.45" fill="url(#fg)" opacity="0.16"/><circle cx="566.6" cy="91.7" r="2.06" fill="url(#fg)" opacity="0.26"/><circle cx="367.1" cy="86.2" r="1.98" fill="url(#fg)" opacity="0.27"/><circle cx="942.3" cy="396.7" r="2.09" fill="url(#fg)" opacity="0.25"/><circle cx="721.9" cy="698.0" r="2.02" fill="url(#fg)" opacity="0.19"/><circle cx="674.6" cy="335.4" r="1.78" fill="url(#fg)" opacity="0.12"/><circle cx="280.8" cy="430.7" r="1.81" fill="url(#fg)" opacity="0.24"/><circle cx="62.6" cy="94.2" r="1.95" fill="url(#fg)" opacity="0.26"/><circle cx="1055.9" cy="567.6" r="1.76" fill="url(#fg)" opacity="0.19"/><circle cx="539.1" cy="575.7" r="2.14" fill="url(#fg)" opacity="0.21"/><circle cx="515.9" cy="285.0" r="1.69" fill="url(#fg)" opacity="0.23"/><circle cx="1065.6" cy="33.2" r="1.46" fill="url(#fg)" opacity="0.21"/><circle cx="722.7" cy="107.9" r="1.74" fill="url(#fg)" opacity="0.15"/><circle cx="641.8" cy="546.7" r="1.64" fill="url(#fg)" opacity="0.22"/><circle cx="392.1" cy="636.1" r="1.41" fill="url(#fg)" opacity="0.17"/><circle cx="944.3" cy="345.8" r="1.51" fill="url(#fg)" opacity="0.15"/><circle cx="949.2" cy="536.4" r="1.94" fill="url(#fg)" opacity="0.13"/><circle cx="228.0" cy="319.3" r="1.44" fill="url(#fg)" opacity="0.26"/><circle cx="997.2" cy="240.0" r="2.02" fill="url(#fg)" opacity="0.15"/><circle cx="116.3" cy="26.6" r="1.78" fill="url(#fg)" opacity="0.27"/><circle cx="960.0" cy="566.1" r="1.44" fill="url(#fg)" opacity="0.17"/><circle cx="643.2" cy="336.8" r="2.13" fill="url(#fg)" opacity="0.19"/><circle cx="222.2" cy="460.6" r="2.14" fill="url(#fg)" opacity="0.14"/><circle cx="1011.4" cy="442.5" r="1.98" fill="url(#fg)" opacity="0.19"/><circle cx="963.1" cy="569.2" r="1.80" fill="url(#fg)" opacity="0.13"/><circle cx="149.2" cy="391.2" r="2.09" fill="url(#fg)" opacity="0.34"/><circle cx="265.2" cy="395.2" r="1.53" fill="url(#fg)" opacity="0.19"/><circle cx="792.8" cy="543.7" r="1.74" fill="url(#fg)" opacity="0.20"/><circle cx="742.4" cy="520.9" r="1.49" fill="url(#fg)" opacity="0.23"/><circle cx="102.0" cy="121.4" r="1.80" fill="url(#fg)" opacity="0.31"/><circle cx="687.0" cy="261.0" r="1.54" fill="url(#fg)" opacity="0.20"/><circle cx="1038.9" cy="433.6" r="1.96" fill="url(#fg)" opacity="0.15"/><circle cx="637.4" cy="439.1" r="1.89" fill="url(#fg)" opacity="0.30"/><circle cx="934.3" cy="694.3" r="1.92" fill="url(#fg)" opacity="0.21"/><circle cx="399.1" cy="294.0" r="1.92" fill="url(#fg)" opacity="0.20"/><circle cx="375.8" cy="252.0" r="2.04" fill="url(#fg)" opacity="0.31"/><circle cx="720.9" cy="604.0" r="1.91" fill="url(#fg)" opacity="0.21"/><circle cx="267.8" cy="225.8" r="2.04" fill="url(#fg)" opacity="0.14"/><circle cx="982.1" cy="216.7" r="1.49" fill="url(#fg)" opacity="0.21"/><circle cx="151.6" cy="456.9" r="1.47" fill="url(#fg)" opacity="0.33"/><circle cx="271.4" cy="543.5" r="2.10" fill="url(#fg)" opacity="0.17"/><circle cx="376.1" cy="339.0" r="1.63" fill="url(#fg)" opacity="0.17"/><circle cx="452.6" cy="199.2" r="1.42" fill="url(#fg)" opacity="0.29"/><circle cx="680.9" cy="574.6" r="1.55" fill="url(#fg)" opacity="0.20"/><circle cx="127.8" cy="55.4" r="1.88" fill="url(#fg)" opacity="0.30"/><circle cx="16.1" cy="324.6" r="1.66" fill="url(#fg)" opacity="0.26"/><circle cx="37.1" cy="301.4" r="2.18" fill="url(#fg)" opacity="0.20"/><circle cx="383.5" cy="660.5" r="1.86" fill="url(#fg)" opacity="0.32"/><circle cx="134.3" cy="578.4" r="1.85" fill="url(#fg)" opacity="0.14"/><circle cx="103.7" cy="66.3" r="1.53" fill="url(#fg)" opacity="0.21"/><circle cx="1057.4" cy="413.8" r="2.17" fill="url(#fg)" opacity="0.33"/><circle cx="808.0" cy="462.4" r="2.02" fill="url(#fg)" opacity="0.23"/><circle cx="713.5" cy="113.1" r="1.73" fill="url(#fg)" opacity="0.24"/><circle cx="549.5" cy="510.6" r="1.86" fill="url(#fg)" opacity="0.28"/><circle cx="840.9" cy="590.9" r="1.52" fill="url(#fg)" opacity="0.14"/><circle cx="50.3" cy="114.9" r="1.65" fill="url(#fg)" opacity="0.34"/><circle cx="468.0" cy="333.2" r="1.62" fill="url(#fg)" opacity="0.25"/><circle cx="830.1" cy="237.5" r="2.04" fill="url(#fg)" opacity="0.31"/><circle cx="1.2" cy="392.2" r="2.11" fill="url(#fg)" opacity="0.14"/><circle cx="73.9" cy="191.3" r="1.87" fill="url(#fg)" opacity="0.30"/><circle cx="711.0" cy="295.7" r="1.56" fill="url(#fg)" opacity="0.24"/><circle cx="492.9" cy="184.2" r="1.49" fill="url(#fg)" opacity="0.28"/><circle cx="146.6" cy="141.4" r="1.87" fill="url(#fg)" opacity="0.24"/><circle cx="3.2" cy="706.8" r="1.70" fill="url(#fg)" opacity="0.31"/><circle cx="169.3" cy="591.3" r="1.54" fill="url(#fg)" opacity="0.34"/><circle cx="805.9" cy="585.7" r="1.57" fill="url(#fg)" opacity="0.34"/><circle cx="128.4" cy="117.8" r="2.12" fill="url(#fg)" opacity="0.17"/><circle cx="970.0" cy="339.2" r="1.68" fill="url(#fg)" opacity="0.15"/><circle cx="257.1" cy="464.2" r="2.02" fill="url(#fg)" opacity="0.29"/><circle cx="465.9" cy="327.1" r="1.70" fill="url(#fg)" opacity="0.23"/><circle cx="485.1" cy="490.7" r="1.66" fill="url(#fg)" opacity="0.28"/><circle cx="604.3" cy="103.8" r="1.71" fill="url(#fg)" opacity="0.13"/><circle cx="383.0" cy="23.3" r="1.74" fill="url(#fg)" opacity="0.14"/><circle cx="1004.5" cy="599.7" r="1.65" fill="url(#fg)" opacity="0.13"/><circle cx="393.0" cy="222.8" r="1.87" fill="url(#fg)" opacity="0.15"/><circle cx="894.5" cy="273.3" r="1.48" fill="url(#fg)" opacity="0.16"/><circle cx="16.2" cy="548.0" r="1.98" fill="url(#fg)" opacity="0.17"/><circle cx="843.0" cy="59.7" r="1.65" fill="url(#fg)" opacity="0.16"/><circle cx="819.6" cy="527.6" r="1.76" fill="url(#fg)" opacity="0.19"/><circle cx="378.5" cy="337.7" r="1.61" fill="url(#fg)" opacity="0.30"/><circle cx="864.0" cy="658.7" r="2.17" fill="url(#fg)" opacity="0.26"/><circle cx="999.9" cy="122.5" r="1.56" fill="url(#fg)" opacity="0.35"/><circle cx="857.8" cy="86.8" r="1.75" fill="url(#fg)" opacity="0.19"/><circle cx="894.6" cy="487.4" r="2.12" fill="url(#fg)" opacity="0.17"/><circle cx="922.5" cy="365.1" r="1.63" fill="url(#fg)" opacity="0.13"/><circle cx="311.8" cy="299.9" r="1.88" fill="url(#fg)" opacity="0.34"/><circle cx="873.7" cy="51.0" r="1.99" fill="url(#fg)" opacity="0.18"/><circle cx="362.9" cy="162.9" r="1.44" fill="url(#fg)" opacity="0.13"/><circle cx="439.6" cy="391.1" r="1.85" fill="url(#fg)" opacity="0.21"/><circle cx="310.1" cy="12.0" r="1.67" fill="url(#fg)" opacity="0.28"/><circle cx="523.9" cy="270.4" r="1.44" fill="url(#fg)" opacity="0.18"/><circle cx="316.2" cy="213.4" r="1.42" fill="url(#fg)" opacity="0.15"/><circle cx="512.4" cy="14.0" r="1.69" fill="url(#fg)" opacity="0.32"/><circle cx="473.0" cy="376.4" r="1.48" fill="url(#fg)" opacity="0.13"/><circle cx="837.2" cy="398.4" r="1.68" fill="url(#fg)" opacity="0.23"/><circle cx="800.8" cy="360.3" r="2.07" fill="url(#fg)" opacity="0.30"/><circle cx="952.9" cy="519.7" r="1.77" fill="url(#fg)" opacity="0.28"/><circle cx="568.6" cy="414.6" r="2.06" fill="url(#fg)" opacity="0.24"/><circle cx="914.7" cy="37.3" r="1.89" fill="url(#fg)" opacity="0.29"/><circle cx="637.9" cy="650.3" r="1.78" fill="url(#fg)" opacity="0.13"/><circle cx="400.1" cy="679.1" r="1.85" fill="url(#fg)" opacity="0.16"/><circle cx="153.9" cy="539.8" r="1.99" fill="url(#fg)" opacity="0.23"/><circle cx="327.3" cy="632.5" r="1.58" fill="url(#fg)" opacity="0.12"/><circle cx="781.8" cy="629.3" r="1.62" fill="url(#fg)" opacity="0.30"/><circle cx="86.3" cy="507.9" r="1.45" fill="url(#fg)" opacity="0.29"/><circle cx="996.5" cy="377.9" r="1.78" fill="url(#fg)" opacity="0.13"/><circle cx="360.5" cy="74.7" r="2.15" fill="url(#fg)" opacity="0.32"/><circle cx="132.3" cy="319.1" r="1.94" fill="url(#fg)" opacity="0.18"/><circle cx="117.0" cy="238.8" r="1.78" fill="url(#fg)" opacity="0.21"/><circle cx="463.9" cy="426.8" r="2.15" fill="url(#fg)" opacity="0.34"/><circle cx="967.3" cy="593.5" r="1.60" fill="url(#fg)" opacity="0.17"/><circle cx="490.1" cy="460.6" r="1.68" fill="url(#fg)" opacity="0.26"/><circle cx="1057.2" cy="223.6" r="1.47" fill="url(#fg)" opacity="0.12"/><circle cx="223.2" cy="523.3" r="1.43" fill="url(#fg)" opacity="0.31"/><circle cx="252.6" cy="173.5" r="2.12" fill="url(#fg)" opacity="0.30"/><circle cx="280.7" cy="73.3" r="2.18" fill="url(#fg)" opacity="0.34"/><circle cx="763.9" cy="338.4" r="2.01" fill="url(#fg)" opacity="0.29"/><circle cx="543.0" cy="194.2" r="1.93" fill="url(#fg)" opacity="0.24"/><circle cx="345.7" cy="457.7" r="2.18" fill="url(#fg)" opacity="0.15"/><circle cx="225.4" cy="162.0" r="2.16" fill="url(#fg)" opacity="0.34"/><circle cx="986.3" cy="602.3" r="2.06" fill="url(#fg)" opacity="0.32"/><circle cx="604.1" cy="53.2" r="2.07" fill="url(#fg)" opacity="0.29"/><circle cx="893.1" cy="31.2" r="1.98" fill="url(#fg)" opacity="0.13"/><circle cx="520.1" cy="639.9" r="1.76" fill="url(#fg)" opacity="0.35"/><circle cx="720.1" cy="476.2" r="1.69" fill="url(#fg)" opacity="0.28"/><circle cx="681.7" cy="48.6" r="1.98" fill="url(#fg)" opacity="0.33"/><circle cx="855.6" cy="331.0" r="1.76" fill="url(#fg)" opacity="0.17"/><circle cx="725.5" cy="392.5" r="1.40" fill="url(#fg)" opacity="0.14"/><circle cx="424.0" cy="175.3" r="1.58" fill="url(#fg)" opacity="0.17"/><circle cx="443.1" cy="497.8" r="1.94" fill="url(#fg)" opacity="0.33"/><circle cx="22.1" cy="621.2" r="1.99" fill="url(#fg)" opacity="0.26"/><circle cx="654.2" cy="253.7" r="1.46" fill="url(#fg)" opacity="0.20"/><circle cx="707.9" cy="38.7" r="2.13" fill="url(#fg)" opacity="0.28"/><circle cx="712.0" cy="434.0" r="2.17" fill="url(#fg)" opacity="0.31"/><circle cx="866.2" cy="708.9" r="1.41" fill="url(#fg)" opacity="0.23"/><circle cx="654.9" cy="457.1" r="1.89" fill="url(#fg)" opacity="0.32"/><circle cx="387.3" cy="3.4" r="1.90" fill="url(#fg)" opacity="0.31"/><circle cx="1050.4" cy="424.9" r="2.02" fill="url(#fg)" opacity="0.32"/><circle cx="1056.2" cy="331.0" r="1.72" fill="url(#fg)" opacity="0.33"/><circle cx="12.0" cy="233.3" r="2.19" fill="url(#fg)" opacity="0.20"/><circle cx="420.9" cy="196.7" r="1.48" fill="url(#fg)" opacity="0.28"/><circle cx="325.7" cy="282.8" r="1.88" fill="url(#fg)" opacity="0.15"/><circle cx="450.9" cy="574.3" r="2.18" fill="url(#fg)" opacity="0.20"/><circle cx="208.5" cy="380.1" r="1.41" fill="url(#fg)" opacity="0.17"/><circle cx="321.5" cy="641.2" r="1.79" fill="url(#fg)" opacity="0.19"/><circle cx="192" cy="29" r="3.4" fill="url(#sg)" opacity="0.77"/><circle cx="162" cy="61" r="3.4" fill="url(#sg)" opacity="0.73"/><circle cx="192" cy="73" r="3.3" fill="url(#sg)" opacity="0.78"/><circle cx="236" cy="60" r="3.7" fill="url(#sg)" opacity="0.87"/><circle cx="321" cy="81" r="3.6" fill="url(#sg)" opacity="0.84"/><circle cx="383" cy="52" r="3.7" fill="url(#sg)" opacity="0.87"/><circle cx="400" cy="52" r="3.0" fill="url(#sg)" opacity="0.75"/><circle cx="445" cy="79" r="3.6" fill="url(#sg)" opacity="0.89"/><circle cx="449" cy="100" r="3.8" fill="url(#sg)" opacity="0.88"/><circle cx="442" cy="130" r="3.1" fill="url(#sg)" opacity="0.83"/><circle cx="25" cy="110" r="3.5" fill="url(#sg)" opacity="0.84"/><circle cx="279" cy="140" r="3.1" fill="url(#sg)" opacity="0.91"/><circle cx="284" cy="140" r="3.4" fill="url(#sg)" opacity="0.77"/><circle cx="349" cy="160" r="3.8" fill="url(#sg)" opacity="0.80"/><circle cx="397" cy="174" r="3.1" fill="url(#sg)" opacity="0.85"/><circle cx="244" cy="164" r="3.2" fill="url(#sg)" opacity="0.76"/><circle cx="223" cy="182" r="3.2" fill="url(#sg)" opacity="0.84"/><circle cx="180" cy="173" r="3.3" fill="url(#sg)" opacity="0.85"/><circle cx="284" cy="196" r="3.7" fill="url(#sg)" opacity="0.92"/><circle cx="125" cy="217" r="3.7" fill="url(#sg)" opacity="0.90"/><circle cx="53" cy="256" r="3.2" fill="url(#sg)" opacity="0.88"/><circle cx="115" cy="286" r="3.1" fill="url(#sg)" opacity="0.84"/><circle cx="252" cy="223" r="3.1" fill="url(#sg)" opacity="0.74"/><circle cx="248" cy="229" r="3.8" fill="url(#sg)" opacity="0.75"/><circle cx="254" cy="229" r="3.6" fill="url(#sg)" opacity="0.83"/><circle cx="415" cy="218" r="3.0" fill="url(#sg)" opacity="0.88"/><circle cx="404" cy="231" r="3.0" fill="url(#sg)" opacity="0.90"/><circle cx="426" cy="251" r="3.7" fill="url(#sg)" opacity="0.82"/><circle cx="416" cy="270" r="3.4" fill="url(#sg)" opacity="0.73"/><circle cx="514" cy="266" r="3.6" fill="url(#sg)" opacity="0.73"/><circle cx="463" cy="257" r="3.4" fill="url(#sg)" opacity="0.91"/><circle cx="259" cy="274" r="3.5" fill="url(#sg)" opacity="0.74"/><circle cx="234" cy="279" r="3.6" fill="url(#sg)" opacity="0.86"/><circle cx="234" cy="286" r="3.3" fill="url(#sg)" opacity="0.87"/><circle cx="287" cy="298" r="3.5" fill="url(#sg)" opacity="0.80"/><circle cx="193" cy="321" r="3.4" fill="url(#sg)" opacity="0.78"/><circle cx="255" cy="335" r="3.2" fill="url(#sg)" opacity="0.90"/><circle cx="301" cy="318" r="3.3" fill="url(#sg)" opacity="0.87"/><circle cx="365" cy="338" r="3.3" fill="url(#sg)" opacity="0.76"/><circle cx="350" cy="342" r="3.0" fill="url(#sg)" opacity="0.91"/><circle cx="520" cy="351" r="3.6" fill="url(#sg)" opacity="0.92"/><circle cx="475" cy="298" r="3.5" fill="url(#sg)" opacity="0.73"/><circle cx="103" cy="321" r="3.1" fill="url(#sg)" opacity="0.73"/><circle cx="9" cy="281" r="3.5" fill="url(#sg)" opacity="0.84"/><circle cx="529" cy="224" r="3.8" fill="url(#sg)" opacity="0.78"/><circle cx="513" cy="114" r="3.2" fill="url(#sg)" opacity="0.76"/><circle cx="455" cy="211" r="3.1" fill="url(#sg)" opacity="0.73"/><circle cx="496" cy="204" r="3.4" fill="url(#sg)" opacity="0.80"/><circle cx="357" cy="265" r="3.3" fill="url(#sg)" opacity="0.91"/><circle cx="614" cy="45" r="3.3" fill="url(#sg)" opacity="0.89"/><circle cx="619" cy="41" r="3.4" fill="url(#sg)" opacity="0.74"/><circle cx="575" cy="116" r="3.0" fill="url(#sg)" opacity="0.84"/><circle cx="543" cy="156" r="3.7" fill="url(#sg)" opacity="0.73"/><circle cx="643" cy="125" r="3.6" fill="url(#sg)" opacity="0.77"/><circle cx="653" cy="77" r="3.5" fill="url(#sg)" opacity="0.89"/><circle cx="807" cy="37" r="3.6" fill="url(#sg)" opacity="0.77"/><circle cx="807" cy="57" r="3.1" fill="url(#sg)" opacity="0.91"/><circle cx="817" cy="60" r="3.7" fill="url(#sg)" opacity="0.90"/><circle cx="885" cy="83" r="3.4" fill="url(#sg)" opacity="0.73"/><circle cx="915" cy="81" r="3.3" fill="url(#sg)" opacity="0.90"/><circle cx="864" cy="4" r="3.1" fill="url(#sg)" opacity="0.78"/><circle cx="847" cy="140" r="3.0" fill="url(#sg)" opacity="0.90"/><circle cx="540" cy="125" r="3.3" fill="url(#sg)" opacity="0.74"/><circle cx="709" cy="218" r="3.3" fill="url(#sg)" opacity="0.76"/><circle cx="729" cy="187" r="3.3" fill="url(#sg)" opacity="0.84"/><circle cx="760" cy="216" r="3.5" fill="url(#sg)" opacity="0.74"/><circle cx="769" cy="216" r="3.4" fill="url(#sg)" opacity="0.73"/><circle cx="777" cy="234" r="3.4" fill="url(#sg)" opacity="0.88"/><circle cx="672" cy="236" r="3.2" fill="url(#sg)" opacity="0.88"/><circle cx="680" cy="243" r="3.2" fill="url(#sg)" opacity="0.80"/><circle cx="624" cy="220" r="3.6" fill="url(#sg)" opacity="0.72"/><circle cx="845" cy="249" r="3.4" fill="url(#sg)" opacity="0.83"/><circle cx="827" cy="232" r="3.6" fill="url(#sg)" opacity="0.91"/><circle cx="918" cy="205" r="3.6" fill="url(#sg)" opacity="0.76"/><circle cx="971" cy="244" r="3.2" fill="url(#sg)" opacity="0.82"/><circle cx="1000" cy="225" r="3.2" fill="url(#sg)" opacity="0.83"/><circle cx="984" cy="219" r="3.1" fill="url(#sg)" opacity="0.86"/><circle cx="1034" cy="148" r="3.3" fill="url(#sg)" opacity="0.73"/><circle cx="1022" cy="161" r="3.1" fill="url(#sg)" opacity="0.91"/><circle cx="960" cy="121" r="3.7" fill="url(#sg)" opacity="0.90"/><circle cx="1030" cy="92" r="3.3" fill="url(#sg)" opacity="0.92"/><circle cx="919" cy="274" r="3.1" fill="url(#sg)" opacity="0.87"/><circle cx="884" cy="279" r="3.8" fill="url(#sg)" opacity="0.76"/><circle cx="610" cy="283" r="3.0" fill="url(#sg)" opacity="0.75"/><circle cx="575" cy="297" r="3.1" fill="url(#sg)" opacity="0.88"/><circle cx="593" cy="309" r="3.5" fill="url(#sg)" opacity="0.82"/><circle cx="635" cy="305" r="3.1" fill="url(#sg)" opacity="0.85"/><circle cx="748" cy="286" r="3.1" fill="url(#sg)" opacity="0.75"/><circle cx="785" cy="293" r="3.5" fill="url(#sg)" opacity="0.85"/><circle cx="877" cy="323" r="3.6" fill="url(#sg)" opacity="0.89"/><circle cx="748" cy="328" r="3.1" fill="url(#sg)" opacity="0.78"/><circle cx="966" cy="335" r="3.1" fill="url(#sg)" opacity="0.82"/><circle cx="1042" cy="350" r="3.0" fill="url(#sg)" opacity="0.89"/><circle cx="934" cy="357" r="3.5" fill="url(#sg)" opacity="0.88"/><circle cx="1042" cy="274" r="3.4" fill="url(#sg)" opacity="0.90"/><circle cx="1059" cy="24" r="3.7" fill="url(#sg)" opacity="0.89"/><circle cx="726" cy="37" r="3.6" fill="url(#sg)" opacity="0.76"/><circle cx="738" cy="81" r="3.3" fill="url(#sg)" opacity="0.73"/><circle cx="851" cy="169" r="3.6" fill="url(#sg)" opacity="0.81"/><circle cx="657" cy="202" r="3.8" fill="url(#sg)" opacity="0.78"/><circle cx="865" cy="109" r="3.3" fill="url(#sg)" opacity="0.89"/><circle cx="190" cy="374" r="3.8" fill="url(#sg)" opacity="0.87"/><circle cx="132" cy="362" r="3.7" fill="url(#sg)" opacity="0.90"/><circle cx="65" cy="361" r="3.2" fill="url(#sg)" opacity="0.84"/><circle cx="262" cy="382" r="3.1" fill="url(#sg)" opacity="0.86"/><circle cx="391" cy="367" r="3.8" fill="url(#sg)" opacity="0.82"/><circle cx="486" cy="384" r="3.1" fill="url(#sg)" opacity="0.83"/><circle cx="386" cy="398" r="3.1" fill="url(#sg)" opacity="0.81"/><circle cx="436" cy="406" r="3.1" fill="url(#sg)" opacity="0.80"/><circle cx="436" cy="417" r="3.7" fill="url(#sg)" opacity="0.87"/><circle cx="434" cy="433" r="3.7" fill="url(#sg)" opacity="0.81"/><circle cx="446" cy="429" r="3.4" fill="url(#sg)" opacity="0.73"/><circle cx="299" cy="448" r="3.6" fill="url(#sg)" opacity="0.83"/><circle cx="202" cy="476" r="3.3" fill="url(#sg)" opacity="0.75"/><circle cx="189" cy="467" r="3.4" fill="url(#sg)" opacity="0.73"/><circle cx="249" cy="466" r="3.1" fill="url(#sg)" opacity="0.74"/><circle cx="56" cy="515" r="3.3" fill="url(#sg)" opacity="0.75"/><circle cx="38" cy="482" r="3.7" fill="url(#sg)" opacity="0.84"/><circle cx="10" cy="511" r="3.7" fill="url(#sg)" opacity="0.83"/><circle cx="190" cy="503" r="3.1" fill="url(#sg)" opacity="0.78"/><circle cx="309" cy="501" r="3.7" fill="url(#sg)" opacity="0.84"/><circle cx="278" cy="524" r="3.5" fill="url(#sg)" opacity="0.85"/><circle cx="280" cy="489" r="3.0" fill="url(#sg)" opacity="0.76"/><circle cx="392" cy="495" r="3.3" fill="url(#sg)" opacity="0.89"/><circle cx="495" cy="506" r="3.8" fill="url(#sg)" opacity="0.84"/><circle cx="127" cy="579" r="3.2" fill="url(#sg)" opacity="0.73"/><circle cx="188" cy="585" r="3.4" fill="url(#sg)" opacity="0.80"/><circle cx="163" cy="585" r="3.7" fill="url(#sg)" opacity="0.76"/><circle cx="268" cy="587" r="3.2" fill="url(#sg)" opacity="0.72"/><circle cx="205" cy="610" r="3.0" fill="url(#sg)" opacity="0.88"/><circle cx="108" cy="614" r="3.7" fill="url(#sg)" opacity="0.75"/><circle cx="509" cy="602" r="3.0" fill="url(#sg)" opacity="0.84"/><circle cx="463" cy="559" r="3.2" fill="url(#sg)" opacity="0.84"/><circle cx="399" cy="643" r="3.7" fill="url(#sg)" opacity="0.87"/><circle cx="373" cy="665" r="3.2" fill="url(#sg)" opacity="0.84"/><circle cx="360" cy="674" r="3.2" fill="url(#sg)" opacity="0.87"/><circle cx="352" cy="687" r="3.2" fill="url(#sg)" opacity="0.89"/><circle cx="303" cy="689" r="3.5" fill="url(#sg)" opacity="0.90"/><circle cx="227" cy="656" r="3.3" fill="url(#sg)" opacity="0.91"/><circle cx="105" cy="658" r="3.5" fill="url(#sg)" opacity="0.77"/><circle cx="115" cy="646" r="3.5" fill="url(#sg)" opacity="0.78"/><circle cx="9" cy="692" r="3.1" fill="url(#sg)" opacity="0.73"/><circle cx="112" cy="693" r="3.5" fill="url(#sg)" opacity="0.77"/><circle cx="129" cy="685" r="3.1" fill="url(#sg)" opacity="0.88"/><circle cx="479" cy="670" r="3.1" fill="url(#sg)" opacity="0.87"/><circle cx="494" cy="661" r="3.2" fill="url(#sg)" opacity="0.79"/><circle cx="474" cy="713" r="3.7" fill="url(#sg)" opacity="0.89"/><circle cx="320" cy="679" r="3.7" fill="url(#sg)" opacity="0.92"/><circle cx="37" cy="703" r="3.5" fill="url(#sg)" opacity="0.91"/><circle cx="51" cy="697" r="3.5" fill="url(#sg)" opacity="0.84"/><circle cx="25" cy="604" r="3.3" fill="url(#sg)" opacity="0.80"/><circle cx="153" cy="531" r="3.5" fill="url(#sg)" opacity="0.77"/><circle cx="60" cy="437" r="3.5" fill="url(#sg)" opacity="0.89"/><circle cx="107" cy="428" r="3.6" fill="url(#sg)" opacity="0.77"/><circle cx="519" cy="608" r="3.0" fill="url(#sg)" opacity="0.79"/><circle cx="790" cy="384" r="3.3" fill="url(#sg)" opacity="0.89"/><circle cx="830" cy="377" r="3.4" fill="url(#sg)" opacity="0.82"/><circle cx="916" cy="365" r="3.5" fill="url(#sg)" opacity="0.83"/><circle cx="934" cy="359" r="3.5" fill="url(#sg)" opacity="0.83"/><circle cx="1063" cy="403" r="3.4" fill="url(#sg)" opacity="0.77"/><circle cx="664" cy="403" r="3.1" fill="url(#sg)" opacity="0.81"/><circle cx="550" cy="450" r="3.7" fill="url(#sg)" opacity="0.91"/><circle cx="572" cy="484" r="3.2" fill="url(#sg)" opacity="0.83"/><circle cx="560" cy="496" r="3.4" fill="url(#sg)" opacity="0.81"/><circle cx="621" cy="524" r="3.1" fill="url(#sg)" opacity="0.88"/><circle cx="548" cy="543" r="3.1" fill="url(#sg)" opacity="0.77"/><circle cx="588" cy="439" r="3.2" fill="url(#sg)" opacity="0.76"/><circle cx="608" cy="426" r="3.2" fill="url(#sg)" opacity="0.74"/><circle cx="814" cy="413" r="3.4" fill="url(#sg)" opacity="0.75"/><circle cx="819" cy="403" r="3.5" fill="url(#sg)" opacity="0.84"/><circle cx="871" cy="452" r="3.5" fill="url(#sg)" opacity="0.82"/><circle cx="888" cy="456" r="3.5" fill="url(#sg)" opacity="0.78"/><circle cx="846" cy="468" r="3.4" fill="url(#sg)" opacity="0.86"/><circle cx="960" cy="457" r="3.2" fill="url(#sg)" opacity="0.87"/><circle cx="963" cy="464" r="3.5" fill="url(#sg)" opacity="0.91"/><circle cx="919" cy="424" r="3.5" fill="url(#sg)" opacity="0.83"/><circle cx="1036" cy="419" r="3.6" fill="url(#sg)" opacity="0.78"/><circle cx="994" cy="379" r="3.3" fill="url(#sg)" opacity="0.81"/><circle cx="754" cy="505" r="3.6" fill="url(#sg)" opacity="0.86"/><circle cx="791" cy="516" r="3.1" fill="url(#sg)" opacity="0.91"/><circle cx="739" cy="529" r="3.8" fill="url(#sg)" opacity="0.82"/><circle cx="708" cy="546" r="3.8" fill="url(#sg)" opacity="0.84"/><circle cx="877" cy="577" r="3.3" fill="url(#sg)" opacity="0.74"/><circle cx="1039" cy="581" r="3.0" fill="url(#sg)" opacity="0.84"/><circle cx="709" cy="602" r="3.6" fill="url(#sg)" opacity="0.84"/><circle cx="613" cy="614" r="3.6" fill="url(#sg)" opacity="0.81"/><circle cx="622" cy="611" r="3.6" fill="url(#sg)" opacity="0.84"/><circle cx="634" cy="608" r="3.5" fill="url(#sg)" opacity="0.83"/><circle cx="611" cy="639" r="3.5" fill="url(#sg)" opacity="0.83"/><circle cx="604" cy="661" r="3.1" fill="url(#sg)" opacity="0.85"/><circle cx="776" cy="666" r="3.6" fill="url(#sg)" opacity="0.81"/><circle cx="947" cy="661" r="3.8" fill="url(#sg)" opacity="0.82"/><circle cx="939" cy="655" r="3.1" fill="url(#sg)" opacity="0.82"/><circle cx="971" cy="698" r="3.3" fill="url(#sg)" opacity="0.75"/><circle cx="985" cy="700" r="3.7" fill="url(#sg)" opacity="0.76"/><circle cx="1009" cy="700" r="3.6" fill="url(#sg)" opacity="0.75"/><circle cx="928" cy="708" r="3.4" fill="url(#sg)" opacity="0.92"/><circle cx="931" cy="684" r="3.1" fill="url(#sg)" opacity="0.89"/><circle cx="648" cy="708" r="3.0" fill="url(#sg)" opacity="0.92"/><circle cx="1056" cy="693" r="3.7" fill="url(#sg)" opacity="0.81"/><circle cx="1060" cy="693" r="3.5" fill="url(#sg)" opacity="0.81"/><circle cx="861" cy="614" r="3.1" fill="url(#sg)" opacity="0.79"/><circle cx="798" cy="647" r="3.4" fill="url(#sg)" opacity="0.89"/><circle cx="407" cy="7" r="6" fill="url(#sg)"/><circle cx="303" cy="103" r="6" fill="url(#sg)"/><circle cx="243" cy="199" r="6" fill="url(#sg)"/><circle cx="133" cy="249" r="6" fill="url(#sg)"/><circle cx="521" cy="133" r="6" fill="url(#sg)"/><circle cx="502" cy="104" r="6" fill="url(#sg)"/><circle cx="402" cy="319" r="6" fill="url(#sg)"/><circle cx="475" cy="318" r="6" fill="url(#sg)"/><circle cx="570" cy="29" r="6" fill="url(#sg)"/><circle cx="868" cy="27" r="6" fill="url(#sg)"/><circle cx="657" cy="97" r="6" fill="url(#sg)"/><circle cx="859" cy="149" r="6" fill="url(#sg)"/><circle cx="565" cy="229" r="6" fill="url(#sg)"/><circle cx="870" cy="232" r="6" fill="url(#sg)"/><circle cx="926" cy="312" r="6" fill="url(#sg)"/><circle cx="772" cy="78" r="6" fill="url(#sg)"/><circle cx="753" cy="190" r="6" fill="url(#sg)"/><circle cx="117" cy="480" r="6" fill="url(#sg)"/><circle cx="84" cy="639" r="6" fill="url(#sg)"/><circle cx="162" cy="683" r="6" fill="url(#sg)"/><circle cx="364" cy="538" r="6" fill="url(#sg)"/><circle cx="420" cy="572" r="6" fill="url(#sg)"/><circle cx="302" cy="640" r="6" fill="url(#sg)"/><circle cx="530" cy="550" r="6" fill="url(#sg)"/><circle cx="529" cy="573" r="6" fill="url(#sg)"/><circle cx="563" cy="371" r="6" fill="url(#sg)"/><circle cx="629" cy="482" r="6" fill="url(#sg)"/><circle cx="847" cy="485" r="6" fill="url(#sg)"/><circle cx="757" cy="516" r="6" fill="url(#sg)"/><circle cx="821" cy="567" r="6" fill="url(#sg)"/><circle cx="701" cy="603" r="6" fill="url(#sg)"/><circle cx="928" cy="667" r="6" fill="url(#sg)"/><circle cx="1029" cy="374" r="6" fill="url(#sg)"/><circle cx="899" cy="465" r="6" fill="url(#sg)"/><circle cx="928" cy="473" r="6" fill="url(#sg)"/><circle cx="951" cy="489" r="6" fill="url(#sg)"/></svg>
<div class="a" style="left:1730px;top:127px;width:102px;height:26px;background:#b3b3b3;border:1px solid #c2c2c2;box-shadow:inset -1px -1px 0 #9c9c9c"></div>
<svg style="left:1732px;top:129px;" width="22" height="22" viewBox="0 0 22 22"><defs><linearGradient id="p01g" x1="0" y1="0" x2="1" y2="1"><stop offset="0" stop-color="#20a040"/><stop offset="1" stop-color="#002000"/></linearGradient></defs><rect x="0.5" y="0.5" width="21" height="21" fill="#1030ff" stroke="#0000ff"/><polygon points="1,1 11,1 11,11 1,21" fill="url(#p01g)"/><rect x="11" y="1" width="10" height="10" fill="#e07030"/><rect x="11" y="11" width="10" height="10" fill="#4060e0"/></svg>
<div class="t" style="left:1759px;top:135.2px;font-size:12px;color:#141414;font-weight:normal;letter-spacing:0.3px">Process01</div>
<div class="t" style="left:1824px;top:131px;font-size:6px;font-weight:bold;color:#000">N</div><div class="t" style="left:1824px;top:145px;font-size:6px;font-weight:bold;color:#000">D</div>
<div class="a" style="left:1730px;top:157px;width:102px;height:26px;background:#b3b3b3;border:1px solid #c2c2c2;box-shadow:inset -1px -1px 0 #9c9c9c"></div>
<svg style="left:1732px;top:159px;" width="22" height="22" viewBox="0 0 22 22"><rect x="0.5" y="0.5" width="21" height="21" fill="#ccc" stroke="#000"/><polygon points="11,11 1,11 4,1 11,1" fill="#0000ff"/><polygon points="11,11 11,1 21,11" fill="#00ff00"/><polygon points="11,11 21,11 11,21" fill="#ff0000"/><polygon points="11,11 11,21 4,21 1,11" fill="#909090"/><polygon points="1,1 5,1 1,6" fill="#e08080"/></svg>
<div class="t" style="left:1759px;top:165.2px;font-size:12px;color:#141414;font-weight:normal;letter-spacing:0.3px">Process02</div>
<div class="t" style="left:1824px;top:161px;font-size:6px;font-weight:bold;color:#000">N</div><div class="t" style="left:1824px;top:175px;font-size:6px;font-weight:bold;color:#000">D</div>
<div class="a" style="left:1730px;top:187px;width:102px;height:26px;background:#b3b3b3;border:1px solid #c2c2c2;box-shadow:inset -1px -1px 0 #9c9c9c"></div>
<svg style="left:1732px;top:189px;" width="22" height="22" viewBox="0 0 22 22"><defs><linearGradient id="p03g" x1="0" y1="0" x2="1" y2="1"><stop offset="0" stop-color="#00b0ff"/><stop offset="1" stop-color="#0010ff"/></linearGradient></defs><rect x="0" y="0" width="22" height="22" fill="url(#p03g)"/><text x="11" y="19" font-family="Liberation Sans" font-weight="bold" font-size="21" fill="#ff8a20" text-anchor="middle">S</text></svg>
<div class="t" style="left:1759px;top:195.2px;font-size:12px;color:#141414;font-weight:normal;letter-spacing:0.3px">Process03</div>
<div class="t" style="left:1824px;top:191px;font-size:6px;font-weight:bold;color:#000">N</div><div class="t" style="left:1824px;top:205px;font-size:6px;font-weight:bold;color:#000">D</div>
<div class="a" style="left:1730px;top:217px;width:102px;height:26px;background:#b3b3b3;border:1px solid #c2c2c2;box-shadow:inset -1px -1px 0 #9c9c9c"></div>
<svg style="left:1732px;top:219px;" width="22" height="22" viewBox="0 0 22 22"><rect x="0.5" y="0.5" width="21" height="21" fill="#e8e8e8" stroke="#000"/><polygon points="5,1 17,1 11,7" fill="#333"/><polygon points="5,21 17,21 11,15" fill="#333"/><rect x="2" y="8" width="18" height="2" fill="#0000ff"/><rect x="2" y="10" width="18" height="2" fill="#00d000"/><rect x="2" y="12" width="18" height="2" fill="#ff0000"/></svg>
<div class="t" style="left:1759px;top:225.2px;font-size:12px;color:#141414;font-weight:normal;letter-spacing:0.3px">Process05</div>
<div class="t" style="left:1824px;top:221px;font-size:6px;font-weight:bold;color:#000">N</div><div class="t" style="left:1824px;top:235px;font-size:6px;font-weight:bold;color:#000">D</div>
<div class="a" style="left:1730px;top:247px;width:102px;height:26px;background:#b3b3b3;border:1px solid #c2c2c2;box-shadow:inset -1px -1px 0 #9c9c9c"></div>
<svg style="left:1732px;top:249px;" width="22" height="22" viewBox="0 0 22 22"><rect x="0.5" y="0.5" width="21" height="21" fill="#d8d8d8" stroke="#000"/><circle cx="11" cy="7" r="4.3" fill="#ff0000"/><circle cx="6.5" cy="14.5" r="4.3" fill="#00ee00"/><circle cx="15.5" cy="14.5" r="4.3" fill="#0000ff"/></svg>
<div class="t" style="left:1759px;top:255.2px;font-size:12px;color:#141414;font-weight:normal;letter-spacing:0.3px">Process06</div>
<div class="t" style="left:1824px;top:251px;font-size:6px;font-weight:bold;color:#000">N</div><div class="t" style="left:1824px;top:265px;font-size:6px;font-weight:bold;color:#000">D</div>
<div class="a" style="left:1730px;top:277px;width:102px;height:26px;background:#b3b3b3;border:1px solid #c2c2c2;box-shadow:inset -1px -1px 0 #9c9c9c"></div>
<svg style="left:1732px;top:279px;" width="22" height="22" viewBox="0 0 22 22"><defs><linearGradient id="p07g" x1="0" y1="0" x2="1" y2="1"><stop offset="0" stop-color="#e0f0ff"/><stop offset="0.5" stop-color="#6080ff"/><stop offset="1" stop-color="#2030ff"/></linearGradient></defs><rect x="0" y="0" width="22" height="22" fill="url(#p07g)"/><path d="M0,22 C6,18 7,4 11,4 C15,4 16,18 22,22 Z" fill="#2838ff" opacity="0.8"/></svg>
<div class="t" style="left:1759px;top:285.2px;font-size:12px;color:#141414;font-weight:normal;letter-spacing:0.3px">Process07</div>
<div class="t" style="left:1824px;top:281px;font-size:6px;font-weight:bold;color:#000">N</div><div class="t" style="left:1824px;top:295px;font-size:6px;font-weight:bold;color:#000">D</div>
<div class="a" style="left:1759px;top:310px;width:102px;height:26px;background:#b3b3b3;border:1px solid #c2c2c2;box-shadow:inset -1px -1px 0 #9c9c9c"></div>
<svg style="left:1761px;top:312px;" width="22" height="22" viewBox="0 0 22 22"><defs><linearGradient id="p12g" x1="0" y1="1" x2="1" y2="0"><stop offset="0" stop-color="#0000ff"/><stop offset="1" stop-color="#8090ff"/></linearGradient></defs><rect x="0" y="0" width="22" height="22" fill="url(#p12g)"/><path d="M3,3 V19 H19" stroke="#ff8a20" stroke-width="1" fill="none"/><path d="M4.5,19 C5,10 10,6 19,6" stroke="#ff8a20" stroke-width="1.2" fill="none"/><rect x="1" y="1" width="2" height="2" fill="#ff8a20"/><rect x="16" y="1" width="2" height="2" fill="#ff8a20"/><rect x="19" y="1" width="2" height="2" fill="#ff8a20"/></svg>
<div class="t" style="left:1788px;top:318.2px;font-size:12px;color:#141414;font-weight:normal;letter-spacing:0.3px">Process12</div>
<div class="t" style="left:1853px;top:314px;font-size:6px;font-weight:bold;color:#000">N</div><div class="t" style="left:1853px;top:328px;font-size:6px;font-weight:bold;color:#000">D</div>
<div class="a" style="left:1759px;top:340px;width:102px;height:26px;background:#b3b3b3;border:1px solid #c2c2c2;box-shadow:inset -1px -1px 0 #9c9c9c"></div>
<svg style="left:1761px;top:342px;" width="22" height="22" viewBox="0 0 22 22"><defs><linearGradient id="p13g" x1="0" y1="1" x2="1" y2="0"><stop offset="0" stop-color="#2040ff"/><stop offset="1" stop-color="#c0d0ff"/></linearGradient></defs><rect x="0.5" y="0.5" width="21" height="21" fill="url(#p13g)" stroke="#2040ff"/><path d="M1,5 H21 M1,9 H21 M1,13 H21 M1,17 H21 M5,1 V21 M9,1 V21 M13,1 V21 M17,1 V21" stroke="#c8c8e8" stroke-width="0.7"/><path d="M2,20 C5,19 6,2 7.5,2 C9,2 9,16 13,18 C16,19 19,19 21,20 Z" fill="#ff9a50"/></svg>
<div class="t" style="left:1788px;top:348.2px;font-size:12px;color:#141414;font-weight:normal;letter-spacing:0.3px">Process13</div>
<div class="t" style="left:1853px;top:344px;font-size:6px;font-weight:bold;color:#000">N</div><div class="t" style="left:1853px;top:358px;font-size:6px;font-weight:bold;color:#000">D</div>
<div class="a" style="left:1759px;top:370px;width:109px;height:26px;background:#b3b3b3;border:1px solid #c2c2c2;box-shadow:inset -1px -1px 0 #9c9c9c"></div>
<svg style="left:1761px;top:372px;" width="22" height="22" viewBox="0 0 22 22"><rect x="0.5" y="0.5" width="21" height="21" fill="#c090b0" stroke="#0000ff"/><polygon points="1,11 11,1 21,1 11,11 21,21 11,21" fill="#3040f0"/><polygon points="11,11 21,1 21,21" fill="#5060f0" opacity="0.7"/></svg>
<div class="t" style="left:1788px;top:378.2px;font-size:12px;color:#141414;font-weight:normal;letter-spacing:0.3px">Process101</div>
<div class="t" style="left:1860px;top:374px;font-size:6px;font-weight:bold;color:#000">N</div><div class="t" style="left:1860px;top:388px;font-size:6px;font-weight:bold;color:#e00000">D</div>
<div class="a" style="left:1759px;top:400px;width:102px;height:26px;background:#6b80e0;border:1px solid #8a98e8;box-shadow:inset -1px -1px 0 #5a6ac8"></div>
<svg style="left:1761px;top:402px;" width="22" height="22" viewBox="0 0 22 22"><defs><linearGradient id="p11g" x1="0" y1="0" x2="1" y2="1"><stop offset="0" stop-color="#8010c0"/><stop offset="1" stop-color="#20e000"/></linearGradient><radialGradient id="p11d"><stop offset="0" stop-color="#fff"/><stop offset="1" stop-color="#5080ff"/></radialGradient></defs><rect x="0" y="0" width="22" height="22" fill="url(#p11g)"/><circle cx="6.5" cy="6.5" r="3.3" fill="url(#p11d)"/><circle cx="15.5" cy="6.5" r="3.3" fill="url(#p11d)"/><circle cx="6.5" cy="15.5" r="3.3" fill="url(#p11d)"/><circle cx="15.5" cy="15.5" r="3.3" fill="url(#p11d)"/></svg>
<div class="t" style="left:1788px;top:408.2px;font-size:12px;color:#fff;font-weight:normal;letter-spacing:0.3px">Process11</div>
<div class="t" style="left:1853px;top:404px;font-size:6px;font-weight:bold;color:#000">N</div><div class="t" style="left:1853px;top:418px;font-size:6px;font-weight:bold;color:#000">D</div>
<svg style="left:1273px;top:123px" width="145" height="26" viewBox="0 0 145 26"><polygon points="0.5,0.5 135,0.5 144.5,10 144.5,25.5 0.5,25.5" fill="#b3b3b3" stroke="#c4c4c4" stroke-width="1"/><path d="M144.5,10 V25.5 H0.5" stroke="#9a9a9a" fill="none"/><g transform="translate(1,0.5)"><polygon points="0,6.5 8,1 15,6 7,11" fill="#2a90f8"/><polygon points="0,6.5 7,11 7,24 0,18.5" fill="#70bcff"/><polygon points="7,11 15,6 15,19 7,24" fill="#1a74d8"/></g><rect x="15.5" y="1" width="9" height="24" fill="#3a3a3a"/><text transform="translate(23.5,24) rotate(-90)" font-family="Liberation Sans" font-weight="bold" font-size="10" fill="#fff" letter-spacing="0">XISF</text></svg>
<div class="t" style="left:1302px;top:131px;font-size:11.5px;color:#141414;font-weight:normal;letter-spacing:0.5px">Syn_Lum_Master</div>
<div class="t" style="left:1410px;top:140px;font-size:6px;font-weight:bold;color:#000">N</div>
<svg style="left:1561px;top:126px" width="144" height="26" viewBox="0 0 144 26"><polygon points="0.5,0.5 134,0.5 143.5,10 143.5,25.5 0.5,25.5" fill="#b3b3b3" stroke="#c4c4c4" stroke-width="1"/><path d="M143.5,10 V25.5 H0.5" stroke="#9a9a9a" fill="none"/><g transform="translate(1,0.5)"><polygon points="0,6.5 8,1 15,6 7,11" fill="#2a90f8"/><polygon points="0,6.5 7,11 7,24 0,18.5" fill="#70bcff"/><polygon points="7,11 15,6 15,19 7,24" fill="#1a74d8"/></g><rect x="15.5" y="1" width="9" height="24" fill="#3a3a3a"/><text transform="translate(23.5,24) rotate(-90)" font-family="Liberation Sans" font-weight="bold" font-size="10" fill="#fff" letter-spacing="0">XISF</text></svg>
<div class="t" style="left:1590px;top:134px;font-size:11.5px;color:#141414;font-weight:normal;letter-spacing:0.5px">Red_Driz_Master</div>
<div class="t" style="left:1697px;top:143px;font-size:6px;font-weight:bold;color:#000">N</div>
<svg style="left:1561px;top:156px" width="157" height="26" viewBox="0 0 157 26"><polygon points="0.5,0.5 147,0.5 156.5,10 156.5,25.5 0.5,25.5" fill="#b3b3b3" stroke="#c4c4c4" stroke-width="1"/><path d="M156.5,10 V25.5 H0.5" stroke="#9a9a9a" fill="none"/><g transform="translate(1,0.5)"><polygon points="0,6.5 8,1 15,6 7,11" fill="#2a90f8"/><polygon points="0,6.5 7,11 7,24 0,18.5" fill="#70bcff"/><polygon points="7,11 15,6 15,19 7,24" fill="#1a74d8"/></g><rect x="15.5" y="1" width="9" height="24" fill="#3a3a3a"/><text transform="translate(23.5,24) rotate(-90)" font-family="Liberation Sans" font-weight="bold" font-size="10" fill="#fff" letter-spacing="0">XISF</text></svg>
<div class="t" style="left:1590px;top:164px;font-size:11.5px;color:#141414;font-weight:normal;letter-spacing:0.5px">Green_Driz_Master</div>
<div class="t" style="left:1710px;top:173px;font-size:6px;font-weight:bold;color:#000">N</div>
<svg style="left:1561px;top:186px" width="147" height="26" viewBox="0 0 147 26"><polygon points="0.5,0.5 137,0.5 146.5,10 146.5,25.5 0.5,25.5" fill="#b3b3b3" stroke="#c4c4c4" stroke-width="1"/><path d="M146.5,10 V25.5 H0.5" stroke="#9a9a9a" fill="none"/><g transform="translate(1,0.5)"><polygon points="0,6.5 8,1 15,6 7,11" fill="#2a90f8"/><polygon points="0,6.5 7,11 7,24 0,18.5" fill="#70bcff"/><polygon points="7,11 15,6 15,19 7,24" fill="#1a74d8"/></g><rect x="15.5" y="1" width="9" height="24" fill="#3a3a3a"/><text transform="translate(23.5,24) rotate(-90)" font-family="Liberation Sans" font-weight="bold" font-size="10" fill="#fff" letter-spacing="0">XISF</text></svg>
<div class="t" style="left:1590px;top:194px;font-size:11.5px;color:#141414;font-weight:normal;letter-spacing:0.5px">Blue_Driz_Master</div>
<div class="t" style="left:1700px;top:203px;font-size:6px;font-weight:bold;color:#000">N</div>
<svg style="left:1657px;top:277px" width="68" height="26" viewBox="0 0 68 26"><polygon points="0.5,0.5 58,0.5 67.5,10 67.5,25.5 0.5,25.5" fill="#b3b3b3" stroke="#c4c4c4"/><path d="M67.5,10 V25.5 H0.5" stroke="#9a9a9a" fill="none"/><polygon points="3,7 11,2.5 19,6 19,20 11,24.5 3,20" fill="#1a7ae0"/><polygon points="3,7 11,2.5 19,6 11,10" fill="#4aa8ff"/><polygon points="3,7 11,10 11,24.5 3,20" fill="#2a8af0"/></svg>
<div class="t" style="left:1685.3px;top:284.5px;font-size:11.5px;color:#141414;font-weight:normal;letter-spacing:0.5px">PSF</div>
<div class="t" style="left:1717px;top:294px;font-size:6px;font-weight:bold;color:#000">N</div>
<div class="a" style="left:1305px;top:409px;width:397px;height:513px;background:#676767;"></div>
<div class="a" style="left:1305px;top:409px;width:397px;height:25px;background:linear-gradient(#6f6f6f,#626262);"></div>
<div class="a" style="left:1702px;top:409px;width:1px;height:514px;background:#3a3a3a;"></div>
<div class="a" style="left:1305px;top:922px;width:398px;height:1px;background:#3a3a3a;"></div>
<div class="a" style="left:1307px;top:434px;width:393px;height:463px;background:#c4c4c6;"></div>
<div class="a" style="left:1307px;top:897px;width:393px;height:23px;background:#aba79f;"></div>
<svg style="left:1310px;top:414px;" width="17" height="17" viewBox="0 0 17 17"><defs><linearGradient id="smg" x1="0" y1="0" x2="1" y2="1"><stop offset="0" stop-color="#8010c8"/><stop offset="1" stop-color="#10e010"/></linearGradient><radialGradient id="smd"><stop offset="0" stop-color="#fff"/><stop offset="1" stop-color="#70a0ff"/></radialGradient></defs><rect width="17" height="17" fill="url(#smg)"/><circle cx="5" cy="5" r="2.6" fill="url(#smd)"/><circle cx="12.5" cy="5" r="2.6" fill="url(#smd)"/><circle cx="5" cy="12.5" r="2.6" fill="url(#smd)"/><circle cx="12.5" cy="12.5" r="2.6" fill="url(#smd)"/></svg>
<div class="t" style="left:1460px;top:415.2px;font-size:13px;color:#c8c8c8;font-weight:bold;letter-spacing:1.25px">StarMask</div>
<svg style="left:1662px;top:414px;" width="40" height="18" viewBox="0 0 40 18"><rect x="2" y="4" width="9" height="2" fill="#e8e8e8"/><polygon points="2,12 11,12 6.5,7" fill="#e8e8e8"/><path d="M22.5,3.5 L30.5,11.5 M30.5,3.5 L22.5,11.5" stroke="#f0f0f0" stroke-width="2.2"/></svg>
<div class="t" style="right:506.13px;top:447.6px;font-size:11px;color:#141414;letter-spacing:0.87px">Noise threshold:</div>
<div class="a" style="left:1418px;top:442px;width:63px;height:20px;background:#e2e2e2;border:2px solid #6e9ae6"></div>
<div class="t" style="left:1425.5px;top:447.6px;font-size:11px;color:#111;font-weight:normal;letter-spacing:0.9px">0.46000</div>
<div class="a" style="left:1470px;top:446px;width:1px;height:12px;background:#111;"></div>
<div class="a" style="left:1485px;top:450.0px;width:201px;height:5px;background:#dadada;border:1px solid #7f7f7f"></div>
<div class="a" style="left:1485px;top:450.0px;width:92px;height:5px;background:#939393;border:1px solid #7f7f7f"></div>
<svg style="left:1571px;top:446.5px;" width="12" height="12" viewBox="0 0 12 12"><defs><radialGradient id="kg" cx="0.5" cy="0.35" r="0.6"><stop offset="0" stop-color="#e8e8e8"/><stop offset="1" stop-color="#b4b4b4"/></radialGradient></defs><circle cx="6" cy="6" r="5.2" fill="url(#kg)" stroke="#7a7a7a" stroke-width="0.9"/></svg>
<div class="t" style="right:506.03px;top:474.6px;font-size:11px;color:#141414;letter-spacing:0.97px">Working mode:</div>
<div class="a" style="left:1418px;top:469px;width:274px;height:20px;background:linear-gradient(#dcdcdc,#bcbcbc);border:1px solid #7c7c7c"></div>
<div class="t" style="left:1424.5px;top:474.6px;font-size:11px;color:#111;font-weight:normal;letter-spacing:0.9px">Star Mask</div>
<div class="a" style="left:1674px;top:471px;width:1px;height:16px;background:#8a8a8a;"></div>
<svg style="left:1677px;top:474px;" width="12" height="10" viewBox="0 0 12 10"><polygon points="0.5,1.5 9.5,1.5 5,6.5" fill="#111"/></svg>
<div class="t" style="right:506.26px;top:500.6px;font-size:11px;color:#141414;letter-spacing:0.74px">Scale:</div>
<div class="a" style="left:1418px;top:495px;width:63px;height:20px;background:#e2e2e2;border:1px solid #7c7c7c"></div>
<div class="a" style="left:1466px;top:496px;width:14px;height:18px;background:linear-gradient(#d8d8d8,#c4c4c4);border-left:1px solid #b0b0b0"></div>
<svg style="left:1467px;top:497px;" width="12" height="16" viewBox="0 0 12 16"><polygon points="2,6.5 10,6.5 6,2" fill="#111"/><polygon points="2,9.5 10,9.5 6,14" fill="#111"/></svg>
<div class="t" style="left:1425.5px;top:500.6px;font-size:11px;color:#111;font-weight:normal;letter-spacing:0.9px">7</div>
<div class="a" style="left:1315px;top:521px;width:377px;height:19px;background:#aaa69f;"></div>
<div class="t" style="left:1319px;top:525.1px;font-size:12px;color:#1558b0;font-weight:bold;letter-spacing:0.7px">Structure Growth</div>
<svg style="left:1673px;top:523px;" width="14" height="15" viewBox="0 0 14 15"><polygon points="7,1 13,7 1,7" fill="#1558b0"/><polygon points="7,7.5 13,13.5 1,13.5" fill="#1558b0"/></svg>
<div class="t" style="right:506.24px;top:551.6px;font-size:11px;color:#141414;letter-spacing:0.76px">Large-scale:</div>
<div class="a" style="left:1418px;top:546px;width:63px;height:20px;background:#e2e2e2;border:1px solid #7c7c7c"></div>
<div class="a" style="left:1466px;top:547px;width:14px;height:18px;background:linear-gradient(#d8d8d8,#c4c4c4);border-left:1px solid #b0b0b0"></div>
<svg style="left:1467px;top:548px;" width="12" height="16" viewBox="0 0 12 16"><polygon points="2,6.5 10,6.5 6,2" fill="#111"/><polygon points="2,9.5 10,9.5 6,14" fill="#111"/></svg>
<div class="t" style="left:1425.5px;top:551.6px;font-size:11px;color:#111;font-weight:normal;letter-spacing:0.9px">2</div>
<div class="t" style="right:506.24px;top:575.6px;font-size:11px;color:#141414;letter-spacing:0.76px">Small-scale:</div>
<div class="a" style="left:1418px;top:570px;width:63px;height:20px;background:#e2e2e2;border:1px solid #7c7c7c"></div>
<div class="a" style="left:1466px;top:571px;width:14px;height:18px;background:linear-gradient(#d8d8d8,#c4c4c4);border-left:1px solid #b0b0b0"></div>
<svg style="left:1467px;top:572px;" width="12" height="16" viewBox="0 0 12 16"><polygon points="2,6.5 10,6.5 6,2" fill="#111"/><polygon points="2,9.5 10,9.5 6,14" fill="#111"/></svg>
<div class="t" style="left:1425.5px;top:575.6px;font-size:11px;color:#111;font-weight:normal;letter-spacing:0.9px">0</div>
<div class="t" style="right:506.05px;top:599.6px;font-size:11px;color:#141414;letter-spacing:0.95px">Compensation:</div>
<div class="a" style="left:1418px;top:594px;width:63px;height:20px;background:#e2e2e2;border:1px solid #7c7c7c"></div>
<div class="a" style="left:1466px;top:595px;width:14px;height:18px;background:linear-gradient(#d8d8d8,#c4c4c4);border-left:1px solid #b0b0b0"></div>
<svg style="left:1467px;top:596px;" width="12" height="16" viewBox="0 0 12 16"><polygon points="2,6.5 10,6.5 6,2" fill="#111"/><polygon points="2,9.5 10,9.5 6,14" fill="#111"/></svg>
<div class="t" style="left:1425.5px;top:599.6px;font-size:11px;color:#111;font-weight:normal;letter-spacing:0.9px">1</div>
<div class="a" style="left:1315px;top:620px;width:377px;height:19px;background:#aaa69f;"></div>
<div class="t" style="left:1319px;top:624.1px;font-size:12px;color:#1558b0;font-weight:bold;letter-spacing:0.7px">Mask Generation</div>
<svg style="left:1673px;top:622px;" width="14" height="15" viewBox="0 0 14 15"><polygon points="7,1 13,7 1,7" fill="#1558b0"/><polygon points="7,7.5 13,13.5 1,13.5" fill="#1558b0"/></svg>
<div class="t" style="right:506.16px;top:650.6px;font-size:11px;color:#141414;letter-spacing:0.84px">Smoothness:</div>
<div class="a" style="left:1418px;top:645px;width:63px;height:20px;background:#e2e2e2;border:1px solid #7c7c7c"></div>
<div class="a" style="left:1466px;top:646px;width:14px;height:18px;background:linear-gradient(#d8d8d8,#c4c4c4);border-left:1px solid #b0b0b0"></div>
<svg style="left:1467px;top:647px;" width="12" height="16" viewBox="0 0 12 16"><polygon points="2,6.5 10,6.5 6,2" fill="#111"/><polygon points="2,9.5 10,9.5 6,14" fill="#111"/></svg>
<div class="t" style="left:1425.5px;top:650.6px;font-size:11px;color:#111;font-weight:normal;letter-spacing:0.9px">16</div>
<div class="a" style="left:1418px;top:669px;width:13px;height:13px;background:#e0e0e0;border:1px solid #8a8a8a"></div>
<div class="t" style="left:1437px;top:671.1px;font-size:11px;color:#141414;font-weight:normal;letter-spacing:0.85px">Aggregate</div>
<div class="a" style="left:1418px;top:687px;width:13px;height:13px;background:#e0e0e0;border:1px solid #8a8a8a"></div>
<div class="t" style="left:1437px;top:689.1px;font-size:11px;color:#141414;font-weight:normal;letter-spacing:0.85px">Binarize</div>
<div class="a" style="left:1418px;top:705px;width:13px;height:13px;background:#e0e0e0;border:1px solid #8a8a8a"></div>
<div class="t" style="left:1437px;top:707.1px;font-size:11px;color:#141414;font-weight:normal;letter-spacing:0.85px">Contours</div>
<div class="a" style="left:1418px;top:723px;width:13px;height:13px;background:#e0e0e0;border:1px solid #8a8a8a"></div>
<div class="t" style="left:1437px;top:725.1px;font-size:11px;color:#141414;font-weight:normal;letter-spacing:0.85px">Invert</div>
<div class="a" style="left:1315px;top:743px;width:377px;height:19px;background:#aaa69f;"></div>
<div class="t" style="left:1319px;top:747.1px;font-size:12px;color:#1558b0;font-weight:bold;letter-spacing:0.7px">Mask Preprocessing</div>
<svg style="left:1673px;top:745px;" width="14" height="15" viewBox="0 0 14 15"><polygon points="7,1 13,7 1,7" fill="#1558b0"/><polygon points="7,7.5 13,13.5 1,13.5" fill="#1558b0"/></svg>
<div class="t" style="right:506.20px;top:773.6px;font-size:11px;color:#141414;letter-spacing:0.8px">Shadows:</div>
<div class="a" style="left:1418px;top:768px;width:63px;height:20px;background:#e2e2e2;border:1px solid #7c7c7c"></div>
<div class="t" style="left:1425.5px;top:773.6px;font-size:11px;color:#111;font-weight:normal;letter-spacing:0.9px">0.00000</div>
<div class="a" style="left:1485px;top:775.5px;width:207px;height:5px;background:#dadada;border:1px solid #7f7f7f"></div>
<svg style="left:1484.5px;top:772px;" width="12" height="12" viewBox="0 0 12 12"><defs><radialGradient id="kg" cx="0.5" cy="0.35" r="0.6"><stop offset="0" stop-color="#e8e8e8"/><stop offset="1" stop-color="#b4b4b4"/></radialGradient></defs><circle cx="6" cy="6" r="5.2" fill="url(#kg)" stroke="#7a7a7a" stroke-width="0.9"/></svg>
<div class="t" style="right:506.20px;top:798.6px;font-size:11px;color:#141414;letter-spacing:0.8px">Midtones:</div>
<div class="a" style="left:1418px;top:793px;width:63px;height:20px;background:#e2e2e2;border:1px solid #7c7c7c"></div>
<div class="t" style="left:1425.5px;top:798.6px;font-size:11px;color:#111;font-weight:normal;letter-spacing:0.9px">0.50000</div>
<div class="a" style="left:1485px;top:800.5px;width:207px;height:5px;background:#dadada;border:1px solid #7f7f7f"></div>
<div class="a" style="left:1485px;top:800.5px;width:103px;height:5px;background:#939393;border:1px solid #7f7f7f"></div>
<svg style="left:1582px;top:797px;" width="12" height="12" viewBox="0 0 12 12"><defs><radialGradient id="kg" cx="0.5" cy="0.35" r="0.6"><stop offset="0" stop-color="#e8e8e8"/><stop offset="1" stop-color="#b4b4b4"/></radialGradient></defs><circle cx="6" cy="6" r="5.2" fill="url(#kg)" stroke="#7a7a7a" stroke-width="0.9"/></svg>
<div class="t" style="right:506.20px;top:823.6px;font-size:11px;color:#141414;letter-spacing:0.8px">Highlights:</div>
<div class="a" style="left:1418px;top:818px;width:63px;height:20px;background:#e2e2e2;border:1px solid #7c7c7c"></div>
<div class="t" style="left:1425.5px;top:823.6px;font-size:11px;color:#111;font-weight:normal;letter-spacing:0.9px">1.00000</div>
<div class="a" style="left:1485px;top:825.5px;width:207px;height:5px;background:#dadada;border:1px solid #7f7f7f"></div>
<div class="a" style="left:1485px;top:825.5px;width:201.5px;height:5px;background:#939393;border:1px solid #7f7f7f"></div>
<svg style="left:1680.5px;top:822px;" width="12" height="12" viewBox="0 0 12 12"><defs><radialGradient id="kg" cx="0.5" cy="0.35" r="0.6"><stop offset="0" stop-color="#e8e8e8"/><stop offset="1" stop-color="#b4b4b4"/></radialGradient></defs><circle cx="6" cy="6" r="5.2" fill="url(#kg)" stroke="#7a7a7a" stroke-width="0.9"/></svg>
<div class="t" style="right:506.20px;top:848.6px;font-size:11px;color:#141414;letter-spacing:0.8px">Truncation:</div>
<div class="a" style="left:1418px;top:843px;width:63px;height:20px;background:#e2e2e2;border:1px solid #7c7c7c"></div>
<div class="t" style="left:1425.5px;top:848.6px;font-size:11px;color:#111;font-weight:normal;letter-spacing:0.9px">1.00000</div>
<div class="a" style="left:1485px;top:850.5px;width:207px;height:5px;background:#dadada;border:1px solid #7f7f7f"></div>
<div class="a" style="left:1485px;top:850.5px;width:201.5px;height:5px;background:#939393;border:1px solid #7f7f7f"></div>
<svg style="left:1680.5px;top:847px;" width="12" height="12" viewBox="0 0 12 12"><defs><radialGradient id="kg" cx="0.5" cy="0.35" r="0.6"><stop offset="0" stop-color="#e8e8e8"/><stop offset="1" stop-color="#b4b4b4"/></radialGradient></defs><circle cx="6" cy="6" r="5.2" fill="url(#kg)" stroke="#7a7a7a" stroke-width="0.9"/></svg>
<div class="t" style="right:506.20px;top:873.6px;font-size:11px;color:#141414;letter-spacing:0.8px">Limit:</div>
<div class="a" style="left:1418px;top:868px;width:63px;height:20px;background:#e2e2e2;border:1px solid #7c7c7c"></div>
<div class="t" style="left:1425.5px;top:873.6px;font-size:11px;color:#111;font-weight:normal;letter-spacing:0.9px">1.00000</div>
<div class="a" style="left:1485px;top:875.5px;width:207px;height:5px;background:#dadada;border:1px solid #7f7f7f"></div>
<div class="a" style="left:1485px;top:875.5px;width:201.5px;height:5px;background:#939393;border:1px solid #7f7f7f"></div>
<svg style="left:1680.5px;top:872px;" width="12" height="12" viewBox="0 0 12 12"><defs><radialGradient id="kg" cx="0.5" cy="0.35" r="0.6"><stop offset="0" stop-color="#e8e8e8"/><stop offset="1" stop-color="#b4b4b4"/></radialGradient></defs><circle cx="6" cy="6" r="5.2" fill="url(#kg)" stroke="#7a7a7a" stroke-width="0.9"/></svg>
<svg style="left:1315px;top:902px;" width="40" height="14" viewBox="0 0 40 14"><polygon points="1,1 1,13 13,13" fill="#1356a5"/><rect x="26" y="1" width="12" height="12" fill="#1356a5"/></svg>
<svg style="left:1628px;top:902px;" width="66" height="14" viewBox="0 0 66 14"><rect x="2" y="1.5" width="11" height="11" fill="none" stroke="#1356a5" stroke-width="1.6"/><path d="M27,1.5 H33 L38,6.5 V12.5 H27 Z" fill="none" stroke="#1356a5" stroke-width="1.6"/><path d="M51.5,1 L56,5.5 M63.5,1 L59,5.5 M51.5,13 L56,8.5 M63.5,13 L59,8.5 M53,6 H57 V2 M62,6 H58 V2 M53,8 H57 V12 M62,8 H58 V12" stroke="#1356a5" stroke-width="1.5" fill="none"/></svg>
<svg style="left:6px;top:1052px;" width="6" height="22" viewBox="0 0 6 22"><rect x="0" y="0" width="2" height="2" fill="#b4b4b4"/><rect x="0" y="1" width="1" height="1" fill="#5a5a5a"/><rect x="1" y="0" width="1" height="1" fill="#888"/><rect x="4" y="0" width="2" height="2" fill="#b4b4b4"/><rect x="4" y="1" width="1" height="1" fill="#5a5a5a"/><rect x="5" y="0" width="1" height="1" fill="#888"/><rect x="2" y="2" width="2" height="2" fill="#b4b4b4"/><rect x="2" y="3" width="1" height="1" fill="#5a5a5a"/><rect x="3" y="2" width="1" height="1" fill="#888"/><rect x="0" y="4" width="2" height="2" fill="#b4b4b4"/><rect x="0" y="5" width="1" height="1" fill="#5a5a5a"/><rect x="1" y="4" width="1" height="1" fill="#888"/><rect x="4" y="4" width="2" height="2" fill="#b4b4b4"/><rect x="4" y="5" width="1" height="1" fill="#5a5a5a"/><rect x="5" y="4" width="1" height="1" fill="#888"/><rect x="2" y="6" width="2" height="2" fill="#b4b4b4"/><rect x="2" y="7" width="1" height="1" fill="#5a5a5a"/><rect x="3" y="6" width="1" height="1" fill="#888"/><rect x="0" y="8" width="2" height="2" fill="#b4b4b4"/><rect x="0" y="9" width="1" height="1" fill="#5a5a5a"/><rect x="1" y="8" width="1" height="1" fill="#888"/><rect x="4" y="8" width="2" height="2" fill="#b4b4b4"/><rect x="4" y="9" width="1" height="1" fill="#5a5a5a"/><rect x="5" y="8" width="1" height="1" fill="#888"/><rect x="2" y="10" width="2" height="2" fill="#b4b4b4"/><rect x="2" y="11" width="1" height="1" fill="#5a5a5a"/><rect x="3" y="10" width="1" height="1" fill="#888"/><rect x="0" y="12" width="2" height="2" fill="#b4b4b4"/><rect x="0" y="13" width="1" height="1" fill="#5a5a5a"/><rect x="1" y="12" width="1" height="1" fill="#888"/><rect x="4" y="12" width="2" height="2" fill="#b4b4b4"/><rect x="4" y="13" width="1" height="1" fill="#5a5a5a"/><rect x="5" y="12" width="1" height="1" fill="#888"/><rect x="2" y="14" width="2" height="2" fill="#b4b4b4"/><rect x="2" y="15" width="1" height="1" fill="#5a5a5a"/><rect x="3" y="14" width="1" height="1" fill="#888"/><rect x="0" y="16" width="2" height="2" fill="#b4b4b4"/><rect x="0" y="17" width="1" height="1" fill="#5a5a5a"/><rect x="1" y="16" width="1" height="1" fill="#888"/><rect x="4" y="16" width="2" height="2" fill="#b4b4b4"/><rect x="4" y="17" width="1" height="1" fill="#5a5a5a"/><rect x="5" y="16" width="1" height="1" fill="#888"/><rect x="2" y="18" width="2" height="2" fill="#b4b4b4"/><rect x="2" y="19" width="1" height="1" fill="#5a5a5a"/><rect x="3" y="18" width="1" height="1" fill="#888"/></svg>
<div class="a" style="left:20px;top:1053px;width:293px;height:20px;background:linear-gradient(#f8f8f8,#d8d8d8);border:1px solid #8c8c8c"></div>
<svg style="left:28px;top:1057px;" width="13" height="13" viewBox="0 0 13 13"><rect x="0" y="0" width="12" height="12" fill="#555"/><rect x="2" y="4" width="8" height="6" fill="#e8e8e8"/></svg>
<div class="t mono" style="left:48px;top:1059px;font-size:11.4px;color:#111;font-weight:normal;">star_mask1</div>
<div class="a" style="left:294px;top:1055px;width:1px;height:16px;background:#a8a8a8;"></div>
<svg style="left:298px;top:1059px;" width="12" height="8" viewBox="0 0 12 8"><polygon points="0.5,0.5 10.5,0.5 5.5,6" fill="#1e1e1e"/></svg>
<div class="a" style="left:317px;top:1053px;width:20px;height:20px;background:#ffffff;border:1px solid #8c8c8c"></div>
<svg style="left:320px;top:1056px;" width="14" height="14" viewBox="0 0 14 14"><polygon points="2.5,4 5,1.5 12,1.5 12,12 2.5,12" fill="#555"/><rect x="5.5" y="4.5" width="5" height="6" fill="#fff"/></svg>
<svg style="left:349px;top:1052px;" width="6" height="22" viewBox="0 0 6 22"><rect x="0" y="0" width="2" height="2" fill="#b4b4b4"/><rect x="0" y="1" width="1" height="1" fill="#5a5a5a"/><rect x="1" y="0" width="1" height="1" fill="#888"/><rect x="4" y="0" width="2" height="2" fill="#b4b4b4"/><rect x="4" y="1" width="1" height="1" fill="#5a5a5a"/><rect x="5" y="0" width="1" height="1" fill="#888"/><rect x="2" y="2" width="2" height="2" fill="#b4b4b4"/><rect x="2" y="3" width="1" height="1" fill="#5a5a5a"/><rect x="3" y="2" width="1" height="1" fill="#888"/><rect x="0" y="4" width="2" height="2" fill="#b4b4b4"/><rect x="0" y="5" width="1" height="1" fill="#5a5a5a"/><rect x="1" y="4" width="1" height="1" fill="#888"/><rect x="4" y="4" width="2" height="2" fill="#b4b4b4"/><rect x="4" y="5" width="1" height="1" fill="#5a5a5a"/><rect x="5" y="4" width="1" height="1" fill="#888"/><rect x="2" y="6" width="2" height="2" fill="#b4b4b4"/><rect x="2" y="7" width="1" height="1" fill="#5a5a5a"/><rect x="3" y="6" width="1" height="1" fill="#888"/><rect x="0" y="8" width="2" height="2" fill="#b4b4b4"/><rect x="0" y="9" width="1" height="1" fill="#5a5a5a"/><rect x="1" y="8" width="1" height="1" fill="#888"/><rect x="4" y="8" width="2" height="2" fill="#b4b4b4"/><rect x="4" y="9" width="1" height="1" fill="#5a5a5a"/><rect x="5" y="8" width="1" height="1" fill="#888"/><rect x="2" y="10" width="2" height="2" fill="#b4b4b4"/><rect x="2" y="11" width="1" height="1" fill="#5a5a5a"/><rect x="3" y="10" width="1" height="1" fill="#888"/><rect x="0" y="12" width="2" height="2" fill="#b4b4b4"/><rect x="0" y="13" width="1" height="1" fill="#5a5a5a"/><rect x="1" y="12" width="1" height="1" fill="#888"/><rect x="4" y="12" width="2" height="2" fill="#b4b4b4"/><rect x="4" y="13" width="1" height="1" fill="#5a5a5a"/><rect x="5" y="12" width="1" height="1" fill="#888"/><rect x="2" y="14" width="2" height="2" fill="#b4b4b4"/><rect x="2" y="15" width="1" height="1" fill="#5a5a5a"/><rect x="3" y="14" width="1" height="1" fill="#888"/><rect x="0" y="16" width="2" height="2" fill="#b4b4b4"/><rect x="0" y="17" width="1" height="1" fill="#5a5a5a"/><rect x="1" y="16" width="1" height="1" fill="#888"/><rect x="4" y="16" width="2" height="2" fill="#b4b4b4"/><rect x="4" y="17" width="1" height="1" fill="#5a5a5a"/><rect x="5" y="16" width="1" height="1" fill="#888"/><rect x="2" y="18" width="2" height="2" fill="#b4b4b4"/><rect x="2" y="19" width="1" height="1" fill="#5a5a5a"/><rect x="3" y="18" width="1" height="1" fill="#888"/></svg>
<div class="a" style="left:363px;top:1054px;width:19px;height:19px;background:radial-gradient(circle at 50% 10%,#8ab8ff,#2a60d0 75%,#1a3a90);border:1px solid #10307a"></div>
<div class="a" style="left:386px;top:1054px;width:19px;height:19px;background:radial-gradient(circle at 50% 10%,#a8a8a8,#505050 70%,#303030);border:1px solid #222"></div>
<div class="a" style="left:409px;top:1054px;width:19px;height:19px;background:radial-gradient(circle at 50% 10%,#a8a8a8,#505050 70%,#303030);border:1px solid #222"></div>
<div class="a" style="left:432px;top:1054px;width:19px;height:19px;background:radial-gradient(circle at 50% 10%,#a8a8a8,#505050 70%,#303030);border:1px solid #222"></div>
<svg style="left:459px;top:1052px;" width="6" height="22" viewBox="0 0 6 22"><rect x="0" y="0" width="2" height="2" fill="#b4b4b4"/><rect x="0" y="1" width="1" height="1" fill="#5a5a5a"/><rect x="1" y="0" width="1" height="1" fill="#888"/><rect x="4" y="0" width="2" height="2" fill="#b4b4b4"/><rect x="4" y="1" width="1" height="1" fill="#5a5a5a"/><rect x="5" y="0" width="1" height="1" fill="#888"/><rect x="2" y="2" width="2" height="2" fill="#b4b4b4"/><rect x="2" y="3" width="1" height="1" fill="#5a5a5a"/><rect x="3" y="2" width="1" height="1" fill="#888"/><rect x="0" y="4" width="2" height="2" fill="#b4b4b4"/><rect x="0" y="5" width="1" height="1" fill="#5a5a5a"/><rect x="1" y="4" width="1" height="1" fill="#888"/><rect x="4" y="4" width="2" height="2" fill="#b4b4b4"/><rect x="4" y="5" width="1" height="1" fill="#5a5a5a"/><rect x="5" y="4" width="1" height="1" fill="#888"/><rect x="2" y="6" width="2" height="2" fill="#b4b4b4"/><rect x="2" y="7" width="1" height="1" fill="#5a5a5a"/><rect x="3" y="6" width="1" height="1" fill="#888"/><rect x="0" y="8" width="2" height="2" fill="#b4b4b4"/><rect x="0" y="9" width="1" height="1" fill="#5a5a5a"/><rect x="1" y="8" width="1" height="1" fill="#888"/><rect x="4" y="8" width="2" height="2" fill="#b4b4b4"/><rect x="4" y="9" width="1" height="1" fill="#5a5a5a"/><rect x="5" y="8" width="1" height="1" fill="#888"/><rect x="2" y="10" width="2" height="2" fill="#b4b4b4"/><rect x="2" y="11" width="1" height="1" fill="#5a5a5a"/><rect x="3" y="10" width="1" height="1" fill="#888"/><rect x="0" y="12" width="2" height="2" fill="#b4b4b4"/><rect x="0" y="13" width="1" height="1" fill="#5a5a5a"/><rect x="1" y="12" width="1" height="1" fill="#888"/><rect x="4" y="12" width="2" height="2" fill="#b4b4b4"/><rect x="4" y="13" width="1" height="1" fill="#5a5a5a"/><rect x="5" y="12" width="1" height="1" fill="#888"/><rect x="2" y="14" width="2" height="2" fill="#b4b4b4"/><rect x="2" y="15" width="1" height="1" fill="#5a5a5a"/><rect x="3" y="14" width="1" height="1" fill="#888"/><rect x="0" y="16" width="2" height="2" fill="#b4b4b4"/><rect x="0" y="17" width="1" height="1" fill="#5a5a5a"/><rect x="1" y="16" width="1" height="1" fill="#888"/><rect x="4" y="16" width="2" height="2" fill="#b4b4b4"/><rect x="4" y="17" width="1" height="1" fill="#5a5a5a"/><rect x="5" y="16" width="1" height="1" fill="#888"/><rect x="2" y="18" width="2" height="2" fill="#b4b4b4"/><rect x="2" y="19" width="1" height="1" fill="#5a5a5a"/><rect x="3" y="18" width="1" height="1" fill="#888"/></svg>
<svg style="left:665px;top:1052px;" width="6" height="22" viewBox="0 0 6 22"><rect x="0" y="0" width="2" height="2" fill="#b4b4b4"/><rect x="0" y="1" width="1" height="1" fill="#5a5a5a"/><rect x="1" y="0" width="1" height="1" fill="#888"/><rect x="4" y="0" width="2" height="2" fill="#b4b4b4"/><rect x="4" y="1" width="1" height="1" fill="#5a5a5a"/><rect x="5" y="0" width="1" height="1" fill="#888"/><rect x="2" y="2" width="2" height="2" fill="#b4b4b4"/><rect x="2" y="3" width="1" height="1" fill="#5a5a5a"/><rect x="3" y="2" width="1" height="1" fill="#888"/><rect x="0" y="4" width="2" height="2" fill="#b4b4b4"/><rect x="0" y="5" width="1" height="1" fill="#5a5a5a"/><rect x="1" y="4" width="1" height="1" fill="#888"/><rect x="4" y="4" width="2" height="2" fill="#b4b4b4"/><rect x="4" y="5" width="1" height="1" fill="#5a5a5a"/><rect x="5" y="4" width="1" height="1" fill="#888"/><rect x="2" y="6" width="2" height="2" fill="#b4b4b4"/><rect x="2" y="7" width="1" height="1" fill="#5a5a5a"/><rect x="3" y="6" width="1" height="1" fill="#888"/><rect x="0" y="8" width="2" height="2" fill="#b4b4b4"/><rect x="0" y="9" width="1" height="1" fill="#5a5a5a"/><rect x="1" y="8" width="1" height="1" fill="#888"/><rect x="4" y="8" width="2" height="2" fill="#b4b4b4"/><rect x="4" y="9" width="1" height="1" fill="#5a5a5a"/><rect x="5" y="8" width="1" height="1" fill="#888"/><rect x="2" y="10" width="2" height="2" fill="#b4b4b4"/><rect x="2" y="11" width="1" height="1" fill="#5a5a5a"/><rect x="3" y="10" width="1" height="1" fill="#888"/><rect x="0" y="12" width="2" height="2" fill="#b4b4b4"/><rect x="0" y="13" width="1" height="1" fill="#5a5a5a"/><rect x="1" y="12" width="1" height="1" fill="#888"/><rect x="4" y="12" width="2" height="2" fill="#b4b4b4"/><rect x="4" y="13" width="1" height="1" fill="#5a5a5a"/><rect x="5" y="12" width="1" height="1" fill="#888"/><rect x="2" y="14" width="2" height="2" fill="#b4b4b4"/><rect x="2" y="15" width="1" height="1" fill="#5a5a5a"/><rect x="3" y="14" width="1" height="1" fill="#888"/><rect x="0" y="16" width="2" height="2" fill="#b4b4b4"/><rect x="0" y="17" width="1" height="1" fill="#5a5a5a"/><rect x="1" y="16" width="1" height="1" fill="#888"/><rect x="4" y="16" width="2" height="2" fill="#b4b4b4"/><rect x="4" y="17" width="1" height="1" fill="#5a5a5a"/><rect x="5" y="16" width="1" height="1" fill="#888"/><rect x="2" y="18" width="2" height="2" fill="#b4b4b4"/><rect x="2" y="19" width="1" height="1" fill="#5a5a5a"/><rect x="3" y="18" width="1" height="1" fill="#888"/></svg>
<svg style="left:1095px;top:1057px;" width="12" height="12" viewBox="0 0 12 12"><polygon points="1,0.5 10.5,5.5 1,10.5" fill="#333"/></svg>
<svg style="left:1124px;top:1052px;" width="6" height="22" viewBox="0 0 6 22"><rect x="0" y="0" width="2" height="2" fill="#b4b4b4"/><rect x="0" y="1" width="1" height="1" fill="#5a5a5a"/><rect x="1" y="0" width="1" height="1" fill="#888"/><rect x="4" y="0" width="2" height="2" fill="#b4b4b4"/><rect x="4" y="1" width="1" height="1" fill="#5a5a5a"/><rect x="5" y="0" width="1" height="1" fill="#888"/><rect x="2" y="2" width="2" height="2" fill="#b4b4b4"/><rect x="2" y="3" width="1" height="1" fill="#5a5a5a"/><rect x="3" y="2" width="1" height="1" fill="#888"/><rect x="0" y="4" width="2" height="2" fill="#b4b4b4"/><rect x="0" y="5" width="1" height="1" fill="#5a5a5a"/><rect x="1" y="4" width="1" height="1" fill="#888"/><rect x="4" y="4" width="2" height="2" fill="#b4b4b4"/><rect x="4" y="5" width="1" height="1" fill="#5a5a5a"/><rect x="5" y="4" width="1" height="1" fill="#888"/><rect x="2" y="6" width="2" height="2" fill="#b4b4b4"/><rect x="2" y="7" width="1" height="1" fill="#5a5a5a"/><rect x="3" y="6" width="1" height="1" fill="#888"/><rect x="0" y="8" width="2" height="2" fill="#b4b4b4"/><rect x="0" y="9" width="1" height="1" fill="#5a5a5a"/><rect x="1" y="8" width="1" height="1" fill="#888"/><rect x="4" y="8" width="2" height="2" fill="#b4b4b4"/><rect x="4" y="9" width="1" height="1" fill="#5a5a5a"/><rect x="5" y="8" width="1" height="1" fill="#888"/><rect x="2" y="10" width="2" height="2" fill="#b4b4b4"/><rect x="2" y="11" width="1" height="1" fill="#5a5a5a"/><rect x="3" y="10" width="1" height="1" fill="#888"/><rect x="0" y="12" width="2" height="2" fill="#b4b4b4"/><rect x="0" y="13" width="1" height="1" fill="#5a5a5a"/><rect x="1" y="12" width="1" height="1" fill="#888"/><rect x="4" y="12" width="2" height="2" fill="#b4b4b4"/><rect x="4" y="13" width="1" height="1" fill="#5a5a5a"/><rect x="5" y="12" width="1" height="1" fill="#888"/><rect x="2" y="14" width="2" height="2" fill="#b4b4b4"/><rect x="2" y="15" width="1" height="1" fill="#5a5a5a"/><rect x="3" y="14" width="1" height="1" fill="#888"/><rect x="0" y="16" width="2" height="2" fill="#b4b4b4"/><rect x="0" y="17" width="1" height="1" fill="#5a5a5a"/><rect x="1" y="16" width="1" height="1" fill="#888"/><rect x="4" y="16" width="2" height="2" fill="#b4b4b4"/><rect x="4" y="17" width="1" height="1" fill="#5a5a5a"/><rect x="5" y="16" width="1" height="1" fill="#888"/><rect x="2" y="18" width="2" height="2" fill="#b4b4b4"/><rect x="2" y="19" width="1" height="1" fill="#5a5a5a"/><rect x="3" y="18" width="1" height="1" fill="#888"/></svg>
<div class="t mono" style="left:1148.5px;top:1058px;font-size:11.6px;color:#111;font-weight:normal;">w:6400 · h:4297 · n:1 · i16 · Gray · 52.454 MiB</div>
</body></html>
